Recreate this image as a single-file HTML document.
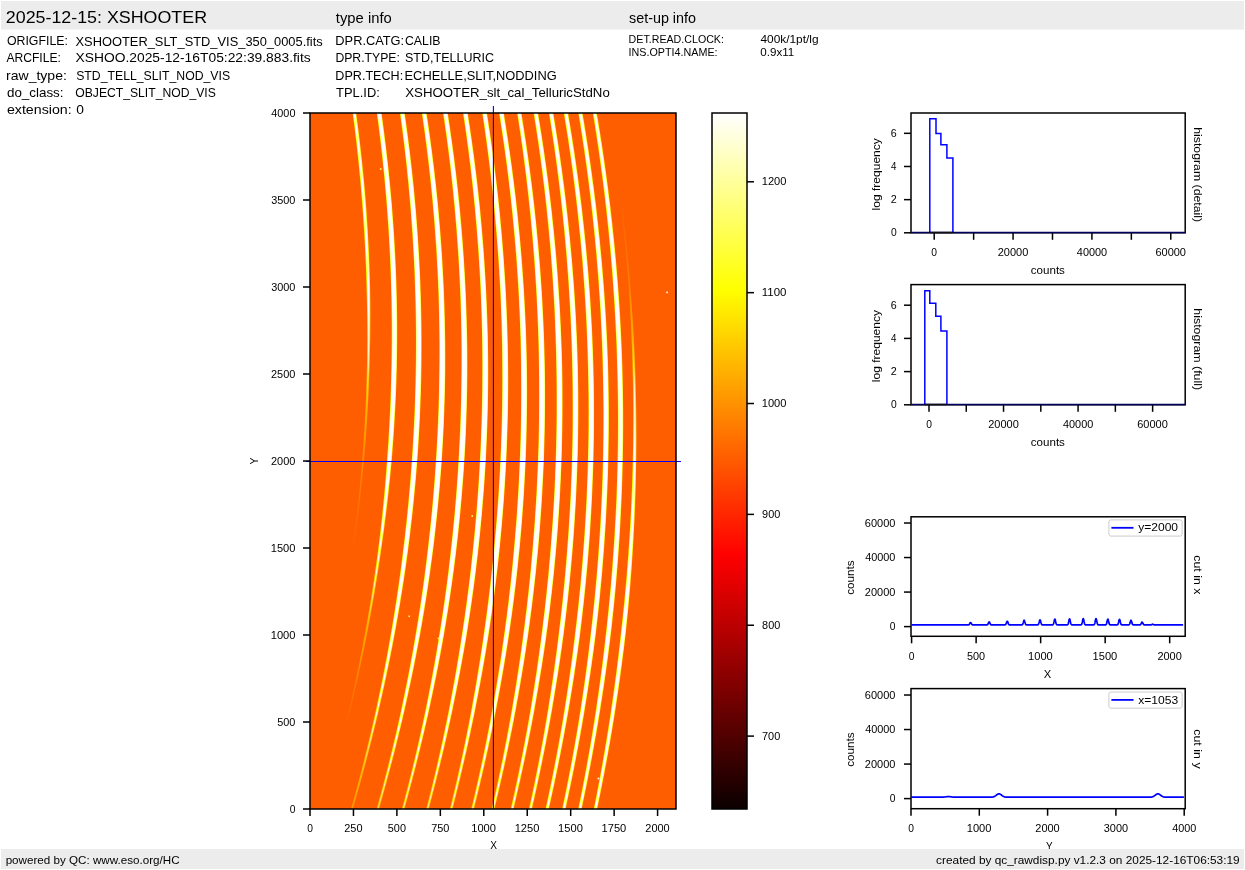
<!DOCTYPE html><html><head><meta charset="utf-8"><style>html,body{margin:0;padding:0;background:#fff;width:1245px;height:870px;overflow:hidden;position:relative}</style></head><body><svg width="1245" height="870" viewBox="0 0 1245 870" style="position:absolute;left:0;top:0;will-change:transform" font-family='"Liberation Sans", sans-serif'>
<defs>
<linearGradient id="hot" x1="0" y1="1" x2="0" y2="0">
<stop offset="0" stop-color="rgb(11,0,0)"/>
<stop offset="0.365" stop-color="rgb(255,0,0)"/>
<stop offset="0.746" stop-color="rgb(255,255,0)"/>
<stop offset="1" stop-color="rgb(255,255,255)"/>
</linearGradient>
</defs>
<rect x="0" y="0" width="1245" height="870" fill="#fff"/>
<rect x="1" y="1" width="1243" height="28.6" fill="#ececec"/>
<rect x="1" y="849" width="1243" height="19.8" fill="#ececec"/>
<text x="5.80" y="22.70" font-size="17.30" textLength="201.22" lengthAdjust="spacingAndGlyphs" fill="#000">2025-12-15: XSHOOTER</text>
<text x="335.88" y="22.80" font-size="13.80" textLength="55.84" lengthAdjust="spacingAndGlyphs" fill="#000">type info</text>
<text x="629.00" y="22.80" font-size="13.80" textLength="67.00" lengthAdjust="spacingAndGlyphs" fill="#000">set-up info</text>
<text x="6.92" y="45.20" font-size="12.80" textLength="61.01" lengthAdjust="spacingAndGlyphs" fill="#000">ORIGFILE:</text>
<text x="75.51" y="45.70" font-size="12.80" textLength="247.15" lengthAdjust="spacingAndGlyphs" fill="#000">XSHOOTER_SLT_STD_VIS_350_0005.fits</text>
<text x="6.38" y="61.90" font-size="12.80" textLength="54.53" lengthAdjust="spacingAndGlyphs" fill="#000">ARCFILE:</text>
<text x="75.49" y="61.80" font-size="12.80" textLength="235.21" lengthAdjust="spacingAndGlyphs" fill="#000">XSHOO.2025-12-16T05:22:39.883.fits</text>
<text x="6.07" y="80.10" font-size="12.80" textLength="60.81" lengthAdjust="spacingAndGlyphs" fill="#000">raw_type:</text>
<text x="76.14" y="80.30" font-size="12.80" textLength="154.02" lengthAdjust="spacingAndGlyphs" fill="#000">STD_TELL_SLIT_NOD_VIS</text>
<text x="6.94" y="97.20" font-size="12.80" textLength="56.59" lengthAdjust="spacingAndGlyphs" fill="#000">do_class:</text>
<text x="75.22" y="96.70" font-size="12.80" textLength="140.63" lengthAdjust="spacingAndGlyphs" fill="#000">OBJECT_SLIT_NOD_VIS</text>
<text x="6.90" y="113.50" font-size="12.80" textLength="64.80" lengthAdjust="spacingAndGlyphs" fill="#000">extension:</text>
<text x="76.16" y="113.50" font-size="12.80" textLength="7.68" lengthAdjust="spacingAndGlyphs" fill="#000">0</text>
<text x="335.36" y="44.80" font-size="12.80" textLength="68.79" lengthAdjust="spacingAndGlyphs" fill="#000">DPR.CATG:</text>
<text x="404.97" y="44.80" font-size="12.80" textLength="35.57" lengthAdjust="spacingAndGlyphs" fill="#000">CALIB</text>
<text x="335.40" y="61.90" font-size="12.80" textLength="64.52" lengthAdjust="spacingAndGlyphs" fill="#000">DPR.TYPE:</text>
<text x="405.03" y="61.90" font-size="12.80" textLength="88.94" lengthAdjust="spacingAndGlyphs" fill="#000">STD,TELLURIC</text>
<text x="335.37" y="79.90" font-size="12.80" textLength="67.78" lengthAdjust="spacingAndGlyphs" fill="#000">DPR.TECH:</text>
<text x="404.56" y="79.90" font-size="12.80" textLength="152.20" lengthAdjust="spacingAndGlyphs" fill="#000">ECHELLE,SLIT,NODDING</text>
<text x="336.11" y="96.80" font-size="12.80" textLength="43.67" lengthAdjust="spacingAndGlyphs" fill="#000">TPL.ID:</text>
<text x="405.30" y="96.80" font-size="12.80" textLength="204.45" lengthAdjust="spacingAndGlyphs" fill="#000">XSHOOTER_slt_cal_TelluricStdNo</text>
<text x="628.64" y="42.90" font-size="10.40" textLength="95.32" lengthAdjust="spacingAndGlyphs" fill="#000">DET.READ.CLOCK:</text>
<text x="760.43" y="42.90" font-size="10.40" textLength="58.14" lengthAdjust="spacingAndGlyphs" fill="#000">400k/1pt/lg</text>
<text x="628.51" y="55.70" font-size="10.40" textLength="89.08" lengthAdjust="spacingAndGlyphs" fill="#000">INS.OPTI4.NAME:</text>
<text x="760.26" y="55.70" font-size="10.40" textLength="34.00" lengthAdjust="spacingAndGlyphs" fill="#000">0.9x11</text>
<text x="5.65" y="864.00" font-size="10.40" textLength="173.89" lengthAdjust="spacingAndGlyphs" fill="#000">powered by QC: www.eso.org/HC</text>
<text x="936.10" y="864.30" font-size="10.40" textLength="303.56" lengthAdjust="spacingAndGlyphs" fill="#000">created by qc_rawdisp.py v1.2.3 on 2025-12-16T06:53:19</text>
<rect x="310.0" y="113.0" width="366.0" height="696.0" fill="rgb(255,94,0)"/>
<clipPath id="imgclip"><rect x="310.0" y="113.0" width="366.0" height="696.0"/></clipPath>
<g clip-path="url(#imgclip)">
<linearGradient id="ag0" gradientUnits="userSpaceOnUse" x1="0" y1="113" x2="0" y2="809"><stop offset="0.000" stop-color="rgb(255, 255, 0)"/><stop offset="0.125" stop-color="rgb(255, 255, 0)"/><stop offset="0.250" stop-color="rgb(255, 255, 0)"/><stop offset="0.375" stop-color="rgb(255, 200, 0)"/><stop offset="0.500" stop-color="rgb(255, 137, 0)"/><stop offset="0.625" stop-color="rgb(255, 94, 0)"/><stop offset="0.750" stop-color="rgb(255, 94, 0)"/><stop offset="0.875" stop-color="rgb(255, 94, 0)"/><stop offset="1.000" stop-color="rgb(255, 94, 0)"/></linearGradient>
<path d="M351.97,108.0 L352.65,113.0 L353.31,118.0 L353.96,123.0 L354.59,128.0 L355.20,133.0 L355.80,138.0 L356.38,143.0 L356.95,148.1 L357.50,153.1 L358.03,158.1 L358.55,163.1 L359.05,168.1 L359.54,173.1 L360.01,178.1 L360.46,183.1 L360.90,188.1 L361.32,193.1 L361.73,198.1 L362.13,203.1 L362.52,208.1 L362.89,213.1 L363.25,218.2 L363.59,223.2 L363.92,228.2 L364.23,233.2 L364.52,238.2 L364.80,243.2 L365.06,248.2 L365.31,253.2 L365.54,258.2 L365.75,263.2 L365.95,268.2 L366.13,273.2 L366.30,278.2 L366.45,283.2 L366.59,288.3 L366.73,293.3 L366.85,298.3 L366.96,303.3 L367.05,308.3 L367.13,313.3 L367.19,318.3 L367.23,323.3 L367.26,328.3 L367.27,333.3 L367.27,338.3 L367.25,343.3 L367.21,348.3 L367.16,353.3 L367.09,358.4 L367.01,363.4 L366.91,368.4 L366.80,373.4 L366.66,378.4 L366.51,383.4 L366.35,388.4 L366.17,393.4 L365.97,398.4 L365.76,403.4 L365.53,408.4 L365.28,413.4 L365.02,418.4 L364.74,423.4 L364.45,428.5 L364.14,433.5 L363.82,438.5 L363.48,443.5 L363.12,448.5 L362.75,453.5 L362.36,458.5 L361.95,463.5 L361.53,468.5 L361.08,473.5 L360.62,478.5 L360.15,483.5 L359.65,488.5 L359.15,493.5 L358.62,498.6 L358.08,503.6 L357.53,508.6 L356.96,513.6 L356.37,518.6 L355.77,523.6 L355.15,528.6 L354.51,533.6 L353.86,538.6 L353.20,543.6 L352.51,548.6 L351.80,553.6 L351.07,558.6 L350.32,563.6 L349.56,568.7 L348.78,573.7 L347.98,578.7 L347.17,583.7 L346.35,588.7 L345.51,593.7 L344.65,598.7 L343.77,603.7 L342.88,608.7 L341.98,613.7 L341.06,618.7 L340.12,623.7 L339.16,628.7 L338.20,633.7 L337.21,638.8 L336.21,643.8 L335.19,648.8 L334.16,653.8 L333.11,658.8 L332.05,663.8 L330.96,668.8 L329.87,673.8 L328.76,678.8 L327.63,683.8 L326.48,688.8 L325.32,693.8 L324.15,698.8 L322.96,703.8 L321.75,708.9 L320.52,713.9 L319.28,718.9 L318.03,723.9 L316.76,728.9 L315.47,733.9 L314.17,738.9 L312.85,743.9 L311.51,748.9 L310.16,753.9 L308.79,758.9 L307.41,763.9 L306.01,768.9 L304.60,773.9 L303.17,779.0 L301.72,784.0 L300.26,789.0 L298.78,794.0 L297.29,799.0 L295.78,804.0 L294.25,809.0 L292.71,814.0 L293.81,814.0 L295.35,809.0 L296.88,804.0 L298.39,799.0 L299.88,794.0 L301.36,789.0 L302.82,784.0 L304.27,779.0 L305.70,773.9 L307.11,768.9 L308.51,763.9 L309.89,758.9 L311.26,753.9 L312.61,748.9 L313.95,743.9 L315.27,738.9 L316.57,733.9 L317.86,728.9 L319.13,723.9 L320.38,718.9 L321.62,713.9 L322.85,708.9 L324.06,703.8 L325.25,698.8 L326.42,693.8 L327.58,688.8 L328.73,683.8 L329.86,678.8 L330.97,673.8 L332.06,668.8 L333.15,663.8 L334.21,658.8 L335.26,653.8 L336.29,648.8 L337.31,643.8 L338.31,638.8 L339.30,633.7 L340.26,628.7 L341.22,623.7 L342.16,618.7 L343.08,613.7 L343.98,608.7 L344.87,603.7 L345.75,598.7 L346.61,593.7 L347.45,588.7 L348.27,583.7 L349.08,578.7 L349.88,573.7 L350.66,568.7 L351.42,563.6 L352.17,558.6 L352.90,553.6 L353.61,548.6 L354.33,543.6 L355.03,538.6 L355.71,533.6 L356.38,528.6 L357.03,523.6 L357.67,518.6 L358.29,513.6 L358.89,508.6 L359.48,503.6 L360.05,498.6 L360.61,493.5 L361.15,488.5 L361.67,483.5 L362.18,478.5 L362.67,473.5 L363.15,468.5 L363.61,463.5 L364.06,458.5 L364.50,453.5 L364.92,448.5 L365.33,443.5 L365.72,438.5 L366.09,433.5 L366.45,428.5 L366.79,423.4 L367.12,418.4 L367.43,413.4 L367.72,408.4 L368.00,403.4 L368.27,398.4 L368.51,393.4 L368.74,388.4 L368.96,383.4 L369.16,378.4 L369.34,373.4 L369.51,368.4 L369.67,363.4 L369.81,358.4 L369.93,353.3 L370.03,348.3 L370.13,343.3 L370.20,338.3 L370.26,333.3 L370.30,328.3 L370.33,323.3 L370.34,318.3 L370.34,313.3 L370.31,308.3 L370.28,303.3 L370.23,298.3 L370.16,293.3 L370.07,288.3 L369.96,283.2 L369.82,278.2 L369.67,273.2 L369.50,268.2 L369.32,263.2 L369.12,258.2 L368.90,253.2 L368.67,248.2 L368.42,243.2 L368.16,238.2 L367.88,233.2 L367.58,228.2 L367.27,223.2 L366.94,218.2 L366.60,213.1 L366.24,208.1 L365.86,203.1 L365.47,198.1 L365.05,193.1 L364.61,188.1 L364.16,183.1 L363.69,178.1 L363.20,173.1 L362.70,168.1 L362.19,163.1 L361.66,158.1 L361.11,153.1 L360.54,148.1 L359.96,143.0 L359.37,138.0 L358.76,133.0 L358.13,128.0 L357.49,123.0 L356.83,118.0 L356.15,113.0 L355.47,108.0Z" fill="url(#ag0)"/>
<path d="M352.87,108.0 L353.55,113.0 L354.21,118.0 L354.85,123.0 L355.48,128.0 L356.09,133.0 L356.69,138.0 L357.27,143.0 L357.83,148.1 L358.38,153.1 L358.91,158.1 L359.43,163.1 L359.93,168.1 L360.41,173.1 L360.88,178.1 L361.33,183.1 L361.77,188.1 L362.19,193.1 L362.59,198.1 L362.99,203.1 L363.38,208.1 L363.76,213.1 L364.12,218.2 L364.46,223.2 L364.79,228.2 L365.10,233.2 L365.40,238.2 L365.68,243.2 L365.94,248.2 L366.19,253.2 L366.42,258.2 L366.64,263.2 L366.84,268.2 L367.02,273.2 L367.19,278.2 L367.35,283.2 L367.49,288.3 L367.64,293.3 L367.77,298.3 L367.89,303.3 L367.99,308.3 L368.07,313.3 L368.14,318.3 L368.20,323.3 L368.23,328.3 L368.26,333.3 L368.26,338.3 L368.25,343.3 L368.22,348.3 L368.18,353.3 L368.12,358.4 L368.05,363.4 L367.96,368.4 L367.85,373.4 L367.73,378.4 L367.59,383.4 L367.43,388.4 L367.26,393.4 L367.07,398.4 L366.86,403.4 L366.63,408.4 L366.36,413.4 L366.07,418.4 L365.77,423.4 L365.45,428.5 L365.12,433.5 L364.77,438.5 L364.40,443.5 L364.02,448.5 L363.63,453.5 L363.21,458.5 L362.78,463.5 L362.34,468.5 L361.88,473.5 L361.40,478.5 L360.91,483.5 L360.40,488.5 L359.88,493.5 L359.34,498.6 L358.78,503.6 L358.21,508.6 L357.62,513.6 L357.02,518.6 L356.40,523.6 L355.76,528.6 L355.11,533.6 L354.44,538.6 L353.76,543.6 L353.06,548.6 L352.35,553.6 L351.62,558.6 L350.87,563.6 L350.11,568.7 L349.33,573.7 L348.53,578.7 L347.72,583.7 L346.90,588.7 L346.06,593.7 L345.20,598.7 L344.32,603.7 L343.43,608.7 L342.53,613.7 L341.61,618.7 L340.67,623.7 L339.71,628.7 L338.75,633.7 L337.76,638.8 L336.76,643.8 L335.74,648.8 L334.71,653.8 L333.66,658.8 L332.60,663.8 L331.51,668.8 L330.42,673.8 L329.31,678.8 L328.18,683.8 L327.03,688.8 L325.87,693.8 L324.70,698.8 L323.51,703.8 L322.30,708.9 L321.07,713.9 L319.83,718.9 L318.58,723.9 L317.31,728.9 L316.02,733.9 L314.72,738.9 L313.40,743.9 L312.06,748.9 L310.71,753.9 L309.34,758.9 L307.96,763.9 L306.56,768.9 L305.15,773.9 L303.72,779.0 L302.27,784.0 L300.81,789.0 L299.33,794.0 L297.84,799.0 L296.33,804.0 L294.80,809.0 L293.26,814.0 L293.26,814.0 L294.80,809.0 L296.33,804.0 L297.84,799.0 L299.33,794.0 L300.81,789.0 L302.27,784.0 L303.72,779.0 L305.15,773.9 L306.56,768.9 L307.96,763.9 L309.34,758.9 L310.71,753.9 L312.06,748.9 L313.40,743.9 L314.72,738.9 L316.02,733.9 L317.31,728.9 L318.58,723.9 L319.83,718.9 L321.07,713.9 L322.30,708.9 L323.51,703.8 L324.70,698.8 L325.87,693.8 L327.03,688.8 L328.18,683.8 L329.31,678.8 L330.42,673.8 L331.51,668.8 L332.60,663.8 L333.66,658.8 L334.71,653.8 L335.74,648.8 L336.76,643.8 L337.76,638.8 L338.75,633.7 L339.71,628.7 L340.67,623.7 L341.61,618.7 L342.53,613.7 L343.43,608.7 L344.32,603.7 L345.20,598.7 L346.06,593.7 L346.90,588.7 L347.72,583.7 L348.53,578.7 L349.33,573.7 L350.11,568.7 L350.87,563.6 L351.62,558.6 L352.35,553.6 L353.06,548.6 L353.76,543.6 L354.44,538.6 L355.11,533.6 L355.76,528.6 L356.40,523.6 L357.02,518.6 L357.62,513.6 L358.21,508.6 L358.78,503.6 L359.34,498.6 L359.88,493.5 L360.40,488.5 L360.91,483.5 L361.40,478.5 L361.88,473.5 L362.34,468.5 L362.78,463.5 L363.21,458.5 L363.63,453.5 L364.02,448.5 L364.40,443.5 L364.77,438.5 L365.12,433.5 L365.45,428.5 L365.77,423.4 L366.07,418.4 L366.36,413.4 L366.63,408.4 L366.89,403.4 L367.17,398.4 L367.42,393.4 L367.66,388.4 L367.88,383.4 L368.09,378.4 L368.28,373.4 L368.46,368.4 L368.63,363.4 L368.77,358.4 L368.91,353.3 L369.02,348.3 L369.12,343.3 L369.21,338.3 L369.27,333.3 L369.33,328.3 L369.36,323.3 L369.38,318.3 L369.39,313.3 L369.38,308.3 L369.35,303.3 L369.31,298.3 L369.25,293.3 L369.17,288.3 L369.06,283.2 L368.93,278.2 L368.78,273.2 L368.61,268.2 L368.43,263.2 L368.23,258.2 L368.01,253.2 L367.79,248.2 L367.54,243.2 L367.28,238.2 L367.00,233.2 L366.71,228.2 L366.40,223.2 L366.07,218.2 L365.73,213.1 L365.37,208.1 L365.00,203.1 L364.61,198.1 L364.18,193.1 L363.74,188.1 L363.29,183.1 L362.82,178.1 L362.33,173.1 L361.83,168.1 L361.31,163.1 L360.78,158.1 L360.23,153.1 L359.66,148.1 L359.08,143.0 L358.48,138.0 L357.87,133.0 L357.24,128.0 L356.59,123.0 L355.93,118.0 L355.25,113.0 L354.57,108.0Z" fill="#fff"/>
<linearGradient id="ag1" gradientUnits="userSpaceOnUse" x1="0" y1="113" x2="0" y2="809"><stop offset="0.000" stop-color="rgb(255, 255, 0)"/><stop offset="0.125" stop-color="rgb(255, 255, 0)"/><stop offset="0.250" stop-color="rgb(255, 255, 0)"/><stop offset="0.375" stop-color="rgb(255, 255, 0)"/><stop offset="0.500" stop-color="rgb(255, 255, 0)"/><stop offset="0.625" stop-color="rgb(255, 243, 0)"/><stop offset="0.750" stop-color="rgb(255, 165, 0)"/><stop offset="0.875" stop-color="rgb(255, 94, 0)"/><stop offset="1.000" stop-color="rgb(255, 94, 0)"/></linearGradient>
<path d="M376.12,108.0 L376.82,113.0 L377.49,118.0 L378.15,123.0 L378.79,128.0 L379.42,133.0 L380.03,138.0 L380.63,143.0 L381.21,148.1 L381.77,153.1 L382.32,158.1 L382.85,163.1 L383.36,168.1 L383.86,173.1 L384.35,178.1 L384.81,183.1 L385.27,188.1 L385.70,193.1 L386.12,198.1 L386.53,203.1 L386.93,208.1 L387.31,213.1 L387.67,218.2 L388.02,223.2 L388.36,228.2 L388.67,233.2 L388.97,238.2 L389.26,243.2 L389.53,248.2 L389.78,253.2 L390.02,258.2 L390.24,263.2 L390.45,268.2 L390.64,273.2 L390.81,278.2 L390.97,283.2 L391.12,288.3 L391.25,293.3 L391.37,298.3 L391.47,303.3 L391.56,308.3 L391.63,313.3 L391.68,318.3 L391.72,323.3 L391.75,328.3 L391.75,333.3 L391.74,338.3 L391.72,343.3 L391.68,348.3 L391.62,353.3 L391.55,358.4 L391.47,363.4 L391.36,368.4 L391.24,373.4 L391.13,378.4 L391.00,383.4 L390.85,388.4 L390.69,393.4 L390.51,398.4 L390.32,403.4 L390.11,408.4 L389.88,413.4 L389.64,418.4 L389.39,423.4 L389.12,428.5 L388.83,433.5 L388.52,438.5 L388.20,443.5 L387.87,448.5 L387.52,453.5 L387.15,458.5 L386.78,463.5 L386.40,468.5 L386.02,473.5 L385.61,478.5 L385.19,483.5 L384.75,488.5 L384.30,493.5 L383.83,498.6 L383.34,503.6 L382.84,508.6 L382.33,513.6 L381.80,518.6 L381.25,523.6 L380.68,528.6 L380.10,533.6 L379.51,538.6 L378.90,543.6 L378.27,548.6 L377.61,553.6 L376.94,558.6 L376.25,563.6 L375.54,568.7 L374.82,573.7 L374.08,578.7 L373.33,583.7 L372.56,588.7 L371.78,593.7 L370.98,598.7 L370.16,603.7 L369.33,608.7 L368.48,613.7 L367.62,618.7 L366.74,623.7 L365.84,628.7 L364.93,633.7 L364.00,638.8 L363.06,643.8 L362.10,648.8 L361.12,653.8 L360.13,658.8 L359.12,663.8 L358.09,668.8 L357.05,673.8 L356.00,678.8 L354.92,683.8 L353.84,688.8 L352.73,693.8 L351.61,698.8 L350.48,703.8 L349.33,708.9 L348.16,713.9 L346.98,718.9 L345.77,723.9 L344.53,728.9 L343.27,733.9 L341.99,738.9 L340.70,743.9 L339.40,748.9 L338.08,753.9 L336.74,758.9 L335.39,763.9 L334.02,768.9 L332.64,773.9 L331.24,779.0 L329.82,784.0 L328.39,789.0 L326.94,794.0 L325.48,799.0 L324.00,804.0 L322.50,809.0 L320.99,814.0 L322.09,814.0 L323.60,809.0 L325.10,804.0 L326.58,799.0 L328.04,794.0 L329.49,789.0 L330.92,784.0 L332.34,779.0 L333.74,773.9 L335.12,768.9 L336.49,763.9 L337.84,758.9 L339.18,753.9 L340.50,748.9 L341.80,743.9 L343.09,738.9 L344.37,733.9 L345.63,728.9 L346.87,723.9 L348.11,718.9 L349.35,713.9 L350.57,708.9 L351.78,703.8 L352.97,698.8 L354.14,693.8 L355.30,688.8 L356.44,683.8 L357.57,678.8 L358.68,673.8 L359.78,668.8 L360.86,663.8 L361.92,658.8 L362.97,653.8 L364.00,648.8 L365.02,643.8 L366.02,638.8 L367.01,633.7 L367.98,628.7 L368.93,623.7 L369.87,618.7 L370.80,613.7 L371.71,608.7 L372.60,603.7 L373.48,598.7 L374.34,593.7 L375.18,588.7 L376.01,583.7 L376.83,578.7 L377.62,573.7 L378.41,568.7 L379.17,563.6 L379.92,558.6 L380.66,553.6 L381.38,548.6 L382.09,543.6 L382.80,538.6 L383.48,533.6 L384.15,528.6 L384.81,523.6 L385.45,518.6 L386.07,513.6 L386.68,508.6 L387.27,503.6 L387.85,498.6 L388.41,493.5 L388.95,488.5 L389.48,483.5 L389.99,478.5 L390.49,473.5 L390.97,468.5 L391.43,463.5 L391.87,458.5 L392.28,453.5 L392.67,448.5 L393.05,443.5 L393.41,438.5 L393.76,433.5 L394.08,428.5 L394.40,423.4 L394.70,418.4 L394.98,413.4 L395.24,408.4 L395.50,403.4 L395.73,398.4 L395.95,393.4 L396.15,388.4 L396.34,383.4 L396.51,378.4 L396.66,373.4 L396.78,368.4 L396.89,363.4 L396.97,358.4 L397.04,353.3 L397.10,348.3 L397.14,343.3 L397.16,338.3 L397.17,333.3 L397.17,328.3 L397.14,323.3 L397.10,318.3 L397.05,313.3 L396.98,308.3 L396.89,303.3 L396.79,298.3 L396.67,293.3 L396.54,288.3 L396.38,283.2 L396.21,278.2 L396.02,273.2 L395.82,268.2 L395.60,263.2 L395.36,258.2 L395.11,253.2 L394.84,248.2 L394.56,243.2 L394.26,238.2 L393.94,233.2 L393.61,228.2 L393.27,223.2 L392.90,218.2 L392.53,213.1 L392.13,208.1 L391.72,203.1 L391.29,198.1 L390.85,193.1 L390.38,188.1 L389.90,183.1 L389.41,178.1 L388.89,173.1 L388.37,168.1 L387.82,163.1 L387.26,158.1 L386.69,153.1 L386.10,148.1 L385.49,143.0 L384.87,138.0 L384.23,133.0 L383.58,128.0 L382.91,123.0 L382.22,118.0 L381.52,113.0 L380.82,108.0Z" fill="url(#ag1)"/>
<path d="M376.82,108.0 L377.52,113.0 L378.19,118.0 L378.84,123.0 L379.48,128.0 L380.10,133.0 L380.71,138.0 L381.30,143.0 L381.87,148.1 L382.43,153.1 L382.97,158.1 L383.50,163.1 L384.01,168.1 L384.51,173.1 L384.99,178.1 L385.45,183.1 L385.90,188.1 L386.33,193.1 L386.75,198.1 L387.15,203.1 L387.55,208.1 L387.92,213.1 L388.29,218.2 L388.63,223.2 L388.96,228.2 L389.28,233.2 L389.58,238.2 L389.86,243.2 L390.13,248.2 L390.38,253.2 L390.61,258.2 L390.83,263.2 L391.04,268.2 L391.22,273.2 L391.40,278.2 L391.55,283.2 L391.70,288.3 L391.83,293.3 L391.95,298.3 L392.05,303.3 L392.14,308.3 L392.21,313.3 L392.26,318.3 L392.30,323.3 L392.33,328.3 L392.33,333.3 L392.32,338.3 L392.30,343.3 L392.26,348.3 L392.20,353.3 L392.13,358.4 L392.05,363.4 L391.94,368.4 L391.82,373.4 L391.71,378.4 L391.59,383.4 L391.45,388.4 L391.30,393.4 L391.13,398.4 L390.94,403.4 L390.74,408.4 L390.52,413.4 L390.29,418.4 L390.04,423.4 L389.77,428.5 L389.49,433.5 L389.19,438.5 L388.88,443.5 L388.55,448.5 L388.21,453.5 L387.85,458.5 L387.49,463.5 L387.13,468.5 L386.75,473.5 L386.36,478.5 L385.96,483.5 L385.53,488.5 L385.10,493.5 L384.64,498.6 L384.17,503.6 L383.69,508.6 L383.19,513.6 L382.67,518.6 L382.14,523.6 L381.59,528.6 L381.02,533.6 L380.44,538.6 L379.85,543.6 L379.23,548.6 L378.59,553.6 L377.92,558.6 L377.24,563.6 L376.55,568.7 L375.84,573.7 L375.11,578.7 L374.37,583.7 L373.61,588.7 L372.83,593.7 L372.04,598.7 L371.24,603.7 L370.42,608.7 L369.58,613.7 L368.72,618.7 L367.84,623.7 L366.91,628.7 L365.97,633.7 L365.01,638.8 L364.04,643.8 L363.05,648.8 L362.04,653.8 L361.02,658.8 L359.99,663.8 L358.94,668.8 L357.87,673.8 L356.78,678.8 L355.68,683.8 L354.57,688.8 L353.44,693.8 L352.29,698.8 L351.13,703.8 L349.95,708.9 L348.75,713.9 L347.54,718.9 L346.32,723.9 L345.08,728.9 L343.82,733.9 L342.54,738.9 L341.25,743.9 L339.95,748.9 L338.63,753.9 L337.29,758.9 L335.94,763.9 L334.57,768.9 L333.19,773.9 L331.79,779.0 L330.37,784.0 L328.94,789.0 L327.49,794.0 L326.03,799.0 L324.55,804.0 L323.05,809.0 L321.54,814.0 L321.54,814.0 L323.05,809.0 L324.55,804.0 L326.03,799.0 L327.49,794.0 L328.94,789.0 L330.37,784.0 L331.79,779.0 L333.19,773.9 L334.57,768.9 L335.94,763.9 L337.29,758.9 L338.63,753.9 L339.95,748.9 L341.25,743.9 L342.54,738.9 L343.82,733.9 L345.08,728.9 L346.32,723.9 L347.54,718.9 L348.75,713.9 L349.95,708.9 L351.13,703.8 L352.29,698.8 L353.44,693.8 L354.57,688.8 L355.68,683.8 L356.78,678.8 L357.87,673.8 L358.94,668.8 L359.99,663.8 L361.02,658.8 L362.04,653.8 L363.05,648.8 L364.04,643.8 L365.01,638.8 L365.97,633.7 L366.91,628.7 L367.84,623.7 L368.77,618.7 L369.70,613.7 L370.62,608.7 L371.52,603.7 L372.41,598.7 L373.28,593.7 L374.14,588.7 L374.98,583.7 L375.80,578.7 L376.61,573.7 L377.40,568.7 L378.18,563.6 L378.94,558.6 L379.68,553.6 L380.41,548.6 L381.14,543.6 L381.86,538.6 L382.56,533.6 L383.25,528.6 L383.92,523.6 L384.57,518.6 L385.21,513.6 L385.83,508.6 L386.44,503.6 L387.03,498.6 L387.61,493.5 L388.17,488.5 L388.71,483.5 L389.24,478.5 L389.75,473.5 L390.25,468.5 L390.73,463.5 L391.17,458.5 L391.59,453.5 L391.99,448.5 L392.37,443.5 L392.74,438.5 L393.09,433.5 L393.43,428.5 L393.75,423.4 L394.06,418.4 L394.34,413.4 L394.62,408.4 L394.87,403.4 L395.12,398.4 L395.34,393.4 L395.55,388.4 L395.75,383.4 L395.92,378.4 L396.08,373.4 L396.20,368.4 L396.31,363.4 L396.39,358.4 L396.46,353.3 L396.52,348.3 L396.56,343.3 L396.58,338.3 L396.59,333.3 L396.59,328.3 L396.56,323.3 L396.52,318.3 L396.47,313.3 L396.40,308.3 L396.31,303.3 L396.21,298.3 L396.09,293.3 L395.96,288.3 L395.80,283.2 L395.62,278.2 L395.43,273.2 L395.23,268.2 L395.00,263.2 L394.77,258.2 L394.51,253.2 L394.24,248.2 L393.96,243.2 L393.66,238.2 L393.34,233.2 L393.01,228.2 L392.66,223.2 L392.29,218.2 L391.91,213.1 L391.52,208.1 L391.10,203.1 L390.67,198.1 L390.22,193.1 L389.75,188.1 L389.27,183.1 L388.77,178.1 L388.25,173.1 L387.72,168.1 L387.17,163.1 L386.61,158.1 L386.03,153.1 L385.43,148.1 L384.82,143.0 L384.19,138.0 L383.55,133.0 L382.89,128.0 L382.22,123.0 L381.53,118.0 L380.82,113.0 L380.12,108.0Z" fill="#fff"/>
<linearGradient id="ag2" gradientUnits="userSpaceOnUse" x1="0" y1="113" x2="0" y2="809"><stop offset="0.000" stop-color="rgb(255, 255, 0)"/><stop offset="0.125" stop-color="rgb(255, 255, 0)"/><stop offset="0.250" stop-color="rgb(255, 255, 0)"/><stop offset="0.375" stop-color="rgb(255, 255, 0)"/><stop offset="0.500" stop-color="rgb(255, 255, 0)"/><stop offset="0.625" stop-color="rgb(255, 255, 0)"/><stop offset="0.750" stop-color="rgb(255, 255, 0)"/><stop offset="0.875" stop-color="rgb(255, 218, 0)"/><stop offset="1.000" stop-color="rgb(255, 147, 0)"/></linearGradient>
<path d="M399.23,108.0 L399.95,113.0 L400.64,118.0 L401.32,123.0 L401.98,128.0 L402.63,133.0 L403.26,138.0 L403.87,143.0 L404.47,148.1 L405.06,153.1 L405.62,158.1 L406.18,163.1 L406.72,168.1 L407.24,173.1 L407.74,178.1 L408.23,183.1 L408.71,188.1 L409.17,193.1 L409.62,198.1 L410.05,203.1 L410.46,208.1 L410.87,213.1 L411.25,218.2 L411.63,223.2 L411.98,228.2 L412.32,233.2 L412.65,238.2 L412.96,243.2 L413.25,248.2 L413.53,253.2 L413.79,258.2 L414.04,263.2 L414.27,268.2 L414.49,273.2 L414.69,278.2 L414.87,283.2 L415.04,288.3 L415.20,293.3 L415.35,298.3 L415.48,303.3 L415.59,308.3 L415.69,313.3 L415.77,318.3 L415.84,323.3 L415.89,328.3 L415.93,333.3 L415.95,338.3 L415.95,343.3 L415.94,348.3 L415.92,353.3 L415.88,358.4 L415.82,363.4 L415.75,368.4 L415.66,373.4 L415.56,378.4 L415.45,383.4 L415.33,388.4 L415.19,393.4 L415.03,398.4 L414.86,403.4 L414.67,408.4 L414.47,413.4 L414.25,418.4 L414.01,423.4 L413.76,428.5 L413.50,433.5 L413.22,438.5 L412.92,443.5 L412.61,448.5 L412.28,453.5 L411.94,458.5 L411.59,463.5 L411.23,468.5 L410.85,473.5 L410.46,478.5 L410.05,483.5 L409.63,488.5 L409.19,493.5 L408.73,498.6 L408.26,503.6 L407.78,508.6 L407.28,513.6 L406.76,518.6 L406.23,523.6 L405.68,528.6 L405.12,533.6 L404.54,538.6 L403.95,543.6 L403.34,548.6 L402.73,553.6 L402.11,558.6 L401.46,563.6 L400.81,568.7 L400.13,573.7 L399.45,578.7 L398.74,583.7 L398.02,588.7 L397.29,593.7 L396.54,598.7 L395.77,603.7 L394.99,608.7 L394.20,613.7 L393.38,618.7 L392.56,623.7 L391.71,628.7 L390.86,633.7 L389.98,638.8 L389.09,643.8 L388.19,648.8 L387.27,653.8 L386.34,658.8 L385.39,663.8 L384.42,668.8 L383.44,673.8 L382.45,678.8 L381.43,683.8 L380.41,688.8 L379.36,693.8 L378.30,698.8 L377.23,703.8 L376.14,708.9 L375.04,713.9 L373.92,718.9 L372.78,723.9 L371.62,728.9 L370.45,733.9 L369.27,738.9 L368.07,743.9 L366.85,748.9 L365.61,753.9 L364.37,758.9 L363.10,763.9 L361.82,768.9 L360.53,773.9 L359.22,779.0 L357.89,784.0 L356.55,789.0 L355.19,794.0 L353.82,799.0 L352.44,804.0 L351.03,809.0 L349.59,814.0 L351.41,814.0 L352.85,809.0 L354.31,804.0 L355.75,799.0 L357.18,794.0 L358.59,789.0 L359.99,784.0 L361.37,779.0 L362.74,773.9 L364.09,768.9 L365.42,763.9 L366.74,758.9 L368.04,753.9 L369.33,748.9 L370.60,743.9 L371.86,738.9 L373.10,733.9 L374.33,728.9 L375.54,723.9 L376.74,718.9 L377.92,713.9 L379.09,708.9 L380.24,703.8 L381.38,698.8 L382.50,693.8 L383.61,688.8 L384.70,683.8 L385.77,678.8 L386.83,673.8 L387.88,668.8 L388.91,663.8 L389.92,658.8 L390.92,653.8 L391.90,648.8 L392.87,643.8 L393.82,638.8 L394.75,633.7 L395.67,628.7 L396.58,623.7 L397.47,618.7 L398.34,613.7 L399.20,608.7 L400.04,603.7 L400.86,598.7 L401.67,593.7 L402.47,588.7 L403.25,583.7 L404.01,578.7 L404.76,573.7 L405.50,568.7 L406.21,563.6 L406.92,558.6 L407.60,553.6 L408.27,548.6 L408.92,543.6 L409.55,538.6 L410.16,533.6 L410.75,528.6 L411.33,523.6 L411.90,518.6 L412.45,513.6 L412.98,508.6 L413.50,503.6 L414.00,498.6 L414.49,493.5 L414.96,488.5 L415.42,483.5 L415.86,478.5 L416.28,473.5 L416.69,468.5 L417.09,463.5 L417.46,458.5 L417.81,453.5 L418.15,448.5 L418.47,443.5 L418.77,438.5 L419.06,433.5 L419.33,428.5 L419.59,423.4 L419.83,418.4 L420.06,413.4 L420.27,408.4 L420.47,403.4 L420.65,398.4 L420.81,393.4 L420.96,388.4 L421.10,383.4 L421.22,378.4 L421.32,373.4 L421.40,368.4 L421.46,363.4 L421.51,358.4 L421.54,353.3 L421.56,348.3 L421.56,343.3 L421.55,338.3 L421.52,333.3 L421.48,328.3 L421.42,323.3 L421.34,318.3 L421.25,313.3 L421.14,308.3 L421.02,303.3 L420.88,298.3 L420.73,293.3 L420.56,288.3 L420.37,283.2 L420.17,278.2 L419.95,273.2 L419.71,268.2 L419.46,263.2 L419.20,258.2 L418.91,253.2 L418.62,248.2 L418.30,243.2 L417.97,238.2 L417.63,233.2 L417.27,228.2 L416.89,223.2 L416.50,218.2 L416.10,213.1 L415.68,208.1 L415.24,203.1 L414.78,198.1 L414.31,193.1 L413.82,188.1 L413.32,183.1 L412.80,178.1 L412.27,173.1 L411.72,168.1 L411.15,163.1 L410.57,158.1 L409.98,153.1 L409.37,148.1 L408.74,143.0 L408.10,138.0 L407.44,133.0 L406.76,128.0 L406.08,123.0 L405.37,118.0 L404.65,113.0 L403.93,108.0Z" fill="url(#ag2)"/>
<path d="M399.93,108.0 L400.65,113.0 L401.34,118.0 L402.01,123.0 L402.67,128.0 L403.31,133.0 L403.93,138.0 L404.55,143.0 L405.14,148.1 L405.72,153.1 L406.28,158.1 L406.83,163.1 L407.36,168.1 L407.88,173.1 L408.38,178.1 L408.87,183.1 L409.34,188.1 L409.80,193.1 L410.24,198.1 L410.66,203.1 L411.08,208.1 L411.48,213.1 L411.86,218.2 L412.23,223.2 L412.58,228.2 L412.92,233.2 L413.24,238.2 L413.55,243.2 L413.84,248.2 L414.11,253.2 L414.37,258.2 L414.62,263.2 L414.85,268.2 L415.06,273.2 L415.26,278.2 L415.44,283.2 L415.61,288.3 L415.77,293.3 L415.91,298.3 L416.04,303.3 L416.15,308.3 L416.25,313.3 L416.33,318.3 L416.39,323.3 L416.44,328.3 L416.48,333.3 L416.50,338.3 L416.50,343.3 L416.49,348.3 L416.46,353.3 L416.42,358.4 L416.36,363.4 L416.29,368.4 L416.20,373.4 L416.10,378.4 L416.00,383.4 L415.87,388.4 L415.73,393.4 L415.58,398.4 L415.40,403.4 L415.22,408.4 L415.02,413.4 L414.80,418.4 L414.57,423.4 L414.32,428.5 L414.05,433.5 L413.77,438.5 L413.48,443.5 L413.17,448.5 L412.84,453.5 L412.50,458.5 L412.15,463.5 L411.80,468.5 L411.43,473.5 L411.04,478.5 L410.64,483.5 L410.22,488.5 L409.79,493.5 L409.34,498.6 L408.87,503.6 L408.40,508.6 L407.90,513.6 L407.39,518.6 L406.86,523.6 L406.32,528.6 L405.77,533.6 L405.19,538.6 L404.60,543.6 L404.00,548.6 L403.40,553.6 L402.79,558.6 L402.16,563.6 L401.51,568.7 L400.85,573.7 L400.17,578.7 L399.47,583.7 L398.77,588.7 L398.04,593.7 L397.30,598.7 L396.55,603.7 L395.78,608.7 L394.99,613.7 L394.19,618.7 L393.37,623.7 L392.54,628.7 L391.69,633.7 L390.83,638.8 L389.95,643.8 L389.06,648.8 L388.15,653.8 L387.22,658.8 L386.28,663.8 L385.33,668.8 L384.36,673.8 L383.37,678.8 L382.37,683.8 L381.36,688.8 L380.32,693.8 L379.28,698.8 L378.21,703.8 L377.13,708.9 L376.04,713.9 L374.93,718.9 L373.80,723.9 L372.66,728.9 L371.50,733.9 L370.32,738.9 L369.13,743.9 L367.92,748.9 L366.69,753.9 L365.45,758.9 L364.20,763.9 L362.93,768.9 L361.63,773.9 L360.29,779.0 L358.94,784.0 L357.57,789.0 L356.19,794.0 L354.79,799.0 L353.37,804.0 L351.94,809.0 L350.50,814.0 L350.50,814.0 L351.94,809.0 L353.37,804.0 L354.79,799.0 L356.19,794.0 L357.57,789.0 L358.94,784.0 L360.29,779.0 L361.63,773.9 L362.98,768.9 L364.32,763.9 L365.65,758.9 L366.96,753.9 L368.26,748.9 L369.54,743.9 L370.81,738.9 L372.06,733.9 L373.30,728.9 L374.52,723.9 L375.72,718.9 L376.92,713.9 L378.10,708.9 L379.26,703.8 L380.41,698.8 L381.54,693.8 L382.66,688.8 L383.76,683.8 L384.84,678.8 L385.92,673.8 L386.97,668.8 L388.01,663.8 L389.03,658.8 L390.04,653.8 L391.04,648.8 L392.01,643.8 L392.98,638.8 L393.92,633.7 L394.85,628.7 L395.76,623.7 L396.66,618.7 L397.55,613.7 L398.41,608.7 L399.26,603.7 L400.10,598.7 L400.92,593.7 L401.73,588.7 L402.52,583.7 L403.29,578.7 L404.05,573.7 L404.79,568.7 L405.52,563.6 L406.24,558.6 L406.93,553.6 L407.61,548.6 L408.26,543.6 L408.90,538.6 L409.51,533.6 L410.11,528.6 L410.70,523.6 L411.27,518.6 L411.82,513.6 L412.36,508.6 L412.89,503.6 L413.40,498.6 L413.89,493.5 L414.37,488.5 L414.83,483.5 L415.27,478.5 L415.70,473.5 L416.12,468.5 L416.52,463.5 L416.90,458.5 L417.25,453.5 L417.59,448.5 L417.91,443.5 L418.21,438.5 L418.50,433.5 L418.78,428.5 L419.04,423.4 L419.28,418.4 L419.51,413.4 L419.72,408.4 L419.92,403.4 L420.10,398.4 L420.27,393.4 L420.42,388.4 L420.56,383.4 L420.68,378.4 L420.78,373.4 L420.86,368.4 L420.92,363.4 L420.97,358.4 L421.00,353.3 L421.01,348.3 L421.01,343.3 L421.00,338.3 L420.97,333.3 L420.92,328.3 L420.86,323.3 L420.79,318.3 L420.69,313.3 L420.58,308.3 L420.46,303.3 L420.32,298.3 L420.17,293.3 L420.00,288.3 L419.81,283.2 L419.60,278.2 L419.38,273.2 L419.14,268.2 L418.88,263.2 L418.61,258.2 L418.33,253.2 L418.03,248.2 L417.71,243.2 L417.38,238.2 L417.03,233.2 L416.67,228.2 L416.29,223.2 L415.90,218.2 L415.49,213.1 L415.06,208.1 L414.62,203.1 L414.16,198.1 L413.69,193.1 L413.19,188.1 L412.69,183.1 L412.16,178.1 L411.62,173.1 L411.07,168.1 L410.50,163.1 L409.91,158.1 L409.31,153.1 L408.70,148.1 L408.07,143.0 L407.42,138.0 L406.76,133.0 L406.08,128.0 L405.38,123.0 L404.68,118.0 L403.95,113.0 L403.23,108.0Z" fill="#fff"/>
<linearGradient id="ag3" gradientUnits="userSpaceOnUse" x1="0" y1="113" x2="0" y2="809"><stop offset="0.000" stop-color="rgb(255, 255, 0)"/><stop offset="0.125" stop-color="rgb(255, 255, 0)"/><stop offset="0.250" stop-color="rgb(255, 255, 0)"/><stop offset="0.375" stop-color="rgb(255, 255, 0)"/><stop offset="0.500" stop-color="rgb(255, 255, 0)"/><stop offset="0.625" stop-color="rgb(255, 255, 0)"/><stop offset="0.750" stop-color="rgb(255, 255, 0)"/><stop offset="0.875" stop-color="rgb(255, 253, 0)"/><stop offset="1.000" stop-color="rgb(255, 190, 0)"/></linearGradient>
<path d="M421.07,108.0 L421.83,113.0 L422.56,118.0 L423.28,123.0 L423.98,128.0 L424.67,133.0 L425.34,138.0 L425.99,143.0 L426.63,148.1 L427.25,153.1 L427.86,158.1 L428.45,163.1 L429.03,168.1 L429.59,173.1 L430.13,178.1 L430.66,183.1 L431.18,188.1 L431.67,193.1 L432.16,198.1 L432.63,203.1 L433.08,208.1 L433.52,213.1 L433.94,218.2 L434.35,223.2 L434.74,228.2 L435.12,233.2 L435.48,238.2 L435.83,243.2 L436.16,248.2 L436.47,253.2 L436.77,258.2 L437.05,263.2 L437.32,268.2 L437.57,273.2 L437.81,278.2 L438.03,283.2 L438.23,288.3 L438.42,293.3 L438.59,298.3 L438.75,303.3 L438.89,308.3 L439.01,313.3 L439.12,318.3 L439.22,323.3 L439.29,328.3 L439.36,333.3 L439.40,338.3 L439.43,343.3 L439.45,348.3 L439.45,353.3 L439.43,358.4 L439.40,363.4 L439.35,368.4 L439.29,373.4 L439.22,378.4 L439.14,383.4 L439.04,388.4 L438.93,393.4 L438.80,398.4 L438.65,403.4 L438.49,408.4 L438.31,413.4 L438.12,418.4 L437.91,423.4 L437.69,428.5 L437.45,433.5 L437.19,438.5 L436.92,443.5 L436.63,448.5 L436.33,453.5 L436.01,458.5 L435.69,463.5 L435.35,468.5 L435.00,473.5 L434.64,478.5 L434.25,483.5 L433.85,488.5 L433.44,493.5 L433.01,498.6 L432.57,503.6 L432.11,508.6 L431.63,513.6 L431.14,518.6 L430.63,523.6 L430.11,528.6 L429.57,533.6 L429.01,538.6 L428.44,543.6 L427.86,548.6 L427.27,553.6 L426.67,558.6 L426.05,563.6 L425.42,568.7 L424.77,573.7 L424.10,578.7 L423.42,583.7 L422.72,588.7 L422.01,593.7 L421.28,598.7 L420.54,603.7 L419.78,608.7 L419.00,613.7 L418.21,618.7 L417.40,623.7 L416.58,628.7 L415.74,633.7 L414.89,638.8 L414.03,643.8 L413.15,648.8 L412.26,653.8 L411.35,658.8 L410.43,663.8 L409.48,668.8 L408.53,673.8 L407.56,678.8 L406.57,683.8 L405.57,688.8 L404.55,693.8 L403.51,698.8 L402.46,703.8 L401.40,708.9 L400.31,713.9 L399.22,718.9 L398.10,723.9 L396.96,728.9 L395.81,733.9 L394.64,738.9 L393.45,743.9 L392.25,748.9 L391.04,753.9 L389.81,758.9 L388.56,763.9 L387.29,768.9 L386.02,773.9 L384.72,779.0 L383.41,784.0 L382.08,789.0 L380.74,794.0 L379.39,799.0 L378.01,804.0 L376.62,809.0 L375.19,814.0 L377.59,814.0 L379.02,809.0 L380.46,804.0 L381.88,799.0 L383.29,794.0 L384.68,789.0 L386.05,784.0 L387.41,779.0 L388.76,773.9 L390.09,768.9 L391.40,763.9 L392.70,758.9 L393.98,753.9 L395.25,748.9 L396.50,743.9 L397.73,738.9 L398.95,733.9 L400.15,728.9 L401.34,723.9 L402.52,718.9 L403.69,713.9 L404.84,708.9 L405.97,703.8 L407.09,698.8 L408.20,693.8 L409.28,688.8 L410.36,683.8 L411.41,678.8 L412.45,673.8 L413.48,668.8 L414.49,663.8 L415.48,658.8 L416.46,653.8 L417.42,648.8 L418.37,643.8 L419.30,638.8 L420.22,633.7 L421.11,628.7 L421.99,623.7 L422.85,618.7 L423.70,613.7 L424.53,608.7 L425.34,603.7 L426.14,598.7 L426.92,593.7 L427.69,588.7 L428.44,583.7 L429.18,578.7 L429.90,573.7 L430.61,568.7 L431.30,563.6 L431.97,558.6 L432.63,553.6 L433.27,548.6 L433.89,543.6 L434.49,538.6 L435.07,533.6 L435.63,528.6 L436.19,523.6 L436.72,518.6 L437.24,513.6 L437.74,508.6 L438.23,503.6 L438.70,498.6 L439.16,493.5 L439.60,488.5 L440.03,483.5 L440.44,478.5 L440.83,473.5 L441.21,468.5 L441.57,463.5 L441.91,458.5 L442.23,453.5 L442.53,448.5 L442.82,443.5 L443.09,438.5 L443.35,433.5 L443.59,428.5 L443.81,423.4 L444.02,418.4 L444.21,413.4 L444.39,408.4 L444.55,403.4 L444.70,398.4 L444.83,393.4 L444.94,388.4 L445.04,383.4 L445.12,378.4 L445.19,373.4 L445.23,368.4 L445.25,363.4 L445.26,358.4 L445.26,353.3 L445.24,348.3 L445.20,343.3 L445.15,338.3 L445.08,333.3 L444.99,328.3 L444.89,323.3 L444.78,318.3 L444.64,313.3 L444.50,308.3 L444.34,303.3 L444.16,298.3 L443.96,293.3 L443.75,288.3 L443.53,283.2 L443.29,278.2 L443.03,273.2 L442.76,268.2 L442.48,263.2 L442.17,258.2 L441.86,253.2 L441.52,248.2 L441.17,243.2 L440.81,238.2 L440.43,233.2 L440.03,228.2 L439.62,223.2 L439.19,218.2 L438.75,213.1 L438.29,208.1 L437.82,203.1 L437.33,198.1 L436.82,193.1 L436.29,188.1 L435.75,183.1 L435.19,178.1 L434.62,173.1 L434.03,168.1 L433.43,163.1 L432.81,158.1 L432.17,153.1 L431.52,148.1 L430.86,143.0 L430.18,138.0 L429.48,133.0 L428.76,128.0 L428.04,123.0 L427.29,118.0 L426.53,113.0 L425.77,108.0Z" fill="url(#ag3)"/>
<path d="M421.77,108.0 L422.53,113.0 L423.26,118.0 L423.97,123.0 L424.67,128.0 L425.35,133.0 L426.01,138.0 L426.66,143.0 L427.30,148.1 L427.92,153.1 L428.52,158.1 L429.11,163.1 L429.68,168.1 L430.23,173.1 L430.77,178.1 L431.30,183.1 L431.81,188.1 L432.30,193.1 L432.78,198.1 L433.24,203.1 L433.70,208.1 L434.13,213.1 L434.55,218.2 L434.96,223.2 L435.35,228.2 L435.72,233.2 L436.08,238.2 L436.42,243.2 L436.75,248.2 L437.06,253.2 L437.35,258.2 L437.63,263.2 L437.90,268.2 L438.14,273.2 L438.38,278.2 L438.59,283.2 L438.79,288.3 L438.98,293.3 L439.15,298.3 L439.30,303.3 L439.44,308.3 L439.56,313.3 L439.66,318.3 L439.75,323.3 L439.83,328.3 L439.89,333.3 L439.93,338.3 L439.96,343.3 L439.97,348.3 L439.96,353.3 L439.94,358.4 L439.91,363.4 L439.86,368.4 L439.79,373.4 L439.72,378.4 L439.64,383.4 L439.54,388.4 L439.43,393.4 L439.30,398.4 L439.15,403.4 L438.99,408.4 L438.81,413.4 L438.62,418.4 L438.41,423.4 L438.19,428.5 L437.95,433.5 L437.69,438.5 L437.42,443.5 L437.13,448.5 L436.83,453.5 L436.51,458.5 L436.19,463.5 L435.86,468.5 L435.51,473.5 L435.15,478.5 L434.77,483.5 L434.38,488.5 L433.97,493.5 L433.55,498.6 L433.11,503.6 L432.65,508.6 L432.18,513.6 L431.69,518.6 L431.19,523.6 L430.67,528.6 L430.14,533.6 L429.59,538.6 L429.02,543.6 L428.44,548.6 L427.86,553.6 L427.27,558.6 L426.66,563.6 L426.03,568.7 L425.39,573.7 L424.74,578.7 L424.06,583.7 L423.38,588.7 L422.67,593.7 L421.95,598.7 L421.22,603.7 L420.47,608.7 L419.70,613.7 L418.92,618.7 L418.12,623.7 L417.31,628.7 L416.48,633.7 L415.64,638.8 L414.79,643.8 L413.93,648.8 L413.04,653.8 L412.15,658.8 L411.23,663.8 L410.30,668.8 L409.36,673.8 L408.40,678.8 L407.42,683.8 L406.43,688.8 L405.42,693.8 L404.40,698.8 L403.36,703.8 L402.31,708.9 L401.24,713.9 L400.15,718.9 L399.04,723.9 L397.91,728.9 L396.77,733.9 L395.61,738.9 L394.43,743.9 L393.24,748.9 L392.03,753.9 L390.81,758.9 L389.57,763.9 L388.31,768.9 L387.04,773.9 L385.75,779.0 L384.45,784.0 L383.14,789.0 L381.80,794.0 L380.45,799.0 L379.09,804.0 L377.71,809.0 L376.28,814.0 L376.51,814.0 L377.94,809.0 L379.38,804.0 L380.81,799.0 L382.23,794.0 L383.63,789.0 L385.01,784.0 L386.38,779.0 L387.73,773.9 L389.07,768.9 L390.39,763.9 L391.70,758.9 L392.99,753.9 L394.26,748.9 L395.52,743.9 L396.76,738.9 L397.99,733.9 L399.20,728.9 L400.40,723.9 L401.59,718.9 L402.77,713.9 L403.93,708.9 L405.07,703.8 L406.20,698.8 L407.32,693.8 L408.42,688.8 L409.50,683.8 L410.57,678.8 L411.62,673.8 L412.66,668.8 L413.68,663.8 L414.69,658.8 L415.68,653.8 L416.65,648.8 L417.61,643.8 L418.55,638.8 L419.48,633.7 L420.38,628.7 L421.27,623.7 L422.14,618.7 L422.99,613.7 L423.83,608.7 L424.66,603.7 L425.47,598.7 L426.26,593.7 L427.04,588.7 L427.80,583.7 L428.55,578.7 L429.28,573.7 L429.99,568.7 L430.69,563.6 L431.37,558.6 L432.04,553.6 L432.69,548.6 L433.31,543.6 L433.91,538.6 L434.50,533.6 L435.07,528.6 L435.63,523.6 L436.17,518.6 L436.69,513.6 L437.20,508.6 L437.69,503.6 L438.17,498.6 L438.63,493.5 L439.08,488.5 L439.51,483.5 L439.92,478.5 L440.32,473.5 L440.70,468.5 L441.07,463.5 L441.41,458.5 L441.73,453.5 L442.03,448.5 L442.32,443.5 L442.59,438.5 L442.85,433.5 L443.09,428.5 L443.31,423.4 L443.52,418.4 L443.71,413.4 L443.89,408.4 L444.05,403.4 L444.20,398.4 L444.33,393.4 L444.44,388.4 L444.54,383.4 L444.62,378.4 L444.69,373.4 L444.73,368.4 L444.75,363.4 L444.75,358.4 L444.74,353.3 L444.72,348.3 L444.68,343.3 L444.62,338.3 L444.55,333.3 L444.46,328.3 L444.35,323.3 L444.24,318.3 L444.10,313.3 L443.95,308.3 L443.78,303.3 L443.60,298.3 L443.40,293.3 L443.19,288.3 L442.96,283.2 L442.72,278.2 L442.46,273.2 L442.19,268.2 L441.90,263.2 L441.59,258.2 L441.27,253.2 L440.93,248.2 L440.58,243.2 L440.21,238.2 L439.83,233.2 L439.43,228.2 L439.02,223.2 L438.59,218.2 L438.14,213.1 L437.68,208.1 L437.20,203.1 L436.70,198.1 L436.19,193.1 L435.66,188.1 L435.11,183.1 L434.55,178.1 L433.98,173.1 L433.38,168.1 L432.77,163.1 L432.15,158.1 L431.51,153.1 L430.86,148.1 L430.19,143.0 L429.50,138.0 L428.80,133.0 L428.08,128.0 L427.35,123.0 L426.60,118.0 L425.83,113.0 L425.07,108.0Z" fill="#fff"/>
<linearGradient id="ag4" gradientUnits="userSpaceOnUse" x1="0" y1="113" x2="0" y2="809"><stop offset="0.000" stop-color="rgb(255, 255, 0)"/><stop offset="0.125" stop-color="rgb(255, 255, 0)"/><stop offset="0.250" stop-color="rgb(255, 255, 0)"/><stop offset="0.375" stop-color="rgb(255, 255, 0)"/><stop offset="0.500" stop-color="rgb(255, 255, 0)"/><stop offset="0.625" stop-color="rgb(255, 255, 0)"/><stop offset="0.750" stop-color="rgb(255, 255, 0)"/><stop offset="0.875" stop-color="rgb(255, 255, 0)"/><stop offset="1.000" stop-color="rgb(255, 200, 0)"/></linearGradient>
<path d="M442.29,108.0 L443.06,113.0 L443.80,118.0 L444.53,123.0 L445.24,128.0 L445.94,133.0 L446.62,138.0 L447.29,143.0 L447.94,148.1 L448.58,153.1 L449.20,158.1 L449.80,163.1 L450.39,168.1 L450.97,173.1 L451.52,178.1 L452.07,183.1 L452.60,188.1 L453.11,193.1 L453.61,198.1 L454.09,203.1 L454.56,208.1 L455.02,213.1 L455.46,218.2 L455.88,223.2 L456.29,228.2 L456.69,233.2 L457.06,238.2 L457.43,243.2 L457.77,248.2 L458.11,253.2 L458.42,258.2 L458.73,263.2 L459.01,268.2 L459.28,273.2 L459.54,278.2 L459.78,283.2 L460.00,288.3 L460.21,293.3 L460.40,298.3 L460.58,303.3 L460.74,308.3 L460.89,313.3 L461.02,318.3 L461.13,323.3 L461.24,328.3 L461.32,333.3 L461.39,338.3 L461.44,343.3 L461.48,348.3 L461.51,353.3 L461.51,358.4 L461.51,363.4 L461.48,368.4 L461.45,373.4 L461.40,378.4 L461.34,383.4 L461.27,388.4 L461.18,393.4 L461.08,398.4 L460.96,403.4 L460.82,408.4 L460.67,413.4 L460.51,418.4 L460.33,423.4 L460.13,428.5 L459.92,433.5 L459.69,438.5 L459.45,443.5 L459.19,448.5 L458.92,453.5 L458.63,458.5 L458.33,463.5 L458.02,468.5 L457.70,473.5 L457.36,478.5 L457.01,483.5 L456.64,488.5 L456.25,493.5 L455.85,498.6 L455.44,503.6 L455.01,508.6 L454.56,513.6 L454.10,518.6 L453.62,523.6 L453.13,528.6 L452.62,533.6 L452.10,538.6 L451.56,543.6 L451.00,548.6 L450.45,553.6 L449.87,558.6 L449.29,563.6 L448.68,568.7 L448.06,573.7 L447.43,578.7 L446.78,583.7 L446.12,588.7 L445.44,593.7 L444.74,598.7 L444.03,603.7 L443.30,608.7 L442.56,613.7 L441.80,618.7 L441.03,623.7 L440.24,628.7 L439.44,633.7 L438.63,638.8 L437.81,643.8 L436.98,648.8 L436.12,653.8 L435.26,658.8 L434.38,663.8 L433.48,668.8 L432.57,673.8 L431.64,678.8 L430.70,683.8 L429.74,688.8 L428.76,693.8 L427.77,698.8 L426.77,703.8 L425.75,708.9 L424.71,713.9 L423.66,718.9 L422.59,723.9 L421.50,728.9 L420.39,733.9 L419.26,738.9 L418.12,743.9 L416.97,748.9 L415.80,753.9 L414.61,758.9 L413.41,763.9 L412.19,768.9 L410.96,773.9 L409.71,779.0 L408.45,784.0 L407.17,789.0 L405.87,794.0 L404.57,799.0 L403.24,804.0 L401.90,809.0 L400.52,814.0 L403.06,814.0 L404.44,809.0 L405.83,804.0 L407.20,799.0 L408.56,794.0 L409.91,789.0 L411.24,784.0 L412.55,779.0 L413.85,773.9 L415.13,768.9 L416.40,763.9 L417.65,758.9 L418.88,753.9 L420.10,748.9 L421.31,743.9 L422.50,738.9 L423.67,733.9 L424.83,728.9 L425.98,723.9 L427.11,718.9 L428.24,713.9 L429.35,708.9 L430.44,703.8 L431.52,698.8 L432.59,693.8 L433.64,688.8 L434.67,683.8 L435.69,678.8 L436.69,673.8 L437.68,668.8 L438.65,663.8 L439.60,658.8 L440.54,653.8 L441.47,648.8 L442.38,643.8 L443.28,638.8 L444.15,633.7 L445.00,628.7 L445.84,623.7 L446.66,618.7 L447.46,613.7 L448.25,608.7 L449.02,603.7 L449.78,598.7 L450.52,593.7 L451.25,588.7 L451.96,583.7 L452.66,578.7 L453.34,573.7 L454.00,568.7 L454.66,563.6 L455.29,558.6 L455.91,553.6 L456.51,548.6 L457.09,543.6 L457.65,538.6 L458.20,533.6 L458.73,528.6 L459.24,523.6 L459.74,518.6 L460.23,513.6 L460.70,508.6 L461.15,503.6 L461.59,498.6 L462.01,493.5 L462.42,488.5 L462.81,483.5 L463.18,478.5 L463.55,473.5 L463.89,468.5 L464.22,463.5 L464.53,458.5 L464.82,453.5 L465.09,448.5 L465.35,443.5 L465.59,438.5 L465.82,433.5 L466.03,428.5 L466.23,423.4 L466.41,418.4 L466.57,413.4 L466.72,408.4 L466.86,403.4 L466.98,398.4 L467.08,393.4 L467.17,388.4 L467.24,383.4 L467.30,378.4 L467.34,373.4 L467.36,368.4 L467.36,363.4 L467.34,358.4 L467.31,353.3 L467.27,348.3 L467.21,343.3 L467.13,338.3 L467.04,333.3 L466.93,328.3 L466.81,323.3 L466.67,318.3 L466.52,313.3 L466.35,308.3 L466.17,303.3 L465.97,298.3 L465.75,293.3 L465.52,288.3 L465.28,283.2 L465.02,278.2 L464.75,273.2 L464.46,268.2 L464.15,263.2 L463.83,258.2 L463.49,253.2 L463.14,248.2 L462.77,243.2 L462.39,238.2 L461.99,233.2 L461.58,228.2 L461.15,223.2 L460.71,218.2 L460.25,213.1 L459.77,208.1 L459.28,203.1 L458.78,198.1 L458.25,193.1 L457.71,188.1 L457.16,183.1 L456.58,178.1 L456.00,173.1 L455.40,168.1 L454.78,163.1 L454.15,158.1 L453.50,153.1 L452.83,148.1 L452.16,143.0 L451.46,138.0 L450.75,133.0 L450.03,128.0 L449.29,123.0 L448.53,118.0 L447.76,113.0 L446.99,108.0Z" fill="url(#ag4)"/>
<path d="M442.99,108.0 L443.76,113.0 L444.50,118.0 L445.22,123.0 L445.93,128.0 L446.62,133.0 L447.30,138.0 L447.96,143.0 L448.61,148.1 L449.24,153.1 L449.86,158.1 L450.46,163.1 L451.04,168.1 L451.61,173.1 L452.16,178.1 L452.70,183.1 L453.23,188.1 L453.74,193.1 L454.23,198.1 L454.71,203.1 L455.18,208.1 L455.63,213.1 L456.07,218.2 L456.49,223.2 L456.89,228.2 L457.28,233.2 L457.66,238.2 L458.02,243.2 L458.36,248.2 L458.69,253.2 L459.01,258.2 L459.30,263.2 L459.59,268.2 L459.86,273.2 L460.11,278.2 L460.34,283.2 L460.57,288.3 L460.77,293.3 L460.96,298.3 L461.13,303.3 L461.29,308.3 L461.43,313.3 L461.56,318.3 L461.67,323.3 L461.77,328.3 L461.85,333.3 L461.92,338.3 L461.97,343.3 L462.00,348.3 L462.02,353.3 L462.03,358.4 L462.01,363.4 L461.99,368.4 L461.95,373.4 L461.90,378.4 L461.84,383.4 L461.77,388.4 L461.68,393.4 L461.58,398.4 L461.46,403.4 L461.32,408.4 L461.17,413.4 L461.01,418.4 L460.83,423.4 L460.63,428.5 L460.42,433.5 L460.19,438.5 L459.95,443.5 L459.69,448.5 L459.42,453.5 L459.13,458.5 L458.83,463.5 L458.53,468.5 L458.21,473.5 L457.88,478.5 L457.52,483.5 L457.16,488.5 L456.78,493.5 L456.38,498.6 L455.97,503.6 L455.54,508.6 L455.10,513.6 L454.64,518.6 L454.17,523.6 L453.68,528.6 L453.17,533.6 L452.65,538.6 L452.12,543.6 L451.57,548.6 L451.02,553.6 L450.45,558.6 L449.87,563.6 L449.28,568.7 L448.67,573.7 L448.04,578.7 L447.40,583.7 L446.74,588.7 L446.07,593.7 L445.38,598.7 L444.68,603.7 L443.96,608.7 L443.23,613.7 L442.48,618.7 L441.71,623.7 L440.93,628.7 L440.14,633.7 L439.34,638.8 L438.53,643.8 L437.71,648.8 L436.87,653.8 L436.02,658.8 L435.15,663.8 L434.26,668.8 L433.36,673.8 L432.45,678.8 L431.52,683.8 L430.57,688.8 L429.61,693.8 L428.63,698.8 L427.64,703.8 L426.63,708.9 L425.61,713.9 L424.57,718.9 L423.51,723.9 L422.42,728.9 L421.32,733.9 L420.21,738.9 L419.08,743.9 L417.93,748.9 L416.77,753.9 L415.59,758.9 L414.39,763.9 L413.18,768.9 L411.96,773.9 L410.72,779.0 L409.47,784.0 L408.20,789.0 L406.91,794.0 L405.61,799.0 L404.29,804.0 L402.96,809.0 L401.58,814.0 L402.00,814.0 L403.38,809.0 L404.78,804.0 L406.16,799.0 L407.53,794.0 L408.88,789.0 L410.22,784.0 L411.54,779.0 L412.84,773.9 L414.14,768.9 L415.41,763.9 L416.67,758.9 L417.91,753.9 L419.14,748.9 L420.36,743.9 L421.56,738.9 L422.74,733.9 L423.91,728.9 L425.06,723.9 L426.20,718.9 L427.34,713.9 L428.47,708.9 L429.57,703.8 L430.66,698.8 L431.74,693.8 L432.80,688.8 L433.85,683.8 L434.88,678.8 L435.89,673.8 L436.89,668.8 L437.88,663.8 L438.84,658.8 L439.80,653.8 L440.74,648.8 L441.66,643.8 L442.57,638.8 L443.45,633.7 L444.31,628.7 L445.15,623.7 L445.98,618.7 L446.79,613.7 L447.59,608.7 L448.37,603.7 L449.14,598.7 L449.89,593.7 L450.62,588.7 L451.34,583.7 L452.05,578.7 L452.73,573.7 L453.41,568.7 L454.07,563.6 L454.71,558.6 L455.34,553.6 L455.95,548.6 L456.53,543.6 L457.10,538.6 L457.64,533.6 L458.18,528.6 L458.70,523.6 L459.20,518.6 L459.69,513.6 L460.16,508.6 L460.62,503.6 L461.06,498.6 L461.49,493.5 L461.90,488.5 L462.29,483.5 L462.67,478.5 L463.04,473.5 L463.39,468.5 L463.72,463.5 L464.03,458.5 L464.32,453.5 L464.59,448.5 L464.85,443.5 L465.09,438.5 L465.32,433.5 L465.53,428.5 L465.73,423.4 L465.91,418.4 L466.07,413.4 L466.22,408.4 L466.36,403.4 L466.48,398.4 L466.58,393.4 L466.67,388.4 L466.74,383.4 L466.80,378.4 L466.84,373.4 L466.85,368.4 L466.85,363.4 L466.83,358.4 L466.80,353.3 L466.75,348.3 L466.69,343.3 L466.61,338.3 L466.51,333.3 L466.40,328.3 L466.27,323.3 L466.13,318.3 L465.98,313.3 L465.80,308.3 L465.62,303.3 L465.41,298.3 L465.19,293.3 L464.96,288.3 L464.71,283.2 L464.45,278.2 L464.17,273.2 L463.88,268.2 L463.57,263.2 L463.25,258.2 L462.91,253.2 L462.55,248.2 L462.18,243.2 L461.80,238.2 L461.39,233.2 L460.98,228.2 L460.55,223.2 L460.10,218.2 L459.64,213.1 L459.16,208.1 L458.67,203.1 L458.15,198.1 L457.62,193.1 L457.08,188.1 L456.52,183.1 L455.94,178.1 L455.35,173.1 L454.75,168.1 L454.12,163.1 L453.49,158.1 L452.83,153.1 L452.17,148.1 L451.48,143.0 L450.78,138.0 L450.07,133.0 L449.34,128.0 L448.60,123.0 L447.84,118.0 L447.06,113.0 L446.29,108.0Z" fill="#fff"/>
<linearGradient id="ag5" gradientUnits="userSpaceOnUse" x1="0" y1="113" x2="0" y2="809"><stop offset="0.000" stop-color="rgb(255, 255, 0)"/><stop offset="0.125" stop-color="rgb(255, 255, 0)"/><stop offset="0.250" stop-color="rgb(255, 255, 0)"/><stop offset="0.375" stop-color="rgb(255, 255, 0)"/><stop offset="0.500" stop-color="rgb(255, 255, 0)"/><stop offset="0.625" stop-color="rgb(255, 255, 0)"/><stop offset="0.750" stop-color="rgb(255, 255, 0)"/><stop offset="0.875" stop-color="rgb(255, 255, 0)"/><stop offset="1.000" stop-color="rgb(255, 200, 0)"/></linearGradient>
<path d="M462.24,108.0 L463.03,113.0 L463.78,118.0 L464.52,123.0 L465.24,128.0 L465.95,133.0 L466.64,138.0 L467.32,143.0 L467.98,148.1 L468.63,153.1 L469.26,158.1 L469.88,163.1 L470.48,168.1 L471.06,173.1 L471.64,178.1 L472.19,183.1 L472.74,188.1 L473.26,193.1 L473.77,198.1 L474.27,203.1 L474.76,208.1 L475.23,213.1 L475.69,218.2 L476.13,223.2 L476.55,228.2 L476.96,233.2 L477.36,238.2 L477.74,243.2 L478.10,248.2 L478.45,253.2 L478.79,258.2 L479.11,263.2 L479.41,268.2 L479.70,273.2 L479.98,278.2 L480.24,283.2 L480.48,288.3 L480.71,293.3 L480.93,298.3 L481.12,303.3 L481.31,308.3 L481.48,313.3 L481.63,318.3 L481.77,323.3 L481.89,328.3 L482.00,333.3 L482.09,338.3 L482.17,343.3 L482.23,348.3 L482.28,353.3 L482.31,358.4 L482.33,363.4 L482.33,368.4 L482.32,373.4 L482.30,378.4 L482.27,383.4 L482.22,388.4 L482.16,393.4 L482.09,398.4 L481.99,403.4 L481.89,408.4 L481.77,413.4 L481.63,418.4 L481.48,423.4 L481.31,428.5 L481.13,433.5 L480.93,438.5 L480.72,443.5 L480.49,448.5 L480.25,453.5 L479.99,458.5 L479.72,463.5 L479.45,468.5 L479.15,473.5 L478.85,478.5 L478.53,483.5 L478.19,488.5 L477.84,493.5 L477.47,498.6 L477.09,503.6 L476.69,508.6 L476.28,513.6 L475.85,518.6 L475.41,523.6 L474.95,528.6 L474.48,533.6 L473.99,538.6 L473.49,543.6 L472.98,548.6 L472.45,553.6 L471.91,558.6 L471.36,563.6 L470.79,568.7 L470.20,573.7 L469.60,578.7 L468.99,583.7 L468.36,588.7 L467.71,593.7 L467.06,598.7 L466.38,603.7 L465.69,608.7 L464.99,613.7 L464.27,618.7 L463.53,623.7 L462.78,628.7 L462.02,633.7 L461.25,638.8 L460.47,643.8 L459.68,648.8 L458.88,653.8 L458.06,658.8 L457.22,663.8 L456.37,668.8 L455.50,673.8 L454.62,678.8 L453.72,683.8 L452.81,688.8 L451.89,693.8 L450.94,698.8 L449.99,703.8 L449.02,708.9 L448.03,713.9 L447.03,718.9 L446.01,723.9 L444.96,728.9 L443.90,733.9 L442.83,738.9 L441.74,743.9 L440.64,748.9 L439.52,753.9 L438.39,758.9 L437.24,763.9 L436.08,768.9 L434.90,773.9 L433.70,779.0 L432.50,784.0 L431.27,789.0 L430.03,794.0 L428.78,799.0 L427.51,804.0 L426.23,809.0 L424.90,814.0 L427.44,814.0 L428.77,809.0 L430.11,804.0 L431.43,799.0 L432.74,794.0 L434.03,789.0 L435.31,784.0 L436.58,779.0 L437.82,773.9 L439.06,768.9 L440.28,763.9 L441.48,758.9 L442.67,753.9 L443.84,748.9 L445.00,743.9 L446.14,738.9 L447.27,733.9 L448.39,728.9 L449.48,723.9 L450.58,718.9 L451.65,713.9 L452.72,708.9 L453.77,703.8 L454.80,698.8 L455.82,693.8 L456.82,688.8 L457.81,683.8 L458.79,678.8 L459.75,673.8 L460.69,668.8 L461.62,663.8 L462.53,658.8 L463.43,653.8 L464.31,648.8 L465.18,643.8 L466.04,638.8 L466.87,633.7 L467.67,628.7 L468.46,623.7 L469.24,618.7 L469.99,613.7 L470.74,608.7 L471.47,603.7 L472.18,598.7 L472.88,593.7 L473.56,588.7 L474.23,583.7 L474.88,578.7 L475.52,573.7 L476.14,568.7 L476.75,563.6 L477.35,558.6 L477.92,553.6 L478.49,548.6 L479.03,543.6 L479.55,538.6 L480.06,533.6 L480.56,528.6 L481.03,523.6 L481.50,518.6 L481.95,513.6 L482.38,508.6 L482.80,503.6 L483.21,498.6 L483.59,493.5 L483.97,488.5 L484.33,483.5 L484.67,478.5 L485.00,473.5 L485.31,468.5 L485.61,463.5 L485.89,458.5 L486.15,453.5 L486.39,448.5 L486.62,443.5 L486.83,438.5 L487.03,433.5 L487.21,428.5 L487.38,423.4 L487.53,418.4 L487.67,413.4 L487.79,408.4 L487.89,403.4 L487.99,398.4 L488.06,393.4 L488.12,388.4 L488.17,383.4 L488.20,378.4 L488.22,373.4 L488.21,368.4 L488.18,363.4 L488.14,358.4 L488.09,353.3 L488.02,348.3 L487.93,343.3 L487.83,338.3 L487.72,333.3 L487.59,328.3 L487.44,323.3 L487.28,318.3 L487.11,313.3 L486.92,308.3 L486.71,303.3 L486.49,298.3 L486.26,293.3 L486.01,288.3 L485.74,283.2 L485.46,278.2 L485.17,273.2 L484.86,268.2 L484.53,263.2 L484.19,258.2 L483.84,253.2 L483.47,248.2 L483.09,243.2 L482.69,238.2 L482.27,233.2 L481.84,228.2 L481.40,223.2 L480.94,218.2 L480.46,213.1 L479.97,208.1 L479.47,203.1 L478.94,198.1 L478.40,193.1 L477.85,188.1 L477.28,183.1 L476.70,178.1 L476.10,173.1 L475.48,168.1 L474.85,163.1 L474.21,158.1 L473.55,153.1 L472.87,148.1 L472.18,143.0 L471.48,138.0 L470.76,133.0 L470.02,128.0 L469.27,123.0 L468.51,118.0 L467.73,113.0 L466.94,108.0Z" fill="url(#ag5)"/>
<path d="M462.94,108.0 L463.73,113.0 L464.47,118.0 L465.21,123.0 L465.92,128.0 L466.63,133.0 L467.32,138.0 L467.99,143.0 L468.65,148.1 L469.29,153.1 L469.92,158.1 L470.53,163.1 L471.13,168.1 L471.71,173.1 L472.28,178.1 L472.83,183.1 L473.37,188.1 L473.89,193.1 L474.40,198.1 L474.89,203.1 L475.37,208.1 L475.84,213.1 L476.29,218.2 L476.73,223.2 L477.15,228.2 L477.56,233.2 L477.95,238.2 L478.33,243.2 L478.69,248.2 L479.04,253.2 L479.37,258.2 L479.69,263.2 L479.99,268.2 L480.28,273.2 L480.55,278.2 L480.81,283.2 L481.05,288.3 L481.27,293.3 L481.48,298.3 L481.68,303.3 L481.86,308.3 L482.02,313.3 L482.17,318.3 L482.30,323.3 L482.42,328.3 L482.53,333.3 L482.62,338.3 L482.69,343.3 L482.75,348.3 L482.79,353.3 L482.82,358.4 L482.84,363.4 L482.84,368.4 L482.82,373.4 L482.80,378.4 L482.77,383.4 L482.72,388.4 L482.66,393.4 L482.59,398.4 L482.49,403.4 L482.39,408.4 L482.27,413.4 L482.13,418.4 L481.98,423.4 L481.81,428.5 L481.63,433.5 L481.43,438.5 L481.22,443.5 L480.99,448.5 L480.75,453.5 L480.49,458.5 L480.22,463.5 L479.95,468.5 L479.66,473.5 L479.36,478.5 L479.04,483.5 L478.71,488.5 L478.36,493.5 L478.00,498.6 L477.62,503.6 L477.23,508.6 L476.82,513.6 L476.40,518.6 L475.96,523.6 L475.50,528.6 L475.03,533.6 L474.55,538.6 L474.05,543.6 L473.54,548.6 L473.02,553.6 L472.49,558.6 L471.94,563.6 L471.38,568.7 L470.80,573.7 L470.21,578.7 L469.60,583.7 L468.98,588.7 L468.34,593.7 L467.68,598.7 L467.02,603.7 L466.33,608.7 L465.63,613.7 L464.92,618.7 L464.19,623.7 L463.45,628.7 L462.69,633.7 L461.93,638.8 L461.17,643.8 L460.39,648.8 L459.60,653.8 L458.79,658.8 L457.97,663.8 L457.13,668.8 L456.28,673.8 L455.41,678.8 L454.53,683.8 L453.63,688.8 L452.71,693.8 L451.78,698.8 L450.84,703.8 L449.88,708.9 L448.91,713.9 L447.92,718.9 L446.91,723.9 L445.88,728.9 L444.83,733.9 L443.76,738.9 L442.68,743.9 L441.59,748.9 L440.48,753.9 L439.36,758.9 L438.22,763.9 L437.06,768.9 L435.89,773.9 L434.71,779.0 L433.51,784.0 L432.29,789.0 L431.07,794.0 L429.82,799.0 L428.56,804.0 L427.29,809.0 L425.96,814.0 L426.38,814.0 L427.71,809.0 L429.05,804.0 L430.39,799.0 L431.71,794.0 L433.01,789.0 L434.30,784.0 L435.57,779.0 L436.83,773.9 L438.07,768.9 L439.30,763.9 L440.51,758.9 L441.71,753.9 L442.89,748.9 L444.06,743.9 L445.21,738.9 L446.35,733.9 L447.47,728.9 L448.58,723.9 L449.68,718.9 L450.78,713.9 L451.85,708.9 L452.91,703.8 L453.96,698.8 L454.99,693.8 L456.01,688.8 L457.01,683.8 L458.00,678.8 L458.97,673.8 L459.93,668.8 L460.87,663.8 L461.79,658.8 L462.71,653.8 L463.60,648.8 L464.48,643.8 L465.35,638.8 L466.19,633.7 L467.00,628.7 L467.80,623.7 L468.58,618.7 L469.35,613.7 L470.10,608.7 L470.83,603.7 L471.55,598.7 L472.26,593.7 L472.95,588.7 L473.62,583.7 L474.28,578.7 L474.92,573.7 L475.55,568.7 L476.17,563.6 L476.77,558.6 L477.35,553.6 L477.92,548.6 L478.47,543.6 L478.99,538.6 L479.51,533.6 L480.01,528.6 L480.49,523.6 L480.96,518.6 L481.41,513.6 L481.85,508.6 L482.27,503.6 L482.68,498.6 L483.07,493.5 L483.45,488.5 L483.81,483.5 L484.16,478.5 L484.49,473.5 L484.81,468.5 L485.11,463.5 L485.39,458.5 L485.65,453.5 L485.89,448.5 L486.12,443.5 L486.33,438.5 L486.53,433.5 L486.71,428.5 L486.88,423.4 L487.03,418.4 L487.17,413.4 L487.29,408.4 L487.39,403.4 L487.49,398.4 L487.56,393.4 L487.62,388.4 L487.67,383.4 L487.70,378.4 L487.72,373.4 L487.70,368.4 L487.68,363.4 L487.63,358.4 L487.57,353.3 L487.50,348.3 L487.41,343.3 L487.31,338.3 L487.19,333.3 L487.06,328.3 L486.91,323.3 L486.74,318.3 L486.56,313.3 L486.37,308.3 L486.16,303.3 L485.94,298.3 L485.70,293.3 L485.44,288.3 L485.18,283.2 L484.89,278.2 L484.59,273.2 L484.28,268.2 L483.95,263.2 L483.61,258.2 L483.25,253.2 L482.88,248.2 L482.49,243.2 L482.09,238.2 L481.67,233.2 L481.24,228.2 L480.79,223.2 L480.33,218.2 L479.85,213.1 L479.36,208.1 L478.85,203.1 L478.32,198.1 L477.78,193.1 L477.22,188.1 L476.64,183.1 L476.06,178.1 L475.45,173.1 L474.83,168.1 L474.20,163.1 L473.55,158.1 L472.88,153.1 L472.20,148.1 L471.51,143.0 L470.80,138.0 L470.08,133.0 L469.34,128.0 L468.58,123.0 L467.81,118.0 L467.03,113.0 L466.24,108.0Z" fill="#fff"/>
<linearGradient id="ag6" gradientUnits="userSpaceOnUse" x1="0" y1="113" x2="0" y2="809"><stop offset="0.000" stop-color="rgb(255, 255, 0)"/><stop offset="0.125" stop-color="rgb(255, 255, 0)"/><stop offset="0.250" stop-color="rgb(255, 255, 0)"/><stop offset="0.375" stop-color="rgb(255, 255, 0)"/><stop offset="0.500" stop-color="rgb(255, 255, 0)"/><stop offset="0.625" stop-color="rgb(255, 255, 0)"/><stop offset="0.750" stop-color="rgb(255, 255, 0)"/><stop offset="0.875" stop-color="rgb(255, 255, 0)"/><stop offset="1.000" stop-color="rgb(255, 207, 0)"/></linearGradient>
<path d="M481.46,108.0 L482.25,113.0 L483.00,118.0 L483.74,123.0 L484.47,128.0 L485.18,133.0 L485.88,138.0 L486.57,143.0 L487.23,148.1 L487.89,153.1 L488.53,158.1 L489.15,163.1 L489.76,168.1 L490.36,173.1 L490.94,178.1 L491.51,183.1 L492.06,188.1 L492.60,193.1 L493.12,198.1 L493.63,203.1 L494.13,208.1 L494.61,213.1 L495.08,218.2 L495.53,223.2 L495.97,228.2 L496.39,233.2 L496.80,238.2 L497.20,243.2 L497.58,248.2 L497.94,253.2 L498.29,258.2 L498.63,263.2 L498.95,268.2 L499.26,273.2 L499.55,278.2 L499.83,283.2 L500.09,288.3 L500.34,293.3 L500.57,298.3 L500.79,303.3 L500.99,308.3 L501.18,313.3 L501.35,318.3 L501.51,323.3 L501.65,328.3 L501.78,333.3 L501.90,338.3 L502.00,343.3 L502.09,348.3 L502.16,353.3 L502.21,358.4 L502.25,363.4 L502.28,368.4 L502.29,373.4 L502.30,378.4 L502.30,383.4 L502.28,388.4 L502.24,393.4 L502.19,398.4 L502.13,403.4 L502.05,408.4 L501.95,413.4 L501.85,418.4 L501.72,423.4 L501.59,428.5 L501.43,433.5 L501.27,438.5 L501.09,443.5 L500.89,448.5 L500.68,453.5 L500.45,458.5 L500.22,463.5 L499.97,468.5 L499.71,473.5 L499.43,478.5 L499.14,483.5 L498.83,488.5 L498.51,493.5 L498.18,498.6 L497.83,503.6 L497.46,508.6 L497.08,513.6 L496.69,518.6 L496.28,523.6 L495.85,528.6 L495.42,533.6 L494.96,538.6 L494.50,543.6 L494.02,548.6 L493.53,553.6 L493.04,558.6 L492.52,563.6 L492.00,568.7 L491.45,573.7 L490.90,578.7 L490.33,583.7 L489.74,588.7 L489.14,593.7 L488.53,598.7 L487.90,603.7 L487.25,608.7 L486.60,613.7 L485.92,618.7 L485.23,623.7 L484.53,628.7 L483.81,633.7 L483.10,638.8 L482.37,643.8 L481.62,648.8 L480.87,653.8 L480.09,658.8 L479.31,663.8 L478.51,668.8 L477.69,673.8 L476.86,678.8 L476.01,683.8 L475.15,688.8 L474.28,693.8 L473.39,698.8 L472.48,703.8 L471.56,708.9 L470.63,713.9 L469.68,718.9 L468.72,723.9 L467.73,728.9 L466.72,733.9 L465.71,738.9 L464.67,743.9 L463.63,748.9 L462.56,753.9 L461.49,758.9 L460.40,763.9 L459.29,768.9 L458.17,773.9 L457.04,779.0 L455.89,784.0 L454.72,789.0 L453.54,794.0 L452.35,799.0 L451.14,804.0 L449.92,809.0 L448.65,814.0 L451.29,814.0 L452.55,809.0 L453.83,804.0 L455.10,799.0 L456.34,794.0 L457.58,789.0 L458.80,784.0 L460.00,779.0 L461.19,773.9 L462.37,768.9 L463.53,763.9 L464.68,758.9 L465.81,753.9 L466.93,748.9 L468.03,743.9 L469.12,738.9 L470.19,733.9 L471.25,728.9 L472.29,723.9 L473.33,718.9 L474.35,713.9 L475.36,708.9 L476.36,703.8 L477.34,698.8 L478.31,693.8 L479.26,688.8 L480.20,683.8 L481.12,678.8 L482.03,673.8 L482.92,668.8 L483.80,663.8 L484.67,658.8 L485.52,653.8 L486.35,648.8 L487.17,643.8 L487.98,638.8 L488.77,633.7 L489.52,628.7 L490.27,623.7 L491.00,618.7 L491.71,613.7 L492.41,608.7 L493.10,603.7 L493.77,598.7 L494.42,593.7 L495.07,588.7 L495.69,583.7 L496.31,578.7 L496.90,573.7 L497.49,568.7 L498.05,563.6 L498.61,558.6 L499.15,553.6 L499.67,548.6 L500.17,543.6 L500.65,538.6 L501.12,533.6 L501.57,528.6 L502.01,523.6 L502.43,518.6 L502.84,513.6 L503.23,508.6 L503.61,503.6 L503.97,498.6 L504.32,493.5 L504.66,488.5 L504.98,483.5 L505.28,478.5 L505.57,473.5 L505.85,468.5 L506.11,463.5 L506.35,458.5 L506.58,453.5 L506.79,448.5 L506.99,443.5 L507.17,438.5 L507.33,433.5 L507.49,428.5 L507.62,423.4 L507.75,418.4 L507.85,413.4 L507.95,408.4 L508.03,403.4 L508.09,398.4 L508.14,393.4 L508.18,388.4 L508.20,383.4 L508.20,378.4 L508.19,373.4 L508.16,368.4 L508.11,363.4 L508.04,358.4 L507.97,353.3 L507.87,348.3 L507.76,343.3 L507.64,338.3 L507.50,333.3 L507.35,328.3 L507.19,323.3 L507.00,318.3 L506.81,313.3 L506.60,308.3 L506.37,303.3 L506.13,298.3 L505.88,293.3 L505.61,288.3 L505.33,283.2 L505.03,278.2 L504.72,273.2 L504.39,268.2 L504.05,263.2 L503.70,258.2 L503.33,253.2 L502.94,248.2 L502.54,243.2 L502.13,238.2 L501.70,233.2 L501.26,228.2 L500.80,223.2 L500.33,218.2 L499.84,213.1 L499.34,208.1 L498.82,203.1 L498.29,198.1 L497.74,193.1 L497.17,188.1 L496.59,183.1 L496.00,178.1 L495.39,173.1 L494.77,168.1 L494.13,163.1 L493.48,158.1 L492.81,153.1 L492.13,148.1 L491.43,143.0 L490.72,138.0 L489.99,133.0 L489.25,128.0 L488.50,123.0 L487.73,118.0 L486.95,113.0 L486.16,108.0Z" fill="url(#ag6)"/>
<path d="M482.16,108.0 L482.95,113.0 L483.70,118.0 L484.43,123.0 L485.16,128.0 L485.87,133.0 L486.56,138.0 L487.24,143.0 L487.90,148.1 L488.55,153.1 L489.19,158.1 L489.81,163.1 L490.41,168.1 L491.00,173.1 L491.58,178.1 L492.14,183.1 L492.69,188.1 L493.22,193.1 L493.74,198.1 L494.25,203.1 L494.74,208.1 L495.22,213.1 L495.68,218.2 L496.13,223.2 L496.57,228.2 L496.99,233.2 L497.40,238.2 L497.79,243.2 L498.16,248.2 L498.53,253.2 L498.87,258.2 L499.21,263.2 L499.53,268.2 L499.83,273.2 L500.12,278.2 L500.39,283.2 L500.65,288.3 L500.90,293.3 L501.12,298.3 L501.34,303.3 L501.54,308.3 L501.72,313.3 L501.89,318.3 L502.05,323.3 L502.19,328.3 L502.31,333.3 L502.43,338.3 L502.52,343.3 L502.60,348.3 L502.67,353.3 L502.72,358.4 L502.76,363.4 L502.79,368.4 L502.79,373.4 L502.80,378.4 L502.80,383.4 L502.78,388.4 L502.74,393.4 L502.69,398.4 L502.63,403.4 L502.55,408.4 L502.45,413.4 L502.35,418.4 L502.22,423.4 L502.09,428.5 L501.93,433.5 L501.77,438.5 L501.59,443.5 L501.39,448.5 L501.18,453.5 L500.95,458.5 L500.72,463.5 L500.47,468.5 L500.21,473.5 L499.94,478.5 L499.65,483.5 L499.34,488.5 L499.03,493.5 L498.69,498.6 L498.34,503.6 L497.98,508.6 L497.61,513.6 L497.21,518.6 L496.81,523.6 L496.39,528.6 L495.95,533.6 L495.50,538.6 L495.03,543.6 L494.56,548.6 L494.08,553.6 L493.59,558.6 L493.08,563.6 L492.56,568.7 L492.03,573.7 L491.48,578.7 L490.92,583.7 L490.34,588.7 L489.75,593.7 L489.14,598.7 L488.52,603.7 L487.88,608.7 L487.23,613.7 L486.56,618.7 L485.88,623.7 L485.18,628.7 L484.47,633.7 L483.77,638.8 L483.05,643.8 L482.32,648.8 L481.58,653.8 L480.82,658.8 L480.04,663.8 L479.25,668.8 L478.45,673.8 L477.63,678.8 L476.80,683.8 L475.95,688.8 L475.09,693.8 L474.21,698.8 L473.32,703.8 L472.41,708.9 L471.49,713.9 L470.56,718.9 L469.60,723.9 L468.62,728.9 L467.63,733.9 L466.62,738.9 L465.60,743.9 L464.56,748.9 L463.51,753.9 L462.44,758.9 L461.36,763.9 L460.26,768.9 L459.15,773.9 L458.02,779.0 L456.88,784.0 L455.73,789.0 L454.56,794.0 L453.37,799.0 L452.18,804.0 L450.96,809.0 L449.70,814.0 L450.24,814.0 L451.51,809.0 L452.80,804.0 L454.07,799.0 L455.33,794.0 L456.57,789.0 L457.80,784.0 L459.01,779.0 L460.21,773.9 L461.40,768.9 L462.57,763.9 L463.72,758.9 L464.87,753.9 L465.99,748.9 L467.10,743.9 L468.20,738.9 L469.28,733.9 L470.35,728.9 L471.40,723.9 L472.45,718.9 L473.49,713.9 L474.51,708.9 L475.52,703.8 L476.52,698.8 L477.50,693.8 L478.46,688.8 L479.41,683.8 L480.35,678.8 L481.27,673.8 L482.18,668.8 L483.07,663.8 L483.95,658.8 L484.81,653.8 L485.66,648.8 L486.49,643.8 L487.31,638.8 L488.11,633.7 L488.87,628.7 L489.62,623.7 L490.36,618.7 L491.08,613.7 L491.79,608.7 L492.48,603.7 L493.16,598.7 L493.82,593.7 L494.47,588.7 L495.10,583.7 L495.72,578.7 L496.33,573.7 L496.92,568.7 L497.49,563.6 L498.05,558.6 L498.60,553.6 L499.13,548.6 L499.63,543.6 L500.11,538.6 L500.58,533.6 L501.04,528.6 L501.48,523.6 L501.90,518.6 L502.31,513.6 L502.71,508.6 L503.09,503.6 L503.45,498.6 L503.81,493.5 L504.14,488.5 L504.47,483.5 L504.77,478.5 L505.07,473.5 L505.35,468.5 L505.61,463.5 L505.85,458.5 L506.08,453.5 L506.29,448.5 L506.49,443.5 L506.67,438.5 L506.83,433.5 L506.99,428.5 L507.12,423.4 L507.25,418.4 L507.35,413.4 L507.45,408.4 L507.53,403.4 L507.59,398.4 L507.64,393.4 L507.68,388.4 L507.70,383.4 L507.70,378.4 L507.69,373.4 L507.65,368.4 L507.60,363.4 L507.53,358.4 L507.45,353.3 L507.35,348.3 L507.24,343.3 L507.12,338.3 L506.97,333.3 L506.82,328.3 L506.65,323.3 L506.46,318.3 L506.26,313.3 L506.05,308.3 L505.82,303.3 L505.58,298.3 L505.32,293.3 L505.05,288.3 L504.76,283.2 L504.46,278.2 L504.15,273.2 L503.82,268.2 L503.47,263.2 L503.11,258.2 L502.74,253.2 L502.35,248.2 L501.95,243.2 L501.53,238.2 L501.10,233.2 L500.65,228.2 L500.19,223.2 L499.72,218.2 L499.23,213.1 L498.72,208.1 L498.20,203.1 L497.67,198.1 L497.11,193.1 L496.54,188.1 L495.96,183.1 L495.36,178.1 L494.75,173.1 L494.12,168.1 L493.48,163.1 L492.82,158.1 L492.15,153.1 L491.46,148.1 L490.76,143.0 L490.04,138.0 L489.31,133.0 L488.57,128.0 L487.81,123.0 L487.03,118.0 L486.25,113.0 L485.46,108.0Z" fill="#fff"/>
<linearGradient id="ag7" gradientUnits="userSpaceOnUse" x1="0" y1="113" x2="0" y2="809"><stop offset="0.000" stop-color="rgb(255, 255, 0)"/><stop offset="0.125" stop-color="rgb(255, 255, 0)"/><stop offset="0.250" stop-color="rgb(255, 255, 0)"/><stop offset="0.375" stop-color="rgb(255, 255, 0)"/><stop offset="0.500" stop-color="rgb(255, 255, 0)"/><stop offset="0.625" stop-color="rgb(255, 255, 0)"/><stop offset="0.750" stop-color="rgb(255, 255, 0)"/><stop offset="0.875" stop-color="rgb(255, 255, 0)"/><stop offset="1.000" stop-color="rgb(255, 214, 0)"/></linearGradient>
<path d="M498.24,108.0 L499.07,113.0 L499.87,118.0 L500.65,123.0 L501.42,128.0 L502.17,133.0 L502.91,138.0 L503.64,143.0 L504.35,148.1 L505.04,153.1 L505.72,158.1 L506.39,163.1 L507.04,168.1 L507.67,173.1 L508.29,178.1 L508.90,183.1 L509.49,188.1 L510.07,193.1 L510.63,198.1 L511.18,203.1 L511.71,208.1 L512.24,213.1 L512.74,218.2 L513.23,223.2 L513.71,228.2 L514.17,233.2 L514.62,238.2 L515.06,243.2 L515.47,248.2 L515.88,253.2 L516.27,258.2 L516.64,263.2 L517.00,268.2 L517.34,273.2 L517.67,278.2 L517.99,283.2 L518.29,288.3 L518.57,293.3 L518.84,298.3 L519.09,303.3 L519.33,308.3 L519.56,313.3 L519.77,318.3 L519.96,323.3 L520.14,328.3 L520.31,333.3 L520.46,338.3 L520.60,343.3 L520.72,348.3 L520.82,353.3 L520.92,358.4 L520.99,363.4 L521.06,368.4 L521.10,373.4 L521.14,378.4 L521.17,383.4 L521.19,388.4 L521.19,393.4 L521.17,398.4 L521.14,403.4 L521.10,408.4 L521.04,413.4 L520.96,418.4 L520.87,423.4 L520.77,428.5 L520.65,433.5 L520.52,438.5 L520.37,443.5 L520.21,448.5 L520.03,453.5 L519.83,458.5 L519.63,463.5 L519.42,468.5 L519.19,473.5 L518.94,478.5 L518.68,483.5 L518.41,488.5 L518.12,493.5 L517.81,498.6 L517.49,503.6 L517.16,508.6 L516.81,513.6 L516.45,518.6 L516.07,523.6 L515.68,528.6 L515.27,533.6 L514.85,538.6 L514.41,543.6 L513.96,548.6 L513.51,553.6 L513.04,558.6 L512.56,563.6 L512.06,568.7 L511.55,573.7 L511.02,578.7 L510.48,583.7 L509.93,588.7 L509.36,593.7 L508.77,598.7 L508.17,603.7 L507.55,608.7 L506.92,613.7 L506.28,618.7 L505.62,623.7 L504.95,628.7 L504.26,633.7 L503.56,638.8 L502.86,643.8 L502.14,648.8 L501.41,653.8 L500.66,658.8 L499.90,663.8 L499.12,668.8 L498.33,673.8 L497.52,678.8 L496.70,683.8 L495.86,688.8 L495.01,693.8 L494.15,698.8 L493.27,703.8 L492.37,708.9 L491.46,713.9 L490.54,718.9 L489.59,723.9 L488.63,728.9 L487.65,733.9 L486.66,738.9 L485.65,743.9 L484.63,748.9 L483.59,753.9 L482.54,758.9 L481.48,763.9 L480.39,768.9 L479.30,773.9 L478.19,779.0 L477.06,784.0 L475.92,789.0 L474.77,794.0 L473.60,799.0 L472.41,804.0 L471.21,809.0 L469.97,814.0 L472.70,814.0 L473.94,809.0 L475.20,804.0 L476.44,799.0 L477.66,794.0 L478.87,789.0 L480.07,784.0 L481.25,779.0 L482.42,773.9 L483.57,768.9 L484.70,763.9 L485.83,758.9 L486.93,753.9 L488.02,748.9 L489.10,743.9 L490.16,738.9 L491.21,733.9 L492.25,728.9 L493.26,723.9 L494.27,718.9 L495.27,713.9 L496.25,708.9 L497.22,703.8 L498.17,698.8 L499.11,693.8 L500.03,688.8 L500.94,683.8 L501.83,678.8 L502.71,673.8 L503.58,668.8 L504.43,663.8 L505.26,658.8 L506.08,653.8 L506.88,648.8 L507.67,643.8 L508.45,638.8 L509.21,633.7 L509.94,628.7 L510.65,623.7 L511.35,618.7 L512.04,613.7 L512.71,608.7 L513.37,603.7 L514.01,598.7 L514.64,593.7 L515.25,588.7 L515.85,583.7 L516.43,578.7 L517.00,573.7 L517.55,568.7 L518.09,563.6 L518.61,558.6 L519.12,553.6 L519.62,548.6 L520.08,543.6 L520.54,538.6 L520.97,533.6 L521.39,528.6 L521.80,523.6 L522.19,518.6 L522.57,513.6 L522.93,508.6 L523.28,503.6 L523.61,498.6 L523.93,493.5 L524.23,488.5 L524.52,483.5 L524.79,478.5 L525.05,473.5 L525.29,468.5 L525.52,463.5 L525.73,458.5 L525.93,453.5 L526.11,448.5 L526.27,443.5 L526.42,438.5 L526.55,433.5 L526.67,428.5 L526.77,423.4 L526.86,418.4 L526.94,413.4 L527.00,408.4 L527.04,403.4 L527.07,398.4 L527.09,393.4 L527.09,388.4 L527.07,383.4 L527.04,378.4 L527.00,373.4 L526.93,368.4 L526.85,363.4 L526.75,358.4 L526.63,353.3 L526.50,348.3 L526.36,343.3 L526.20,338.3 L526.03,333.3 L525.84,328.3 L525.64,323.3 L525.42,318.3 L525.19,313.3 L524.94,308.3 L524.68,303.3 L524.41,298.3 L524.11,293.3 L523.81,288.3 L523.49,283.2 L523.15,278.2 L522.81,273.2 L522.44,268.2 L522.06,263.2 L521.67,258.2 L521.26,253.2 L520.84,248.2 L520.40,243.2 L519.95,238.2 L519.48,233.2 L519.00,228.2 L518.50,223.2 L517.99,218.2 L517.47,213.1 L516.93,208.1 L516.37,203.1 L515.80,198.1 L515.21,193.1 L514.60,188.1 L513.99,183.1 L513.35,178.1 L512.70,173.1 L512.04,168.1 L511.36,163.1 L510.67,158.1 L509.96,153.1 L509.24,148.1 L508.50,143.0 L507.75,138.0 L506.98,133.0 L506.20,128.0 L505.41,123.0 L504.59,118.0 L503.77,113.0 L502.94,108.0Z" fill="url(#ag7)"/>
<path d="M498.94,108.0 L499.77,113.0 L500.56,118.0 L501.34,123.0 L502.10,128.0 L502.85,133.0 L503.59,138.0 L504.31,143.0 L505.01,148.1 L505.70,153.1 L506.38,158.1 L507.04,163.1 L507.69,168.1 L508.32,173.1 L508.93,178.1 L509.53,183.1 L510.12,188.1 L510.69,193.1 L511.25,198.1 L511.80,203.1 L512.33,208.1 L512.85,213.1 L513.35,218.2 L513.84,223.2 L514.31,228.2 L514.77,233.2 L515.22,238.2 L515.65,243.2 L516.06,248.2 L516.46,253.2 L516.85,258.2 L517.22,263.2 L517.57,268.2 L517.92,273.2 L518.24,278.2 L518.55,283.2 L518.85,288.3 L519.13,293.3 L519.40,298.3 L519.65,303.3 L519.88,308.3 L520.10,313.3 L520.31,318.3 L520.50,323.3 L520.68,328.3 L520.84,333.3 L520.99,338.3 L521.12,343.3 L521.24,348.3 L521.34,353.3 L521.43,358.4 L521.50,363.4 L521.56,368.4 L521.60,373.4 L521.64,378.4 L521.67,383.4 L521.69,388.4 L521.69,393.4 L521.67,398.4 L521.64,403.4 L521.60,408.4 L521.54,413.4 L521.46,418.4 L521.37,423.4 L521.27,428.5 L521.15,433.5 L521.02,438.5 L520.87,443.5 L520.71,448.5 L520.53,453.5 L520.33,458.5 L520.13,463.5 L519.92,468.5 L519.69,473.5 L519.45,478.5 L519.19,483.5 L518.92,488.5 L518.63,493.5 L518.33,498.6 L518.01,503.6 L517.68,508.6 L517.34,513.6 L516.98,518.6 L516.60,523.6 L516.21,528.6 L515.80,533.6 L515.38,538.6 L514.95,543.6 L514.50,548.6 L514.06,553.6 L513.60,558.6 L513.12,563.6 L512.63,568.7 L512.13,573.7 L511.61,578.7 L511.07,583.7 L510.52,588.7 L509.96,593.7 L509.38,598.7 L508.79,603.7 L508.18,608.7 L507.55,613.7 L506.92,618.7 L506.26,623.7 L505.60,628.7 L504.91,633.7 L504.23,638.8 L503.54,643.8 L502.84,648.8 L502.11,653.8 L501.38,658.8 L500.63,663.8 L499.86,668.8 L499.08,673.8 L498.29,678.8 L497.48,683.8 L496.65,688.8 L495.81,693.8 L494.96,698.8 L494.09,703.8 L493.21,708.9 L492.31,713.9 L491.40,718.9 L490.46,723.9 L489.51,728.9 L488.54,733.9 L487.56,738.9 L486.56,743.9 L485.55,748.9 L484.52,753.9 L483.48,758.9 L482.42,763.9 L481.35,768.9 L480.26,773.9 L479.16,779.0 L478.04,784.0 L476.91,789.0 L475.77,794.0 L474.61,799.0 L473.43,804.0 L472.24,809.0 L471.00,814.0 L471.68,814.0 L472.92,809.0 L474.18,804.0 L475.43,799.0 L476.66,794.0 L477.88,789.0 L479.09,784.0 L480.28,779.0 L481.45,773.9 L482.61,768.9 L483.76,763.9 L484.89,758.9 L486.01,753.9 L487.11,748.9 L488.19,743.9 L489.27,738.9 L490.32,733.9 L491.36,728.9 L492.39,723.9 L493.41,718.9 L494.42,713.9 L495.41,708.9 L496.39,703.8 L497.36,698.8 L498.31,693.8 L499.24,688.8 L500.16,683.8 L501.07,678.8 L501.96,673.8 L502.84,668.8 L503.70,663.8 L504.54,658.8 L505.38,653.8 L506.19,648.8 L506.99,643.8 L507.78,638.8 L508.55,633.7 L509.29,628.7 L510.01,623.7 L510.72,618.7 L511.41,613.7 L512.09,608.7 L512.75,603.7 L513.40,598.7 L514.03,593.7 L514.65,588.7 L515.26,583.7 L515.85,578.7 L516.42,573.7 L516.98,568.7 L517.53,563.6 L518.06,558.6 L518.58,553.6 L519.08,548.6 L519.55,543.6 L520.00,538.6 L520.44,533.6 L520.86,528.6 L521.27,523.6 L521.66,518.6 L522.04,513.6 L522.41,508.6 L522.76,503.6 L523.09,498.6 L523.41,493.5 L523.72,488.5 L524.01,483.5 L524.28,478.5 L524.54,473.5 L524.79,468.5 L525.02,463.5 L525.23,458.5 L525.43,453.5 L525.61,448.5 L525.77,443.5 L525.92,438.5 L526.05,433.5 L526.17,428.5 L526.27,423.4 L526.36,418.4 L526.44,413.4 L526.50,408.4 L526.54,403.4 L526.57,398.4 L526.59,393.4 L526.59,388.4 L526.57,383.4 L526.54,378.4 L526.50,373.4 L526.43,368.4 L526.34,363.4 L526.24,358.4 L526.12,353.3 L525.99,348.3 L525.84,343.3 L525.68,338.3 L525.50,333.3 L525.31,328.3 L525.10,323.3 L524.88,318.3 L524.65,313.3 L524.40,308.3 L524.13,303.3 L523.85,298.3 L523.55,293.3 L523.25,288.3 L522.92,283.2 L522.59,278.2 L522.23,273.2 L521.87,268.2 L521.48,263.2 L521.09,258.2 L520.68,253.2 L520.25,248.2 L519.81,243.2 L519.35,238.2 L518.88,233.2 L518.40,228.2 L517.90,223.2 L517.38,218.2 L516.86,213.1 L516.31,208.1 L515.75,203.1 L515.18,198.1 L514.58,193.1 L513.97,188.1 L513.35,183.1 L512.71,178.1 L512.06,173.1 L511.39,168.1 L510.71,163.1 L510.01,158.1 L509.30,153.1 L508.57,148.1 L507.83,143.0 L507.07,138.0 L506.30,133.0 L505.52,128.0 L504.71,123.0 L503.90,118.0 L503.07,113.0 L502.24,108.0Z" fill="#fff"/>
<linearGradient id="ag8" gradientUnits="userSpaceOnUse" x1="0" y1="113" x2="0" y2="809"><stop offset="0.000" stop-color="rgb(255, 255, 0)"/><stop offset="0.125" stop-color="rgb(255, 255, 0)"/><stop offset="0.250" stop-color="rgb(255, 255, 0)"/><stop offset="0.375" stop-color="rgb(255, 255, 0)"/><stop offset="0.500" stop-color="rgb(255, 255, 0)"/><stop offset="0.625" stop-color="rgb(255, 255, 0)"/><stop offset="0.750" stop-color="rgb(255, 255, 0)"/><stop offset="0.875" stop-color="rgb(255, 255, 0)"/><stop offset="1.000" stop-color="rgb(255, 222, 0)"/></linearGradient>
<path d="M516.34,108.0 L517.15,113.0 L517.94,118.0 L518.70,123.0 L519.46,128.0 L520.20,133.0 L520.92,138.0 L521.63,143.0 L522.33,148.1 L523.01,153.1 L523.68,158.1 L524.33,163.1 L524.97,168.1 L525.60,173.1 L526.21,178.1 L526.80,183.1 L527.38,188.1 L527.95,193.1 L528.50,198.1 L529.04,203.1 L529.57,208.1 L530.08,213.1 L530.58,218.2 L531.07,223.2 L531.54,228.2 L532.00,233.2 L532.44,238.2 L532.86,243.2 L533.28,248.2 L533.68,253.2 L534.06,258.2 L534.43,263.2 L534.79,268.2 L535.13,273.2 L535.45,278.2 L535.77,283.2 L536.07,288.3 L536.35,293.3 L536.63,298.3 L536.89,303.3 L537.14,308.3 L537.37,313.3 L537.58,318.3 L537.79,323.3 L537.98,328.3 L538.15,333.3 L538.31,338.3 L538.46,343.3 L538.59,348.3 L538.70,353.3 L538.81,358.4 L538.89,363.4 L538.97,368.4 L539.03,373.4 L539.08,378.4 L539.12,383.4 L539.15,388.4 L539.16,393.4 L539.16,398.4 L539.14,403.4 L539.11,408.4 L539.07,413.4 L539.01,418.4 L538.94,423.4 L538.85,428.5 L538.75,433.5 L538.63,438.5 L538.50,443.5 L538.35,448.5 L538.19,453.5 L538.02,458.5 L537.83,463.5 L537.64,468.5 L537.43,473.5 L537.20,478.5 L536.96,483.5 L536.71,488.5 L536.44,493.5 L536.16,498.6 L535.86,503.6 L535.55,508.6 L535.23,513.6 L534.89,518.6 L534.53,523.6 L534.17,528.6 L533.78,533.6 L533.39,538.6 L532.97,543.6 L532.55,548.6 L532.12,553.6 L531.68,558.6 L531.23,563.6 L530.76,568.7 L530.27,573.7 L529.78,578.7 L529.26,583.7 L528.74,588.7 L528.19,593.7 L527.64,598.7 L527.07,603.7 L526.48,608.7 L525.88,613.7 L525.27,618.7 L524.64,623.7 L524.00,628.7 L523.35,633.7 L522.68,638.8 L522.01,643.8 L521.32,648.8 L520.62,653.8 L519.91,658.8 L519.18,663.8 L518.43,668.8 L517.67,673.8 L516.90,678.8 L516.11,683.8 L515.31,688.8 L514.49,693.8 L513.66,698.8 L512.82,703.8 L511.96,708.9 L511.08,713.9 L510.19,718.9 L509.29,723.9 L508.37,728.9 L507.43,733.9 L506.48,738.9 L505.51,743.9 L504.53,748.9 L503.54,753.9 L502.53,758.9 L501.51,763.9 L500.47,768.9 L499.42,773.9 L498.35,779.0 L497.27,784.0 L496.17,789.0 L495.07,794.0 L493.94,799.0 L492.80,804.0 L491.65,809.0 L490.46,814.0 L493.28,814.0 L494.48,809.0 L495.69,804.0 L496.88,799.0 L498.06,794.0 L499.22,789.0 L500.37,784.0 L501.51,779.0 L502.63,773.9 L503.74,768.9 L504.83,763.9 L505.91,758.9 L506.97,753.9 L508.02,748.9 L509.06,743.9 L510.08,738.9 L511.09,733.9 L512.08,728.9 L513.06,723.9 L514.02,718.9 L514.98,713.9 L515.92,708.9 L516.85,703.8 L517.76,698.8 L518.65,693.8 L519.54,688.8 L520.41,683.8 L521.26,678.8 L522.10,673.8 L522.92,668.8 L523.74,663.8 L524.53,658.8 L525.31,653.8 L526.08,648.8 L526.84,643.8 L527.57,638.8 L528.30,633.7 L528.99,628.7 L529.68,623.7 L530.35,618.7 L531.00,613.7 L531.64,608.7 L532.27,603.7 L532.88,598.7 L533.48,593.7 L534.06,588.7 L534.63,583.7 L535.18,578.7 L535.72,573.7 L536.25,568.7 L536.76,563.6 L537.25,558.6 L537.74,553.6 L538.21,548.6 L538.65,543.6 L539.07,538.6 L539.48,533.6 L539.88,528.6 L540.26,523.6 L540.63,518.6 L540.98,513.6 L541.32,508.6 L541.65,503.6 L541.96,498.6 L542.25,493.5 L542.54,488.5 L542.80,483.5 L543.06,478.5 L543.29,473.5 L543.52,468.5 L543.73,463.5 L543.92,458.5 L544.09,453.5 L544.25,448.5 L544.40,443.5 L544.53,438.5 L544.65,433.5 L544.75,428.5 L544.84,423.4 L544.91,418.4 L544.97,413.4 L545.01,408.4 L545.04,403.4 L545.06,398.4 L545.06,393.4 L545.05,388.4 L545.02,383.4 L544.98,378.4 L544.92,373.4 L544.84,368.4 L544.75,363.4 L544.64,358.4 L544.51,353.3 L544.37,348.3 L544.22,343.3 L544.05,338.3 L543.87,333.3 L543.67,328.3 L543.46,323.3 L543.24,318.3 L543.00,313.3 L542.75,308.3 L542.48,303.3 L542.19,298.3 L541.90,293.3 L541.59,288.3 L541.26,283.2 L540.91,278.2 L540.55,273.2 L540.18,268.2 L539.79,263.2 L539.39,258.2 L538.97,253.2 L538.54,248.2 L538.09,243.2 L537.63,238.2 L537.16,233.2 L536.67,228.2 L536.16,223.2 L535.64,218.2 L535.11,213.1 L534.57,208.1 L534.00,203.1 L533.43,198.1 L532.83,193.1 L532.22,188.1 L531.60,183.1 L530.96,178.1 L530.31,173.1 L529.65,168.1 L528.97,163.1 L528.27,158.1 L527.56,153.1 L526.84,148.1 L526.10,143.0 L525.35,138.0 L524.58,133.0 L523.80,128.0 L523.01,123.0 L522.20,118.0 L521.37,113.0 L520.56,108.0Z" fill="url(#ag8)"/>
<path d="M517.12,108.0 L517.93,113.0 L518.71,118.0 L519.47,123.0 L520.22,128.0 L520.95,133.0 L521.67,138.0 L522.37,143.0 L523.06,148.1 L523.74,153.1 L524.40,158.1 L525.04,163.1 L525.68,168.1 L526.29,173.1 L526.90,178.1 L527.48,183.1 L528.06,188.1 L528.62,193.1 L529.17,198.1 L529.70,203.1 L530.22,208.1 L530.73,213.1 L531.22,218.2 L531.70,223.2 L532.17,228.2 L532.62,233.2 L533.06,238.2 L533.48,243.2 L533.88,248.2 L534.28,253.2 L534.66,258.2 L535.02,263.2 L535.37,268.2 L535.71,273.2 L536.03,278.2 L536.33,283.2 L536.63,288.3 L536.91,293.3 L537.18,298.3 L537.44,303.3 L537.68,308.3 L537.91,313.3 L538.13,318.3 L538.32,323.3 L538.51,328.3 L538.68,333.3 L538.84,338.3 L538.98,343.3 L539.11,348.3 L539.22,353.3 L539.32,358.4 L539.40,363.4 L539.47,368.4 L539.53,373.4 L539.58,378.4 L539.62,383.4 L539.65,388.4 L539.66,393.4 L539.66,398.4 L539.64,403.4 L539.61,408.4 L539.57,413.4 L539.51,418.4 L539.44,423.4 L539.35,428.5 L539.25,433.5 L539.13,438.5 L539.00,443.5 L538.85,448.5 L538.69,453.5 L538.52,458.5 L538.34,463.5 L538.14,468.5 L537.93,473.5 L537.71,478.5 L537.47,483.5 L537.22,488.5 L536.96,493.5 L536.68,498.6 L536.38,503.6 L536.08,508.6 L535.75,513.6 L535.42,518.6 L535.06,523.6 L534.70,528.6 L534.32,533.6 L533.92,538.6 L533.51,543.6 L533.09,548.6 L532.67,553.6 L532.24,558.6 L531.79,563.6 L531.33,568.7 L530.85,573.7 L530.36,578.7 L529.85,583.7 L529.33,588.7 L528.80,593.7 L528.25,598.7 L527.69,603.7 L527.11,608.7 L526.52,613.7 L525.91,618.7 L525.29,623.7 L524.65,628.7 L524.00,633.7 L523.35,638.8 L522.69,643.8 L522.01,648.8 L521.32,653.8 L520.62,658.8 L519.90,663.8 L519.17,668.8 L518.42,673.8 L517.66,678.8 L516.88,683.8 L516.09,688.8 L515.28,693.8 L514.46,698.8 L513.63,703.8 L512.78,708.9 L511.92,713.9 L511.04,718.9 L510.15,723.9 L509.23,728.9 L508.30,733.9 L507.36,738.9 L506.41,743.9 L505.43,748.9 L504.45,753.9 L503.45,758.9 L502.44,763.9 L501.41,768.9 L500.36,773.9 L499.31,779.0 L498.24,784.0 L497.15,789.0 L496.05,794.0 L494.93,799.0 L493.81,804.0 L492.66,809.0 L491.47,814.0 L492.27,814.0 L493.47,809.0 L494.68,804.0 L495.89,799.0 L497.07,794.0 L498.25,789.0 L499.41,784.0 L500.55,779.0 L501.68,773.9 L502.80,768.9 L503.90,763.9 L504.99,758.9 L506.06,753.9 L507.12,748.9 L508.17,743.9 L509.20,738.9 L510.21,733.9 L511.21,728.9 L512.20,723.9 L513.18,718.9 L514.14,713.9 L515.10,708.9 L516.03,703.8 L516.96,698.8 L517.86,693.8 L518.76,688.8 L519.64,683.8 L520.50,678.8 L521.35,673.8 L522.19,668.8 L523.01,663.8 L523.82,658.8 L524.61,653.8 L525.39,648.8 L526.16,643.8 L526.91,638.8 L527.64,633.7 L528.34,628.7 L529.03,623.7 L529.71,618.7 L530.37,613.7 L531.02,608.7 L531.65,603.7 L532.27,598.7 L532.87,593.7 L533.46,588.7 L534.04,583.7 L534.60,578.7 L535.15,573.7 L535.68,568.7 L536.20,563.6 L536.70,558.6 L537.19,553.6 L537.66,548.6 L538.11,543.6 L538.54,538.6 L538.95,533.6 L539.35,528.6 L539.73,523.6 L540.10,518.6 L540.46,513.6 L540.80,508.6 L541.13,503.6 L541.44,498.6 L541.74,493.5 L542.02,488.5 L542.29,483.5 L542.55,478.5 L542.79,473.5 L543.01,468.5 L543.23,463.5 L543.42,458.5 L543.59,453.5 L543.75,448.5 L543.90,443.5 L544.03,438.5 L544.15,433.5 L544.25,428.5 L544.34,423.4 L544.41,418.4 L544.47,413.4 L544.51,408.4 L544.54,403.4 L544.56,398.4 L544.56,393.4 L544.55,388.4 L544.52,383.4 L544.48,378.4 L544.42,373.4 L544.34,368.4 L544.24,363.4 L544.12,358.4 L544.00,353.3 L543.85,348.3 L543.70,343.3 L543.53,338.3 L543.34,333.3 L543.14,328.3 L542.93,323.3 L542.70,318.3 L542.45,313.3 L542.20,308.3 L541.93,303.3 L541.64,298.3 L541.34,293.3 L541.02,288.3 L540.69,283.2 L540.34,278.2 L539.97,273.2 L539.59,268.2 L539.20,263.2 L538.79,258.2 L538.37,253.2 L537.93,248.2 L537.48,243.2 L537.01,238.2 L536.53,233.2 L536.04,228.2 L535.53,223.2 L535.00,218.2 L534.47,213.1 L533.91,208.1 L533.35,203.1 L532.76,198.1 L532.16,193.1 L531.55,188.1 L530.92,183.1 L530.27,178.1 L529.62,173.1 L528.94,168.1 L528.26,163.1 L527.55,158.1 L526.84,153.1 L526.11,148.1 L525.36,143.0 L524.60,138.0 L523.83,133.0 L523.04,128.0 L522.24,123.0 L521.42,118.0 L520.59,113.0 L519.78,108.0Z" fill="#fff"/>
<linearGradient id="ag9" gradientUnits="userSpaceOnUse" x1="0" y1="113" x2="0" y2="809"><stop offset="0.000" stop-color="rgb(255, 255, 0)"/><stop offset="0.125" stop-color="rgb(255, 255, 0)"/><stop offset="0.250" stop-color="rgb(255, 255, 0)"/><stop offset="0.375" stop-color="rgb(255, 255, 0)"/><stop offset="0.500" stop-color="rgb(255, 255, 0)"/><stop offset="0.625" stop-color="rgb(255, 255, 0)"/><stop offset="0.750" stop-color="rgb(255, 255, 0)"/><stop offset="0.875" stop-color="rgb(255, 255, 0)"/><stop offset="1.000" stop-color="rgb(255, 229, 0)"/></linearGradient>
<path d="M532.77,108.0 L533.61,113.0 L534.41,118.0 L535.20,123.0 L535.97,128.0 L536.73,133.0 L537.48,138.0 L538.21,143.0 L538.93,148.1 L539.63,153.1 L540.32,158.1 L541.00,163.1 L541.66,168.1 L542.30,173.1 L542.93,178.1 L543.55,183.1 L544.15,188.1 L544.74,193.1 L545.32,198.1 L545.88,203.1 L546.42,208.1 L546.96,213.1 L547.47,218.2 L547.98,223.2 L548.46,228.2 L548.94,233.2 L549.40,238.2 L549.84,243.2 L550.28,248.2 L550.69,253.2 L551.10,258.2 L551.48,263.2 L551.86,268.2 L552.22,273.2 L552.56,278.2 L552.89,283.2 L553.21,288.3 L553.51,293.3 L553.80,298.3 L554.08,303.3 L554.34,308.3 L554.58,313.3 L554.81,318.3 L555.03,323.3 L555.23,328.3 L555.42,333.3 L555.59,338.3 L555.75,343.3 L555.90,348.3 L556.03,353.3 L556.14,358.4 L556.25,363.4 L556.33,368.4 L556.41,373.4 L556.48,378.4 L556.54,383.4 L556.58,388.4 L556.61,393.4 L556.63,398.4 L556.63,403.4 L556.62,408.4 L556.59,413.4 L556.55,418.4 L556.49,423.4 L556.42,428.5 L556.34,433.5 L556.24,438.5 L556.12,443.5 L556.00,448.5 L555.86,453.5 L555.70,458.5 L555.53,463.5 L555.35,468.5 L555.16,473.5 L554.96,478.5 L554.74,483.5 L554.50,488.5 L554.25,493.5 L553.99,498.6 L553.71,503.6 L553.42,508.6 L553.11,513.6 L552.79,518.6 L552.45,523.6 L552.10,528.6 L551.74,533.6 L551.36,538.6 L550.97,543.6 L550.56,548.6 L550.15,553.6 L549.73,558.6 L549.29,563.6 L548.84,568.7 L548.37,573.7 L547.89,578.7 L547.39,583.7 L546.88,588.7 L546.36,593.7 L545.82,598.7 L545.27,603.7 L544.70,608.7 L544.12,613.7 L543.52,618.7 L542.91,623.7 L542.29,628.7 L541.65,633.7 L541.01,638.8 L540.35,643.8 L539.69,648.8 L539.00,653.8 L538.31,658.8 L537.60,663.8 L536.88,668.8 L536.14,673.8 L535.38,678.8 L534.62,683.8 L533.84,688.8 L533.04,693.8 L532.23,698.8 L531.41,703.8 L530.57,708.9 L529.71,713.9 L528.85,718.9 L527.96,723.9 L527.06,728.9 L526.15,733.9 L525.22,738.9 L524.27,743.9 L523.31,748.9 L522.34,753.9 L521.35,758.9 L520.35,763.9 L519.34,768.9 L518.31,773.9 L517.26,779.0 L516.20,784.0 L515.13,789.0 L514.04,794.0 L512.94,799.0 L511.82,804.0 L510.69,809.0 L509.52,814.0 L512.45,814.0 L513.62,809.0 L514.80,804.0 L515.97,799.0 L517.13,794.0 L518.27,789.0 L519.40,784.0 L520.52,779.0 L521.62,773.9 L522.70,768.9 L523.77,763.9 L524.83,758.9 L525.87,753.9 L526.90,748.9 L527.91,743.9 L528.91,738.9 L529.90,733.9 L530.87,728.9 L531.83,723.9 L532.77,718.9 L533.71,713.9 L534.63,708.9 L535.53,703.8 L536.42,698.8 L537.30,693.8 L538.16,688.8 L539.01,683.8 L539.84,678.8 L540.66,673.8 L541.46,668.8 L542.25,663.8 L543.03,658.8 L543.79,653.8 L544.54,648.8 L545.27,643.8 L545.99,638.8 L546.69,633.7 L547.37,628.7 L548.03,623.7 L548.67,618.7 L549.31,613.7 L549.92,608.7 L550.53,603.7 L551.12,598.7 L551.69,593.7 L552.25,588.7 L552.80,583.7 L553.33,578.7 L553.85,573.7 L554.35,568.7 L554.84,563.6 L555.31,558.6 L555.77,553.6 L556.22,548.6 L556.64,543.6 L557.05,538.6 L557.44,533.6 L557.82,528.6 L558.18,523.6 L558.53,518.6 L558.87,513.6 L559.19,508.6 L559.49,503.6 L559.78,498.6 L560.06,493.5 L560.32,488.5 L560.57,483.5 L560.81,478.5 L561.03,473.5 L561.23,468.5 L561.43,463.5 L561.60,458.5 L561.76,453.5 L561.90,448.5 L562.02,443.5 L562.14,438.5 L562.24,433.5 L562.32,428.5 L562.39,423.4 L562.45,418.4 L562.49,413.4 L562.52,408.4 L562.53,403.4 L562.53,398.4 L562.51,393.4 L562.48,388.4 L562.44,383.4 L562.38,378.4 L562.30,373.4 L562.20,368.4 L562.09,363.4 L561.96,358.4 L561.81,353.3 L561.65,348.3 L561.48,343.3 L561.30,338.3 L561.09,333.3 L560.88,328.3 L560.65,323.3 L560.40,318.3 L560.15,313.3 L559.87,308.3 L559.59,303.3 L559.28,298.3 L558.97,293.3 L558.64,288.3 L558.29,283.2 L557.93,278.2 L557.56,273.2 L557.17,268.2 L556.77,263.2 L556.36,258.2 L555.93,253.2 L555.48,248.2 L555.02,243.2 L554.55,238.2 L554.06,233.2 L553.56,228.2 L553.04,223.2 L552.51,218.2 L551.97,213.1 L551.41,208.1 L550.84,203.1 L550.25,198.1 L549.65,193.1 L549.03,188.1 L548.40,183.1 L547.75,178.1 L547.09,173.1 L546.42,168.1 L545.73,163.1 L545.03,158.1 L544.31,153.1 L543.58,148.1 L542.84,143.0 L542.08,138.0 L541.30,133.0 L540.52,128.0 L539.71,123.0 L538.90,118.0 L538.07,113.0 L537.23,108.0Z" fill="url(#ag9)"/>
<path d="M533.51,108.0 L534.35,113.0 L535.14,118.0 L535.93,123.0 L536.70,128.0 L537.46,133.0 L538.20,138.0 L538.92,143.0 L539.64,148.1 L540.34,153.1 L541.02,158.1 L541.69,163.1 L542.35,168.1 L542.99,173.1 L543.61,178.1 L544.23,183.1 L544.83,188.1 L545.41,193.1 L545.98,198.1 L546.54,203.1 L547.08,208.1 L547.60,213.1 L548.12,218.2 L548.61,223.2 L549.10,228.2 L549.57,233.2 L550.02,238.2 L550.46,243.2 L550.89,248.2 L551.30,253.2 L551.70,258.2 L552.09,263.2 L552.46,268.2 L552.81,273.2 L553.15,278.2 L553.48,283.2 L553.79,288.3 L554.09,293.3 L554.37,298.3 L554.64,303.3 L554.90,308.3 L555.14,313.3 L555.36,318.3 L555.57,323.3 L555.77,328.3 L555.96,333.3 L556.12,338.3 L556.28,343.3 L556.42,348.3 L556.55,353.3 L556.66,358.4 L556.76,363.4 L556.84,368.4 L556.91,373.4 L556.98,378.4 L557.04,383.4 L557.08,388.4 L557.11,393.4 L557.13,398.4 L557.13,403.4 L557.12,408.4 L557.09,413.4 L557.05,418.4 L556.99,423.4 L556.92,428.5 L556.84,433.5 L556.74,438.5 L556.62,443.5 L556.50,448.5 L556.36,453.5 L556.20,458.5 L556.03,463.5 L555.86,468.5 L555.67,473.5 L555.46,478.5 L555.25,483.5 L555.01,488.5 L554.77,493.5 L554.50,498.6 L554.23,503.6 L553.94,508.6 L553.63,513.6 L553.32,518.6 L552.98,523.6 L552.64,528.6 L552.27,533.6 L551.90,538.6 L551.51,543.6 L551.11,548.6 L550.70,553.6 L550.28,558.6 L549.85,563.6 L549.40,568.7 L548.94,573.7 L548.47,578.7 L547.98,583.7 L547.47,588.7 L546.95,593.7 L546.42,598.7 L545.87,603.7 L545.31,608.7 L544.74,613.7 L544.15,618.7 L543.54,623.7 L542.92,628.7 L542.29,633.7 L541.66,638.8 L541.02,643.8 L540.36,648.8 L539.69,653.8 L539.01,658.8 L538.31,663.8 L537.59,668.8 L536.87,673.8 L536.13,678.8 L535.37,683.8 L534.60,688.8 L533.81,693.8 L533.02,698.8 L532.20,703.8 L531.37,708.9 L530.53,713.9 L529.68,718.9 L528.80,723.9 L527.91,728.9 L527.00,733.9 L526.08,738.9 L525.15,743.9 L524.20,748.9 L523.24,753.9 L522.26,758.9 L521.27,763.9 L520.26,768.9 L519.24,773.9 L518.20,779.0 L517.15,784.0 L516.09,789.0 L515.01,794.0 L513.92,799.0 L512.81,804.0 L511.69,809.0 L510.52,814.0 L511.45,814.0 L512.62,809.0 L513.82,804.0 L515.00,799.0 L516.16,794.0 L517.32,789.0 L518.45,784.0 L519.58,779.0 L520.69,773.9 L521.78,768.9 L522.86,763.9 L523.93,758.9 L524.98,753.9 L526.02,748.9 L527.04,743.9 L528.05,738.9 L529.04,733.9 L530.02,728.9 L530.99,723.9 L531.94,718.9 L532.89,713.9 L533.82,708.9 L534.73,703.8 L535.64,698.8 L536.52,693.8 L537.40,688.8 L538.26,683.8 L539.10,678.8 L539.93,673.8 L540.75,668.8 L541.55,663.8 L542.33,658.8 L543.11,653.8 L543.87,648.8 L544.61,643.8 L545.34,638.8 L546.05,633.7 L546.73,628.7 L547.40,623.7 L548.05,618.7 L548.69,613.7 L549.31,608.7 L549.92,603.7 L550.52,598.7 L551.10,593.7 L551.66,588.7 L552.22,583.7 L552.75,578.7 L553.28,573.7 L553.79,568.7 L554.28,563.6 L554.76,558.6 L555.23,553.6 L555.68,548.6 L556.10,543.6 L556.51,538.6 L556.91,533.6 L557.29,528.6 L557.65,523.6 L558.00,518.6 L558.34,513.6 L558.66,508.6 L558.97,503.6 L559.27,498.6 L559.55,493.5 L559.81,488.5 L560.06,483.5 L560.30,478.5 L560.52,473.5 L560.73,468.5 L560.92,463.5 L561.10,458.5 L561.26,453.5 L561.40,448.5 L561.52,443.5 L561.64,438.5 L561.74,433.5 L561.82,428.5 L561.89,423.4 L561.95,418.4 L561.99,413.4 L562.02,408.4 L562.03,403.4 L562.03,398.4 L562.01,393.4 L561.98,388.4 L561.94,383.4 L561.88,378.4 L561.80,373.4 L561.70,368.4 L561.58,363.4 L561.44,358.4 L561.29,353.3 L561.13,348.3 L560.95,343.3 L560.76,338.3 L560.56,333.3 L560.34,328.3 L560.10,323.3 L559.85,318.3 L559.59,313.3 L559.31,308.3 L559.02,303.3 L558.71,298.3 L558.39,293.3 L558.06,288.3 L557.71,283.2 L557.35,278.2 L556.97,273.2 L556.58,268.2 L556.17,263.2 L555.75,258.2 L555.32,253.2 L554.87,248.2 L554.40,243.2 L553.92,238.2 L553.43,233.2 L552.93,228.2 L552.40,223.2 L551.87,218.2 L551.32,213.1 L550.76,208.1 L550.18,203.1 L549.59,198.1 L548.98,193.1 L548.36,188.1 L547.72,183.1 L547.07,178.1 L546.41,173.1 L545.73,168.1 L545.04,163.1 L544.33,158.1 L543.61,153.1 L542.87,148.1 L542.13,143.0 L541.36,138.0 L540.58,133.0 L539.79,128.0 L538.98,123.0 L538.16,118.0 L537.33,113.0 L536.49,108.0Z" fill="#fff"/>
<linearGradient id="ag10" gradientUnits="userSpaceOnUse" x1="0" y1="113" x2="0" y2="809"><stop offset="0.000" stop-color="rgb(255, 255, 0)"/><stop offset="0.125" stop-color="rgb(255, 255, 0)"/><stop offset="0.250" stop-color="rgb(255, 255, 0)"/><stop offset="0.375" stop-color="rgb(255, 255, 0)"/><stop offset="0.500" stop-color="rgb(255, 255, 0)"/><stop offset="0.625" stop-color="rgb(255, 255, 0)"/><stop offset="0.750" stop-color="rgb(255, 255, 0)"/><stop offset="0.875" stop-color="rgb(255, 255, 0)"/><stop offset="1.000" stop-color="rgb(255, 236, 0)"/></linearGradient>
<path d="M548.07,108.0 L548.91,113.0 L549.72,118.0 L550.51,123.0 L551.29,128.0 L552.05,133.0 L552.80,138.0 L553.54,143.0 L554.26,148.1 L554.97,153.1 L555.67,158.1 L556.35,163.1 L557.02,168.1 L557.67,173.1 L558.31,178.1 L558.93,183.1 L559.54,188.1 L560.14,193.1 L560.72,198.1 L561.29,203.1 L561.85,208.1 L562.39,213.1 L562.91,218.2 L563.42,223.2 L563.92,228.2 L564.41,233.2 L564.88,238.2 L565.33,243.2 L565.77,248.2 L566.20,253.2 L566.62,258.2 L567.02,263.2 L567.40,268.2 L567.77,273.2 L568.13,278.2 L568.48,283.2 L568.81,288.3 L569.13,293.3 L569.43,298.3 L569.72,303.3 L570.00,308.3 L570.26,313.3 L570.51,318.3 L570.75,323.3 L570.97,328.3 L571.18,333.3 L571.37,338.3 L571.55,343.3 L571.71,348.3 L571.87,353.3 L572.00,358.4 L572.13,363.4 L572.23,368.4 L572.33,373.4 L572.42,378.4 L572.49,383.4 L572.56,388.4 L572.61,393.4 L572.64,398.4 L572.66,403.4 L572.67,408.4 L572.66,413.4 L572.64,418.4 L572.60,423.4 L572.55,428.5 L572.49,433.5 L572.41,438.5 L572.32,443.5 L572.21,448.5 L572.09,453.5 L571.95,458.5 L571.81,463.5 L571.65,468.5 L571.48,473.5 L571.29,478.5 L571.09,483.5 L570.87,488.5 L570.65,493.5 L570.40,498.6 L570.15,503.6 L569.88,508.6 L569.59,513.6 L569.29,518.6 L568.98,523.6 L568.65,528.6 L568.31,533.6 L567.96,538.6 L567.59,543.6 L567.20,548.6 L566.82,553.6 L566.42,558.6 L566.00,563.6 L565.57,568.7 L565.13,573.7 L564.67,578.7 L564.20,583.7 L563.71,588.7 L563.21,593.7 L562.70,598.7 L562.17,603.7 L561.63,608.7 L561.07,613.7 L560.50,618.7 L559.91,623.7 L559.32,628.7 L558.70,633.7 L558.09,638.8 L557.47,643.8 L556.83,648.8 L556.18,653.8 L555.51,658.8 L554.83,663.8 L554.13,668.8 L553.43,673.8 L552.70,678.8 L551.97,683.8 L551.22,688.8 L550.45,693.8 L549.67,698.8 L548.88,703.8 L548.07,708.9 L547.25,713.9 L546.42,718.9 L545.57,723.9 L544.70,728.9 L543.82,733.9 L542.93,738.9 L542.02,743.9 L541.10,748.9 L540.16,753.9 L539.21,758.9 L538.25,763.9 L537.27,768.9 L536.28,773.9 L535.27,779.0 L534.25,784.0 L533.22,789.0 L532.17,794.0 L531.11,799.0 L530.03,804.0 L528.94,809.0 L527.81,814.0 L530.83,814.0 L531.96,809.0 L533.11,804.0 L534.24,799.0 L535.36,794.0 L536.46,789.0 L537.55,784.0 L538.62,779.0 L539.69,773.9 L540.73,768.9 L541.77,763.9 L542.79,758.9 L543.79,753.9 L544.78,748.9 L545.76,743.9 L546.72,738.9 L547.67,733.9 L548.61,728.9 L549.53,723.9 L550.44,718.9 L551.33,713.9 L552.21,708.9 L553.08,703.8 L553.93,698.8 L554.77,693.8 L555.60,688.8 L556.41,683.8 L557.21,678.8 L557.99,673.8 L558.76,668.8 L559.52,663.8 L560.26,658.8 L560.98,653.8 L561.70,648.8 L562.39,643.8 L563.08,638.8 L563.75,633.7 L564.39,628.7 L565.01,623.7 L565.62,618.7 L566.22,613.7 L566.81,608.7 L567.38,603.7 L567.93,598.7 L568.47,593.7 L569.00,588.7 L569.52,583.7 L570.01,578.7 L570.50,573.7 L570.97,568.7 L571.43,563.6 L571.87,558.6 L572.30,553.6 L572.72,548.6 L573.11,543.6 L573.49,538.6 L573.85,533.6 L574.20,528.6 L574.54,523.6 L574.86,518.6 L575.16,513.6 L575.46,508.6 L575.74,503.6 L576.00,498.6 L576.25,493.5 L576.49,488.5 L576.71,483.5 L576.92,478.5 L577.12,473.5 L577.30,468.5 L577.46,463.5 L577.61,458.5 L577.75,453.5 L577.87,448.5 L577.98,443.5 L578.07,438.5 L578.15,433.5 L578.21,428.5 L578.26,423.4 L578.30,418.4 L578.32,413.4 L578.33,408.4 L578.32,403.4 L578.30,398.4 L578.27,393.4 L578.22,388.4 L578.15,383.4 L578.08,378.4 L577.99,373.4 L577.87,368.4 L577.74,363.4 L577.60,358.4 L577.45,353.3 L577.28,348.3 L577.09,343.3 L576.89,338.3 L576.68,333.3 L576.45,328.3 L576.21,323.3 L575.96,318.3 L575.69,313.3 L575.41,308.3 L575.11,303.3 L574.80,298.3 L574.47,293.3 L574.13,288.3 L573.78,283.2 L573.41,278.2 L573.02,273.2 L572.62,268.2 L572.21,263.2 L571.78,258.2 L571.34,253.2 L570.88,248.2 L570.42,243.2 L569.93,238.2 L569.43,233.2 L568.92,228.2 L568.40,223.2 L567.86,218.2 L567.30,213.1 L566.73,208.1 L566.15,203.1 L565.56,198.1 L564.95,193.1 L564.32,188.1 L563.68,183.1 L563.03,178.1 L562.36,173.1 L561.68,168.1 L560.99,163.1 L560.28,158.1 L559.56,153.1 L558.82,148.1 L558.07,143.0 L557.31,138.0 L556.53,133.0 L555.73,128.0 L554.93,123.0 L554.11,118.0 L553.27,113.0 L552.44,108.0Z" fill="url(#ag10)"/>
<path d="M548.83,108.0 L549.66,113.0 L550.47,118.0 L551.26,123.0 L552.03,128.0 L552.79,133.0 L553.54,138.0 L554.27,143.0 L554.99,148.1 L555.69,153.1 L556.38,158.1 L557.06,163.1 L557.72,168.1 L558.37,173.1 L559.00,178.1 L559.62,183.1 L560.23,188.1 L560.82,193.1 L561.40,198.1 L561.96,203.1 L562.51,208.1 L563.05,213.1 L563.57,218.2 L564.08,223.2 L564.57,228.2 L565.05,233.2 L565.52,238.2 L565.97,243.2 L566.41,248.2 L566.83,253.2 L567.24,258.2 L567.63,263.2 L568.02,268.2 L568.38,273.2 L568.74,278.2 L569.07,283.2 L569.40,288.3 L569.72,293.3 L570.02,298.3 L570.31,303.3 L570.58,308.3 L570.84,313.3 L571.09,318.3 L571.32,323.3 L571.54,328.3 L571.74,333.3 L571.93,338.3 L572.11,343.3 L572.27,348.3 L572.42,353.3 L572.55,358.4 L572.67,363.4 L572.78,368.4 L572.87,373.4 L572.96,378.4 L573.03,383.4 L573.10,388.4 L573.15,393.4 L573.18,398.4 L573.20,403.4 L573.21,408.4 L573.20,413.4 L573.18,418.4 L573.14,423.4 L573.09,428.5 L573.03,433.5 L572.95,438.5 L572.86,443.5 L572.75,448.5 L572.63,453.5 L572.49,458.5 L572.35,463.5 L572.19,468.5 L572.02,473.5 L571.83,478.5 L571.64,483.5 L571.42,488.5 L571.20,493.5 L570.95,498.6 L570.70,503.6 L570.43,508.6 L570.15,513.6 L569.85,518.6 L569.54,523.6 L569.21,528.6 L568.87,533.6 L568.52,538.6 L568.15,543.6 L567.77,548.6 L567.39,553.6 L566.99,558.6 L566.58,563.6 L566.15,568.7 L565.71,573.7 L565.26,578.7 L564.79,583.7 L564.31,588.7 L563.82,593.7 L563.31,598.7 L562.78,603.7 L562.25,608.7 L561.69,613.7 L561.13,618.7 L560.55,623.7 L559.95,628.7 L559.35,633.7 L558.74,638.8 L558.13,643.8 L557.50,648.8 L556.86,653.8 L556.20,658.8 L555.53,663.8 L554.85,668.8 L554.15,673.8 L553.44,678.8 L552.71,683.8 L551.97,688.8 L551.22,693.8 L550.45,698.8 L549.66,703.8 L548.87,708.9 L548.06,713.9 L547.23,718.9 L546.39,723.9 L545.54,728.9 L544.66,733.9 L543.78,738.9 L542.88,743.9 L541.97,748.9 L541.04,753.9 L540.10,758.9 L539.15,763.9 L538.18,768.9 L537.19,773.9 L536.20,779.0 L535.19,784.0 L534.16,789.0 L533.12,794.0 L532.07,799.0 L531.00,804.0 L529.92,809.0 L528.79,814.0 L529.85,814.0 L530.98,809.0 L532.14,804.0 L533.28,799.0 L534.40,794.0 L535.52,789.0 L536.61,784.0 L537.70,779.0 L538.77,773.9 L539.83,768.9 L540.87,763.9 L541.90,758.9 L542.91,753.9 L543.91,748.9 L544.90,743.9 L545.87,738.9 L546.83,733.9 L547.77,728.9 L548.70,723.9 L549.62,718.9 L550.53,713.9 L551.42,708.9 L552.30,703.8 L553.16,698.8 L554.01,693.8 L554.85,688.8 L555.67,683.8 L556.48,678.8 L557.27,673.8 L558.05,668.8 L558.81,663.8 L559.56,658.8 L560.30,653.8 L561.02,648.8 L561.73,643.8 L562.43,638.8 L563.10,633.7 L563.75,628.7 L564.38,623.7 L565.00,618.7 L565.60,613.7 L566.19,608.7 L566.76,603.7 L567.32,598.7 L567.87,593.7 L568.40,588.7 L568.92,583.7 L569.42,578.7 L569.91,573.7 L570.39,568.7 L570.85,563.6 L571.30,558.6 L571.73,553.6 L572.15,548.6 L572.55,543.6 L572.93,538.6 L573.29,533.6 L573.64,528.6 L573.98,523.6 L574.30,518.6 L574.61,513.6 L574.90,508.6 L575.18,503.6 L575.45,498.6 L575.70,493.5 L575.94,488.5 L576.17,483.5 L576.38,478.5 L576.57,473.5 L576.75,468.5 L576.92,463.5 L577.07,458.5 L577.21,453.5 L577.33,448.5 L577.44,443.5 L577.53,438.5 L577.61,433.5 L577.67,428.5 L577.72,423.4 L577.76,418.4 L577.78,413.4 L577.79,408.4 L577.78,403.4 L577.76,398.4 L577.73,393.4 L577.68,388.4 L577.61,383.4 L577.54,378.4 L577.45,373.4 L577.33,368.4 L577.20,363.4 L577.05,358.4 L576.89,353.3 L576.72,348.3 L576.53,343.3 L576.33,338.3 L576.11,333.3 L575.88,328.3 L575.64,323.3 L575.38,318.3 L575.11,313.3 L574.82,308.3 L574.52,303.3 L574.21,298.3 L573.88,293.3 L573.54,288.3 L573.18,283.2 L572.80,278.2 L572.41,273.2 L572.01,268.2 L571.59,263.2 L571.16,258.2 L570.71,253.2 L570.25,248.2 L569.78,243.2 L569.29,238.2 L568.79,233.2 L568.27,228.2 L567.74,223.2 L567.20,218.2 L566.64,213.1 L566.07,208.1 L565.48,203.1 L564.88,198.1 L564.26,193.1 L563.63,188.1 L562.99,183.1 L562.33,178.1 L561.66,173.1 L560.98,168.1 L560.28,163.1 L559.57,158.1 L558.84,153.1 L558.10,148.1 L557.34,143.0 L556.57,138.0 L555.79,133.0 L554.99,128.0 L554.18,123.0 L553.36,118.0 L552.52,113.0 L551.68,108.0Z" fill="#fff"/>
<linearGradient id="ag11" gradientUnits="userSpaceOnUse" x1="0" y1="113" x2="0" y2="809"><stop offset="0.000" stop-color="rgb(255, 255, 0)"/><stop offset="0.125" stop-color="rgb(255, 255, 0)"/><stop offset="0.250" stop-color="rgb(255, 255, 0)"/><stop offset="0.375" stop-color="rgb(255, 255, 0)"/><stop offset="0.500" stop-color="rgb(255, 255, 0)"/><stop offset="0.625" stop-color="rgb(255, 255, 0)"/><stop offset="0.750" stop-color="rgb(255, 255, 0)"/><stop offset="0.875" stop-color="rgb(255, 255, 0)"/><stop offset="1.000" stop-color="rgb(255, 253, 0)"/></linearGradient>
<path d="M562.95,108.0 L563.80,113.0 L564.63,118.0 L565.44,123.0 L566.24,128.0 L567.02,133.0 L567.79,138.0 L568.54,143.0 L569.28,148.1 L570.01,153.1 L570.72,158.1 L571.42,163.1 L572.10,168.1 L572.77,173.1 L573.43,178.1 L574.07,183.1 L574.70,188.1 L575.31,193.1 L575.91,198.1 L576.50,203.1 L577.07,208.1 L577.63,213.1 L578.17,218.2 L578.70,223.2 L579.22,228.2 L579.72,233.2 L580.21,238.2 L580.68,243.2 L581.14,248.2 L581.58,253.2 L582.02,258.2 L582.43,263.2 L582.84,268.2 L583.22,273.2 L583.60,278.2 L583.96,283.2 L584.31,288.3 L584.64,293.3 L584.96,298.3 L585.27,303.3 L585.56,308.3 L585.84,313.3 L586.11,318.3 L586.36,323.3 L586.59,328.3 L586.82,333.3 L587.02,338.3 L587.22,343.3 L587.40,348.3 L587.56,353.3 L587.72,358.4 L587.85,363.4 L587.98,368.4 L588.09,373.4 L588.19,378.4 L588.28,383.4 L588.36,388.4 L588.42,393.4 L588.47,398.4 L588.50,403.4 L588.52,408.4 L588.53,413.4 L588.52,418.4 L588.50,423.4 L588.46,428.5 L588.41,433.5 L588.35,438.5 L588.27,443.5 L588.18,448.5 L588.07,453.5 L587.95,458.5 L587.82,463.5 L587.67,468.5 L587.51,473.5 L587.34,478.5 L587.15,483.5 L586.94,488.5 L586.73,493.5 L586.50,498.6 L586.25,503.6 L585.99,508.6 L585.72,513.6 L585.43,518.6 L585.13,523.6 L584.81,528.6 L584.48,533.6 L584.14,538.6 L583.78,543.6 L583.41,548.6 L583.03,553.6 L582.64,558.6 L582.23,563.6 L581.80,568.7 L581.37,573.7 L580.92,578.7 L580.45,583.7 L579.97,588.7 L579.48,593.7 L578.97,598.7 L578.45,603.7 L577.91,608.7 L577.36,613.7 L576.80,618.7 L576.22,623.7 L575.63,628.7 L575.02,633.7 L574.42,638.8 L573.80,643.8 L573.18,648.8 L572.54,653.8 L571.88,658.8 L571.21,663.8 L570.53,668.8 L569.83,673.8 L569.12,678.8 L568.39,683.8 L567.65,688.8 L566.90,693.8 L566.13,698.8 L565.35,703.8 L564.55,708.9 L563.74,713.9 L562.92,718.9 L562.08,723.9 L561.22,728.9 L560.35,733.9 L559.46,738.9 L558.56,743.9 L557.64,748.9 L556.71,753.9 L555.77,758.9 L554.81,763.9 L553.84,768.9 L552.85,773.9 L551.85,779.0 L550.83,784.0 L549.81,789.0 L548.76,794.0 L547.71,799.0 L546.63,804.0 L545.55,809.0 L544.43,814.0 L547.69,814.0 L548.81,809.0 L549.94,804.0 L551.06,799.0 L552.16,794.0 L553.25,789.0 L554.33,784.0 L555.39,779.0 L556.44,773.9 L557.47,768.9 L558.49,763.9 L559.50,758.9 L560.49,753.9 L561.46,748.9 L562.43,743.9 L563.38,738.9 L564.31,733.9 L565.23,728.9 L566.14,723.9 L567.03,718.9 L567.92,713.9 L568.79,708.9 L569.65,703.8 L570.49,698.8 L571.32,693.8 L572.13,688.8 L572.93,683.8 L573.72,678.8 L574.49,673.8 L575.25,668.8 L575.99,663.8 L576.72,658.8 L577.44,653.8 L578.14,648.8 L578.83,643.8 L579.50,638.8 L580.16,633.7 L580.78,628.7 L581.39,623.7 L581.98,618.7 L582.56,613.7 L583.13,608.7 L583.68,603.7 L584.22,598.7 L584.75,593.7 L585.26,588.7 L585.75,583.7 L586.23,578.7 L586.70,573.7 L587.16,568.7 L587.59,563.6 L588.02,558.6 L588.43,553.6 L588.83,548.6 L589.21,543.6 L589.57,538.6 L589.92,533.6 L590.26,528.6 L590.58,523.6 L590.88,518.6 L591.18,513.6 L591.46,508.6 L591.72,503.6 L591.97,498.6 L592.21,493.5 L592.43,488.5 L592.64,483.5 L592.83,478.5 L593.01,473.5 L593.18,468.5 L593.33,463.5 L593.47,458.5 L593.59,453.5 L593.69,448.5 L593.79,443.5 L593.87,438.5 L593.93,433.5 L593.98,428.5 L594.02,423.4 L594.04,418.4 L594.05,413.4 L594.04,408.4 L594.02,403.4 L593.99,398.4 L593.94,393.4 L593.87,388.4 L593.80,383.4 L593.71,378.4 L593.60,373.4 L593.47,368.4 L593.33,363.4 L593.17,358.4 L593.00,353.3 L592.82,348.3 L592.62,343.3 L592.40,338.3 L592.18,333.3 L591.93,328.3 L591.68,323.3 L591.41,318.3 L591.12,313.3 L590.83,308.3 L590.51,303.3 L590.19,298.3 L589.85,293.3 L589.49,288.3 L589.12,283.2 L588.74,278.2 L588.34,273.2 L587.92,268.2 L587.49,263.2 L587.05,258.2 L586.60,253.2 L586.13,248.2 L585.64,243.2 L585.14,238.2 L584.63,233.2 L584.10,228.2 L583.56,223.2 L583.01,218.2 L582.44,213.1 L581.86,208.1 L581.26,203.1 L580.65,198.1 L580.02,193.1 L579.38,188.1 L578.73,183.1 L578.06,178.1 L577.37,173.1 L576.68,168.1 L575.96,163.1 L575.24,158.1 L574.50,153.1 L573.74,148.1 L572.98,143.0 L572.19,138.0 L571.40,133.0 L570.59,128.0 L569.76,123.0 L568.92,118.0 L568.07,113.0 L567.22,108.0Z" fill="url(#ag11)"/>
<path d="M563.72,108.0 L564.58,113.0 L565.40,118.0 L566.20,123.0 L567.00,128.0 L567.77,133.0 L568.54,138.0 L569.29,143.0 L570.02,148.1 L570.74,153.1 L571.45,158.1 L572.15,163.1 L572.82,168.1 L573.49,173.1 L574.14,178.1 L574.78,183.1 L575.40,188.1 L576.01,193.1 L576.60,198.1 L577.19,203.1 L577.75,208.1 L578.31,213.1 L578.85,218.2 L579.37,223.2 L579.89,228.2 L580.38,233.2 L580.87,238.2 L581.34,243.2 L581.79,248.2 L582.23,253.2 L582.66,258.2 L583.07,263.2 L583.47,268.2 L583.86,273.2 L584.23,278.2 L584.58,283.2 L584.93,288.3 L585.26,293.3 L585.58,298.3 L585.88,303.3 L586.17,308.3 L586.45,313.3 L586.71,318.3 L586.95,323.3 L587.19,328.3 L587.41,333.3 L587.61,338.3 L587.80,343.3 L587.98,348.3 L588.14,353.3 L588.29,358.4 L588.42,363.4 L588.55,368.4 L588.65,373.4 L588.75,378.4 L588.85,383.4 L588.92,388.4 L588.98,393.4 L589.03,398.4 L589.07,403.4 L589.09,408.4 L589.09,413.4 L589.09,418.4 L589.06,423.4 L589.03,428.5 L588.98,433.5 L588.91,438.5 L588.83,443.5 L588.74,448.5 L588.64,453.5 L588.51,458.5 L588.38,463.5 L588.24,468.5 L588.08,473.5 L587.90,478.5 L587.72,483.5 L587.51,488.5 L587.30,493.5 L587.07,498.6 L586.82,503.6 L586.56,508.6 L586.29,513.6 L586.01,518.6 L585.71,523.6 L585.39,528.6 L585.06,533.6 L584.72,538.6 L584.36,543.6 L583.99,548.6 L583.61,553.6 L583.22,558.6 L582.82,563.6 L582.39,568.7 L581.96,573.7 L581.51,578.7 L581.05,583.7 L580.57,588.7 L580.08,593.7 L579.58,598.7 L579.06,603.7 L578.52,608.7 L577.98,613.7 L577.42,618.7 L576.84,623.7 L576.25,628.7 L575.65,633.7 L575.05,638.8 L574.45,643.8 L573.83,648.8 L573.20,653.8 L572.56,658.8 L571.90,663.8 L571.22,668.8 L570.54,673.8 L569.84,678.8 L569.12,683.8 L568.39,688.8 L567.65,693.8 L566.89,698.8 L566.12,703.8 L565.33,708.9 L564.53,713.9 L563.72,718.9 L562.89,723.9 L562.03,728.9 L561.17,733.9 L560.29,738.9 L559.39,743.9 L558.49,748.9 L557.56,753.9 L556.63,758.9 L555.68,763.9 L554.71,768.9 L553.73,773.9 L552.74,779.0 L551.73,784.0 L550.71,789.0 L549.68,794.0 L548.63,799.0 L547.57,804.0 L546.49,809.0 L545.37,814.0 L546.75,814.0 L547.87,809.0 L549.01,804.0 L550.13,799.0 L551.25,794.0 L552.34,789.0 L553.43,784.0 L554.50,779.0 L555.55,773.9 L556.59,768.9 L557.62,763.9 L558.63,758.9 L559.63,753.9 L560.62,748.9 L561.59,743.9 L562.55,738.9 L563.49,733.9 L564.42,728.9 L565.33,723.9 L566.24,718.9 L567.13,713.9 L568.01,708.9 L568.88,703.8 L569.73,698.8 L570.57,693.8 L571.40,688.8 L572.21,683.8 L573.00,678.8 L573.79,673.8 L574.55,668.8 L575.31,663.8 L576.05,658.8 L576.77,653.8 L577.49,648.8 L578.18,643.8 L578.87,638.8 L579.53,633.7 L580.15,628.7 L580.77,623.7 L581.36,618.7 L581.95,613.7 L582.52,608.7 L583.07,603.7 L583.61,598.7 L584.14,593.7 L584.65,588.7 L585.15,583.7 L585.64,578.7 L586.11,573.7 L586.56,568.7 L587.01,563.6 L587.43,558.6 L587.85,553.6 L588.25,548.6 L588.63,543.6 L588.99,538.6 L589.34,533.6 L589.68,528.6 L590.00,523.6 L590.31,518.6 L590.60,513.6 L590.88,508.6 L591.15,503.6 L591.40,498.6 L591.64,493.5 L591.86,488.5 L592.07,483.5 L592.27,478.5 L592.45,473.5 L592.61,468.5 L592.77,463.5 L592.90,458.5 L593.02,453.5 L593.13,448.5 L593.22,443.5 L593.30,438.5 L593.37,433.5 L593.42,428.5 L593.45,423.4 L593.47,418.4 L593.48,413.4 L593.48,408.4 L593.46,403.4 L593.42,398.4 L593.37,393.4 L593.31,388.4 L593.23,383.4 L593.14,378.4 L593.04,373.4 L592.90,368.4 L592.76,363.4 L592.60,358.4 L592.42,353.3 L592.24,348.3 L592.03,343.3 L591.82,338.3 L591.59,333.3 L591.34,328.3 L591.08,323.3 L590.81,318.3 L590.52,313.3 L590.22,308.3 L589.90,303.3 L589.57,298.3 L589.23,293.3 L588.87,288.3 L588.50,283.2 L588.11,278.2 L587.71,273.2 L587.29,268.2 L586.86,263.2 L586.41,258.2 L585.95,253.2 L585.47,248.2 L584.99,243.2 L584.48,238.2 L583.97,233.2 L583.44,228.2 L582.89,223.2 L582.33,218.2 L581.76,213.1 L581.17,208.1 L580.57,203.1 L579.95,198.1 L579.32,193.1 L578.68,188.1 L578.02,183.1 L577.34,178.1 L576.66,173.1 L575.95,168.1 L575.24,163.1 L574.51,158.1 L573.76,153.1 L573.00,148.1 L572.23,143.0 L571.45,138.0 L570.64,133.0 L569.83,128.0 L569.00,123.0 L568.16,118.0 L567.30,113.0 L566.45,108.0Z" fill="#fff"/>
<linearGradient id="ag12" gradientUnits="userSpaceOnUse" x1="0" y1="113" x2="0" y2="809"><stop offset="0.000" stop-color="rgb(255, 255, 0)"/><stop offset="0.125" stop-color="rgb(255, 255, 0)"/><stop offset="0.250" stop-color="rgb(255, 255, 0)"/><stop offset="0.375" stop-color="rgb(255, 255, 0)"/><stop offset="0.500" stop-color="rgb(255, 255, 0)"/><stop offset="0.625" stop-color="rgb(255, 255, 0)"/><stop offset="0.750" stop-color="rgb(255, 255, 0)"/><stop offset="0.875" stop-color="rgb(255, 255, 0)"/><stop offset="1.000" stop-color="rgb(255, 255, 0)"/></linearGradient>
<path d="M577.46,108.0 L578.31,113.0 L579.14,118.0 L579.95,123.0 L580.74,128.0 L581.52,133.0 L582.29,138.0 L583.05,143.0 L583.79,148.1 L584.51,153.1 L585.23,158.1 L585.93,163.1 L586.61,168.1 L587.28,173.1 L587.94,178.1 L588.58,183.1 L589.21,188.1 L589.83,193.1 L590.43,198.1 L591.02,203.1 L591.60,208.1 L592.16,213.1 L592.71,218.2 L593.24,223.2 L593.77,228.2 L594.27,233.2 L594.77,238.2 L595.25,243.2 L595.71,248.2 L596.16,253.2 L596.60,258.2 L597.03,263.2 L597.44,268.2 L597.83,273.2 L598.22,278.2 L598.59,283.2 L598.94,288.3 L599.28,293.3 L599.61,298.3 L599.92,303.3 L600.22,308.3 L600.51,313.3 L600.78,318.3 L601.04,323.3 L601.28,328.3 L601.51,333.3 L601.73,338.3 L601.93,343.3 L602.12,348.3 L602.30,353.3 L602.46,358.4 L602.60,363.4 L602.74,368.4 L602.86,373.4 L602.97,378.4 L603.07,383.4 L603.16,388.4 L603.24,393.4 L603.30,398.4 L603.35,403.4 L603.38,408.4 L603.40,413.4 L603.40,418.4 L603.40,423.4 L603.37,428.5 L603.34,433.5 L603.29,438.5 L603.22,443.5 L603.15,448.5 L603.06,453.5 L602.95,458.5 L602.83,463.5 L602.70,468.5 L602.56,473.5 L602.40,478.5 L602.23,483.5 L602.04,488.5 L601.84,493.5 L601.63,498.6 L601.40,503.6 L601.16,508.6 L600.91,513.6 L600.64,518.6 L600.36,523.6 L600.06,528.6 L599.75,533.6 L599.42,538.6 L599.09,543.6 L598.73,548.6 L598.37,553.6 L597.99,558.6 L597.60,563.6 L597.20,568.7 L596.78,573.7 L596.35,578.7 L595.90,583.7 L595.44,588.7 L594.97,593.7 L594.48,598.7 L593.98,603.7 L593.46,608.7 L592.93,613.7 L592.39,618.7 L591.83,623.7 L591.26,628.7 L590.67,633.7 L590.09,638.8 L589.50,643.8 L588.90,648.8 L588.28,653.8 L587.65,658.8 L587.00,663.8 L586.34,668.8 L585.67,673.8 L584.98,678.8 L584.28,683.8 L583.56,688.8 L582.83,693.8 L582.09,698.8 L581.33,703.8 L580.56,708.9 L579.78,713.9 L578.98,718.9 L578.16,723.9 L577.33,728.9 L576.49,733.9 L575.63,738.9 L574.76,743.9 L573.87,748.9 L572.97,753.9 L572.06,758.9 L571.13,763.9 L570.19,768.9 L569.24,773.9 L568.27,779.0 L567.28,784.0 L566.29,789.0 L565.28,794.0 L564.25,799.0 L563.21,804.0 L562.16,809.0 L561.07,814.0 L564.43,814.0 L565.52,809.0 L566.62,804.0 L567.70,799.0 L568.77,794.0 L569.83,789.0 L570.87,784.0 L571.90,779.0 L572.92,773.9 L573.92,768.9 L574.91,763.9 L575.89,758.9 L576.85,753.9 L577.79,748.9 L578.73,743.9 L579.64,738.9 L580.55,733.9 L581.44,728.9 L582.32,723.9 L583.18,718.9 L584.04,713.9 L584.88,708.9 L585.70,703.8 L586.52,698.8 L587.32,693.8 L588.10,688.8 L588.87,683.8 L589.63,678.8 L590.37,673.8 L591.10,668.8 L591.81,663.8 L592.52,658.8 L593.20,653.8 L593.88,648.8 L594.54,643.8 L595.18,638.8 L595.81,633.7 L596.41,628.7 L596.99,623.7 L597.56,618.7 L598.11,613.7 L598.65,608.7 L599.18,603.7 L599.69,598.7 L600.19,593.7 L600.67,588.7 L601.15,583.7 L601.60,578.7 L602.05,573.7 L602.48,568.7 L602.89,563.6 L603.29,558.6 L603.68,553.6 L604.06,548.6 L604.41,543.6 L604.76,538.6 L605.09,533.6 L605.40,528.6 L605.71,523.6 L605.99,518.6 L606.27,513.6 L606.53,508.6 L606.78,503.6 L607.01,498.6 L607.23,493.5 L607.43,488.5 L607.62,483.5 L607.80,478.5 L607.96,473.5 L608.11,468.5 L608.25,463.5 L608.37,458.5 L608.48,453.5 L608.57,448.5 L608.64,443.5 L608.71,438.5 L608.76,433.5 L608.79,428.5 L608.82,423.4 L608.82,418.4 L608.82,413.4 L608.80,408.4 L608.77,403.4 L608.72,398.4 L608.66,393.4 L608.58,388.4 L608.49,383.4 L608.39,378.4 L608.27,373.4 L608.13,368.4 L607.98,363.4 L607.81,358.4 L607.62,353.3 L607.43,348.3 L607.22,343.3 L606.99,338.3 L606.75,333.3 L606.50,328.3 L606.23,323.3 L605.95,318.3 L605.66,313.3 L605.35,308.3 L605.03,303.3 L604.70,298.3 L604.35,293.3 L603.98,288.3 L603.61,283.2 L603.21,278.2 L602.81,273.2 L602.39,268.2 L601.96,263.2 L601.51,258.2 L601.05,253.2 L600.58,248.2 L600.09,243.2 L599.59,238.2 L599.07,233.2 L598.54,228.2 L598.00,223.2 L597.44,218.2 L596.87,213.1 L596.28,208.1 L595.69,203.1 L595.07,198.1 L594.44,193.1 L593.80,188.1 L593.14,183.1 L592.47,178.1 L591.79,173.1 L591.09,168.1 L590.37,163.1 L589.65,158.1 L588.91,153.1 L588.15,148.1 L587.38,143.0 L586.60,138.0 L585.81,133.0 L585.00,128.0 L584.17,123.0 L583.34,118.0 L582.48,113.0 L581.63,108.0Z" fill="url(#ag12)"/>
<path d="M578.25,108.0 L579.10,113.0 L579.92,118.0 L580.72,123.0 L581.52,128.0 L582.29,133.0 L583.06,138.0 L583.81,143.0 L584.54,148.1 L585.26,153.1 L585.97,158.1 L586.67,163.1 L587.35,168.1 L588.01,173.1 L588.67,178.1 L589.31,183.1 L589.93,188.1 L590.54,193.1 L591.14,198.1 L591.73,203.1 L592.30,208.1 L592.86,213.1 L593.40,218.2 L593.93,223.2 L594.45,228.2 L594.96,233.2 L595.45,238.2 L595.92,243.2 L596.38,248.2 L596.83,253.2 L597.27,258.2 L597.69,263.2 L598.10,268.2 L598.49,273.2 L598.87,278.2 L599.23,283.2 L599.58,288.3 L599.92,293.3 L600.25,298.3 L600.56,303.3 L600.85,308.3 L601.13,313.3 L601.40,318.3 L601.66,323.3 L601.90,328.3 L602.12,333.3 L602.34,338.3 L602.53,343.3 L602.72,348.3 L602.89,353.3 L603.05,358.4 L603.19,363.4 L603.32,368.4 L603.44,373.4 L603.55,378.4 L603.65,383.4 L603.74,388.4 L603.82,393.4 L603.88,398.4 L603.93,403.4 L603.96,408.4 L603.98,413.4 L603.98,418.4 L603.98,423.4 L603.95,428.5 L603.92,433.5 L603.87,438.5 L603.80,443.5 L603.73,448.5 L603.64,453.5 L603.53,458.5 L603.41,463.5 L603.28,468.5 L603.14,473.5 L602.98,478.5 L602.81,483.5 L602.63,488.5 L602.43,493.5 L602.22,498.6 L601.99,503.6 L601.75,508.6 L601.50,513.6 L601.23,518.6 L600.95,523.6 L600.65,528.6 L600.34,533.6 L600.02,538.6 L599.68,543.6 L599.33,548.6 L598.97,553.6 L598.59,558.6 L598.20,563.6 L597.80,568.7 L597.38,573.7 L596.95,578.7 L596.51,583.7 L596.05,588.7 L595.58,593.7 L595.09,598.7 L594.59,603.7 L594.08,608.7 L593.55,613.7 L593.01,618.7 L592.45,623.7 L591.88,628.7 L591.30,633.7 L590.73,638.8 L590.15,643.8 L589.55,648.8 L588.94,653.8 L588.32,658.8 L587.68,663.8 L587.03,668.8 L586.37,673.8 L585.69,678.8 L584.99,683.8 L584.29,688.8 L583.57,693.8 L582.83,698.8 L582.09,703.8 L581.33,708.9 L580.55,713.9 L579.76,718.9 L578.96,723.9 L578.13,728.9 L577.30,733.9 L576.45,738.9 L575.58,743.9 L574.70,748.9 L573.81,753.9 L572.91,758.9 L571.99,763.9 L571.05,768.9 L570.10,773.9 L569.14,779.0 L568.17,784.0 L567.18,789.0 L566.18,794.0 L565.16,799.0 L564.13,804.0 L563.08,809.0 L562.00,814.0 L563.50,814.0 L564.59,809.0 L565.70,804.0 L566.79,799.0 L567.87,794.0 L568.94,789.0 L569.99,784.0 L571.03,779.0 L572.05,773.9 L573.06,768.9 L574.06,763.9 L575.04,758.9 L576.01,753.9 L576.96,748.9 L577.90,743.9 L578.83,738.9 L579.74,733.9 L580.64,728.9 L581.53,723.9 L582.40,718.9 L583.27,713.9 L584.11,708.9 L584.95,703.8 L585.77,698.8 L586.58,693.8 L587.37,688.8 L588.15,683.8 L588.92,678.8 L589.67,673.8 L590.41,668.8 L591.13,663.8 L591.84,658.8 L592.54,653.8 L593.22,648.8 L593.89,643.8 L594.55,638.8 L595.18,633.7 L595.78,628.7 L596.36,623.7 L596.93,618.7 L597.49,613.7 L598.03,608.7 L598.56,603.7 L599.08,598.7 L599.58,593.7 L600.06,588.7 L600.54,583.7 L601.00,578.7 L601.44,573.7 L601.87,568.7 L602.29,563.6 L602.69,558.6 L603.08,553.6 L603.46,548.6 L603.82,543.6 L604.16,538.6 L604.49,533.6 L604.81,528.6 L605.11,523.6 L605.40,518.6 L605.68,513.6 L605.94,508.6 L606.19,503.6 L606.42,498.6 L606.64,493.5 L606.85,488.5 L607.04,483.5 L607.22,478.5 L607.38,473.5 L607.53,468.5 L607.67,463.5 L607.79,458.5 L607.90,453.5 L607.99,448.5 L608.06,443.5 L608.13,438.5 L608.18,433.5 L608.21,428.5 L608.24,423.4 L608.24,418.4 L608.24,413.4 L608.22,408.4 L608.19,403.4 L608.14,398.4 L608.08,393.4 L608.00,388.4 L607.91,383.4 L607.81,378.4 L607.69,373.4 L607.55,368.4 L607.39,363.4 L607.22,358.4 L607.03,353.3 L606.83,348.3 L606.61,343.3 L606.39,338.3 L606.14,333.3 L605.89,328.3 L605.62,323.3 L605.33,318.3 L605.04,313.3 L604.72,308.3 L604.40,303.3 L604.06,298.3 L603.71,293.3 L603.34,288.3 L602.96,283.2 L602.56,278.2 L602.16,273.2 L601.73,268.2 L601.30,263.2 L600.85,258.2 L600.38,253.2 L599.90,248.2 L599.41,243.2 L598.91,238.2 L598.39,233.2 L597.85,228.2 L597.31,223.2 L596.75,218.2 L596.17,213.1 L595.58,208.1 L594.98,203.1 L594.36,198.1 L593.73,193.1 L593.08,188.1 L592.42,183.1 L591.74,178.1 L591.05,173.1 L590.35,168.1 L589.63,163.1 L588.90,158.1 L588.16,153.1 L587.40,148.1 L586.62,143.0 L585.84,138.0 L585.04,133.0 L584.22,128.0 L583.39,123.0 L582.55,118.0 L581.70,113.0 L580.84,108.0Z" fill="#fff"/>
<linearGradient id="ag13" gradientUnits="userSpaceOnUse" x1="0" y1="113" x2="0" y2="809"><stop offset="0.000" stop-color="rgb(255, 255, 0)"/><stop offset="0.125" stop-color="rgb(255, 255, 0)"/><stop offset="0.250" stop-color="rgb(255, 255, 0)"/><stop offset="0.375" stop-color="rgb(255, 255, 0)"/><stop offset="0.500" stop-color="rgb(255, 255, 0)"/><stop offset="0.625" stop-color="rgb(255, 255, 0)"/><stop offset="0.750" stop-color="rgb(255, 255, 0)"/><stop offset="0.875" stop-color="rgb(255, 255, 0)"/><stop offset="1.000" stop-color="rgb(255, 255, 0)"/></linearGradient>
<path d="M591.97,108.0 L592.81,113.0 L593.63,118.0 L594.43,123.0 L595.22,128.0 L595.99,133.0 L596.76,138.0 L597.50,143.0 L598.24,148.1 L598.96,153.1 L599.67,158.1 L600.36,163.1 L601.04,168.1 L601.71,173.1 L602.36,178.1 L603.00,183.1 L603.63,188.1 L604.24,193.1 L604.84,198.1 L605.42,203.1 L606.00,208.1 L606.55,213.1 L607.10,218.2 L607.63,223.2 L608.15,228.2 L608.65,233.2 L609.14,238.2 L609.62,243.2 L610.08,248.2 L610.53,253.2 L610.97,258.2 L611.39,263.2 L611.80,268.2 L612.19,273.2 L612.58,278.2 L612.94,283.2 L613.30,288.3 L613.65,293.3 L613.98,298.3 L614.30,303.3 L614.60,308.3 L614.90,313.3 L615.17,318.3 L615.44,323.3 L615.69,328.3 L615.93,333.3 L616.15,338.3 L616.36,343.3 L616.56,348.3 L616.74,353.3 L616.91,358.4 L617.07,363.4 L617.21,368.4 L617.34,373.4 L617.46,378.4 L617.57,383.4 L617.67,388.4 L617.75,393.4 L617.82,398.4 L617.88,403.4 L617.92,408.4 L617.95,413.4 L617.97,418.4 L617.97,423.4 L617.95,428.5 L617.93,433.5 L617.89,438.5 L617.84,443.5 L617.77,448.5 L617.69,453.5 L617.60,458.5 L617.49,463.5 L617.37,468.5 L617.24,473.5 L617.09,478.5 L616.93,483.5 L616.75,488.5 L616.56,493.5 L616.36,498.6 L616.15,503.6 L615.92,508.6 L615.67,513.6 L615.42,518.6 L615.15,523.6 L614.86,528.6 L614.57,533.6 L614.26,538.6 L613.93,543.6 L613.59,548.6 L613.25,553.6 L612.89,558.6 L612.52,563.6 L612.13,568.7 L611.73,573.7 L611.31,578.7 L610.89,583.7 L610.45,588.7 L609.99,593.7 L609.52,598.7 L609.04,603.7 L608.55,608.7 L608.04,613.7 L607.51,618.7 L606.98,623.7 L606.43,628.7 L605.87,633.7 L605.30,638.8 L604.73,643.8 L604.15,648.8 L603.55,653.8 L602.94,658.8 L602.31,663.8 L601.67,668.8 L601.02,673.8 L600.35,678.8 L599.67,683.8 L598.98,688.8 L598.27,693.8 L597.55,698.8 L596.82,703.8 L596.07,708.9 L595.31,713.9 L594.54,718.9 L593.75,723.9 L592.94,728.9 L592.12,733.9 L591.29,738.9 L590.45,743.9 L589.59,748.9 L588.71,753.9 L587.83,758.9 L586.93,763.9 L586.02,768.9 L585.09,773.9 L584.15,779.0 L583.19,784.0 L582.23,789.0 L581.24,794.0 L580.25,799.0 L579.24,804.0 L578.22,809.0 L577.16,814.0 L580.57,814.0 L581.62,809.0 L582.69,804.0 L583.74,799.0 L584.78,794.0 L585.81,789.0 L586.82,784.0 L587.82,779.0 L588.80,773.9 L589.77,768.9 L590.73,763.9 L591.67,758.9 L592.60,753.9 L593.52,748.9 L594.42,743.9 L595.31,738.9 L596.19,733.9 L597.05,728.9 L597.90,723.9 L598.74,718.9 L599.56,713.9 L600.37,708.9 L601.17,703.8 L601.96,698.8 L602.73,693.8 L603.48,688.8 L604.23,683.8 L604.95,678.8 L605.67,673.8 L606.37,668.8 L607.06,663.8 L607.74,658.8 L608.40,653.8 L609.05,648.8 L609.68,643.8 L610.30,638.8 L610.90,633.7 L611.48,628.7 L612.04,623.7 L612.59,618.7 L613.12,613.7 L613.64,608.7 L614.15,603.7 L614.64,598.7 L615.12,593.7 L615.58,588.7 L616.04,583.7 L616.47,578.7 L616.90,573.7 L617.31,568.7 L617.71,563.6 L618.09,558.6 L618.46,553.6 L618.82,548.6 L619.16,543.6 L619.48,538.6 L619.79,533.6 L620.09,528.6 L620.37,523.6 L620.64,518.6 L620.90,513.6 L621.14,508.6 L621.37,503.6 L621.59,498.6 L621.79,493.5 L621.98,488.5 L622.15,483.5 L622.32,478.5 L622.46,473.5 L622.60,468.5 L622.72,463.5 L622.83,458.5 L622.92,453.5 L623.00,448.5 L623.07,443.5 L623.12,438.5 L623.16,433.5 L623.18,428.5 L623.19,423.4 L623.19,418.4 L623.18,413.4 L623.15,408.4 L623.11,403.4 L623.05,398.4 L622.98,393.4 L622.90,388.4 L622.80,383.4 L622.69,378.4 L622.57,373.4 L622.42,368.4 L622.26,363.4 L622.09,358.4 L621.90,353.3 L621.70,348.3 L621.49,343.3 L621.26,338.3 L621.02,333.3 L620.77,328.3 L620.50,323.3 L620.22,318.3 L619.92,313.3 L619.61,308.3 L619.29,303.3 L618.96,298.3 L618.61,293.3 L618.24,288.3 L617.86,283.2 L617.47,278.2 L617.06,273.2 L616.63,268.2 L616.20,263.2 L615.75,258.2 L615.28,253.2 L614.81,248.2 L614.32,243.2 L613.81,238.2 L613.29,233.2 L612.76,228.2 L612.22,223.2 L611.66,218.2 L611.09,213.1 L610.50,208.1 L609.90,203.1 L609.29,198.1 L608.66,193.1 L608.02,188.1 L607.37,183.1 L606.70,178.1 L606.02,173.1 L605.33,168.1 L604.62,163.1 L603.90,158.1 L603.16,153.1 L602.41,148.1 L601.65,143.0 L600.87,138.0 L600.09,133.0 L599.28,128.0 L598.47,123.0 L597.64,118.0 L596.79,113.0 L595.95,108.0Z" fill="url(#ag13)"/>
<path d="M592.79,108.0 L593.63,113.0 L594.44,118.0 L595.24,123.0 L596.03,128.0 L596.80,133.0 L597.55,138.0 L598.30,143.0 L599.03,148.1 L599.74,153.1 L600.45,158.1 L601.14,163.1 L601.81,168.1 L602.47,173.1 L603.12,178.1 L603.76,183.1 L604.38,188.1 L604.99,193.1 L605.58,198.1 L606.16,203.1 L606.73,208.1 L607.28,213.1 L607.82,218.2 L608.35,223.2 L608.86,228.2 L609.36,233.2 L609.85,238.2 L610.32,243.2 L610.78,248.2 L611.22,253.2 L611.65,258.2 L612.07,263.2 L612.48,268.2 L612.87,273.2 L613.24,278.2 L613.61,283.2 L613.96,288.3 L614.30,293.3 L614.63,298.3 L614.95,303.3 L615.25,308.3 L615.54,313.3 L615.82,318.3 L616.08,323.3 L616.33,328.3 L616.56,333.3 L616.78,338.3 L616.99,343.3 L617.19,348.3 L617.37,353.3 L617.53,358.4 L617.69,363.4 L617.83,368.4 L617.95,373.4 L618.08,378.4 L618.19,383.4 L618.28,388.4 L618.37,393.4 L618.44,398.4 L618.49,403.4 L618.53,408.4 L618.56,413.4 L618.58,418.4 L618.58,423.4 L618.57,428.5 L618.54,433.5 L618.50,438.5 L618.45,443.5 L618.38,448.5 L618.30,453.5 L618.21,458.5 L618.10,463.5 L617.98,468.5 L617.85,473.5 L617.70,478.5 L617.54,483.5 L617.36,488.5 L617.18,493.5 L616.97,498.6 L616.76,503.6 L616.53,508.6 L616.29,513.6 L616.03,518.6 L615.76,523.6 L615.48,528.6 L615.18,533.6 L614.87,538.6 L614.54,543.6 L614.21,548.6 L613.86,553.6 L613.50,558.6 L613.13,563.6 L612.75,568.7 L612.35,573.7 L611.94,578.7 L611.51,583.7 L611.07,588.7 L610.62,593.7 L610.15,598.7 L609.67,603.7 L609.18,608.7 L608.67,613.7 L608.15,618.7 L607.62,623.7 L607.07,628.7 L606.51,633.7 L605.95,638.8 L605.39,643.8 L604.81,648.8 L604.22,653.8 L603.62,658.8 L603.00,663.8 L602.37,668.8 L601.73,673.8 L601.07,678.8 L600.40,683.8 L599.71,688.8 L599.02,693.8 L598.30,698.8 L597.58,703.8 L596.84,708.9 L596.09,713.9 L595.32,718.9 L594.54,723.9 L593.74,728.9 L592.93,733.9 L592.10,738.9 L591.27,743.9 L590.41,748.9 L589.55,753.9 L588.67,758.9 L587.78,763.9 L586.87,768.9 L585.95,773.9 L585.02,779.0 L584.07,784.0 L583.11,789.0 L582.14,794.0 L581.15,799.0 L580.15,804.0 L579.14,809.0 L578.08,814.0 L579.65,814.0 L580.71,809.0 L581.78,804.0 L582.84,799.0 L583.89,794.0 L584.92,789.0 L585.94,784.0 L586.95,779.0 L587.94,773.9 L588.92,768.9 L589.88,763.9 L590.83,758.9 L591.77,753.9 L592.69,748.9 L593.60,743.9 L594.50,738.9 L595.39,733.9 L596.26,728.9 L597.11,723.9 L597.96,718.9 L598.79,713.9 L599.61,708.9 L600.41,703.8 L601.21,698.8 L601.98,693.8 L602.75,688.8 L603.50,683.8 L604.24,678.8 L604.96,673.8 L605.67,668.8 L606.37,663.8 L607.05,658.8 L607.72,653.8 L608.38,648.8 L609.02,643.8 L609.65,638.8 L610.26,633.7 L610.84,628.7 L611.40,623.7 L611.95,618.7 L612.48,613.7 L613.01,608.7 L613.51,603.7 L614.01,598.7 L614.49,593.7 L614.96,588.7 L615.41,583.7 L615.85,578.7 L616.28,573.7 L616.69,568.7 L617.09,563.6 L617.48,558.6 L617.85,553.6 L618.21,548.6 L618.55,543.6 L618.87,538.6 L619.18,533.6 L619.48,528.6 L619.76,523.6 L620.03,518.6 L620.29,513.6 L620.53,508.6 L620.76,503.6 L620.98,498.6 L621.18,493.5 L621.37,488.5 L621.54,483.5 L621.70,478.5 L621.85,473.5 L621.99,468.5 L622.11,463.5 L622.21,458.5 L622.31,453.5 L622.39,448.5 L622.45,443.5 L622.51,438.5 L622.55,433.5 L622.57,428.5 L622.58,423.4 L622.58,418.4 L622.57,413.4 L622.54,408.4 L622.50,403.4 L622.44,398.4 L622.37,393.4 L622.29,388.4 L622.19,383.4 L622.08,378.4 L621.95,373.4 L621.81,368.4 L621.64,363.4 L621.47,358.4 L621.28,353.3 L621.08,348.3 L620.86,343.3 L620.63,338.3 L620.39,333.3 L620.13,328.3 L619.86,323.3 L619.57,318.3 L619.28,313.3 L618.97,308.3 L618.64,303.3 L618.30,298.3 L617.95,293.3 L617.58,288.3 L617.20,283.2 L616.80,278.2 L616.38,273.2 L615.96,268.2 L615.52,263.2 L615.06,258.2 L614.59,253.2 L614.11,248.2 L613.62,243.2 L613.11,238.2 L612.59,233.2 L612.05,228.2 L611.50,223.2 L610.94,218.2 L610.36,213.1 L609.77,208.1 L609.17,203.1 L608.55,198.1 L607.92,193.1 L607.27,188.1 L606.61,183.1 L605.94,178.1 L605.26,173.1 L604.56,168.1 L603.84,163.1 L603.12,158.1 L602.38,153.1 L601.62,148.1 L600.86,143.0 L600.08,138.0 L599.28,133.0 L598.48,128.0 L597.65,123.0 L596.82,118.0 L595.97,113.0 L595.13,108.0Z" fill="#fff"/>
<linearGradient id="ag14" gradientUnits="userSpaceOnUse" x1="0" y1="113" x2="0" y2="809"><stop offset="0.000" stop-color="rgb(255, 94, 0)"/><stop offset="0.125" stop-color="rgb(255, 94, 0)"/><stop offset="0.250" stop-color="rgb(255, 129, 0)"/><stop offset="0.375" stop-color="rgb(255, 207, 0)"/><stop offset="0.500" stop-color="rgb(255, 255, 0)"/><stop offset="0.625" stop-color="rgb(255, 255, 0)"/><stop offset="0.750" stop-color="rgb(255, 255, 0)"/><stop offset="0.875" stop-color="rgb(255, 255, 0)"/><stop offset="1.000" stop-color="rgb(255, 255, 0)"/></linearGradient>
<path d="M606.90,108.0 L607.75,113.0 L608.59,118.0 L609.42,123.0 L610.23,128.0 L611.03,133.0 L611.81,138.0 L612.58,143.0 L613.34,148.1 L614.09,153.1 L614.82,158.1 L615.53,163.1 L616.24,168.1 L616.93,173.1 L617.60,178.1 L618.27,183.1 L618.92,188.1 L619.55,193.1 L620.18,198.1 L620.78,203.1 L621.36,208.1 L621.93,213.1 L622.48,218.2 L623.03,223.2 L623.55,228.2 L624.07,233.2 L624.57,238.2 L625.06,243.2 L625.53,248.2 L625.99,253.2 L626.44,258.2 L626.87,263.2 L627.29,268.2 L627.70,273.2 L628.09,278.2 L628.47,283.2 L628.84,288.3 L629.17,293.3 L629.50,298.3 L629.80,303.3 L630.10,308.3 L630.38,313.3 L630.65,318.3 L630.91,323.3 L631.15,328.3 L631.38,333.3 L631.59,338.3 L631.79,343.3 L631.98,348.3 L632.15,353.3 L632.31,358.4 L632.46,363.4 L632.60,368.4 L632.72,373.4 L632.83,378.4 L632.93,383.4 L633.02,388.4 L633.09,393.4 L633.15,398.4 L633.20,403.4 L633.24,408.4 L633.26,413.4 L633.26,418.4 L633.26,423.4 L633.24,428.5 L633.20,433.5 L633.16,438.5 L633.10,443.5 L633.02,448.5 L632.93,453.5 L632.83,458.5 L632.72,463.5 L632.59,468.5 L632.44,473.5 L632.29,478.5 L632.11,483.5 L631.93,488.5 L631.73,493.5 L631.52,498.6 L631.29,503.6 L631.06,508.6 L630.80,513.6 L630.54,518.6 L630.26,523.6 L629.97,528.6 L629.66,533.6 L629.34,538.6 L629.01,543.6 L628.66,548.6 L628.31,553.6 L627.94,558.6 L627.56,563.6 L627.17,568.7 L626.77,573.7 L626.35,578.7 L625.91,583.7 L625.47,588.7 L625.01,593.7 L624.53,598.7 L624.05,603.7 L623.55,608.7 L623.03,613.7 L622.51,618.7 L621.96,623.7 L621.41,628.7 L620.84,633.7 L620.29,638.8 L619.73,643.8 L619.16,648.8 L618.57,653.8 L617.97,658.8 L617.36,663.8 L616.73,668.8 L616.09,673.8 L615.44,678.8 L614.77,683.8 L614.09,688.8 L613.40,693.8 L612.69,698.8 L611.97,703.8 L611.23,708.9 L610.49,713.9 L609.73,718.9 L608.95,723.9 L608.17,728.9 L607.37,733.9 L606.55,738.9 L605.73,743.9 L604.89,748.9 L604.03,753.9 L603.17,758.9 L602.29,763.9 L601.39,768.9 L600.49,773.9 L599.57,779.0 L598.63,784.0 L597.68,789.0 L596.72,794.0 L595.75,799.0 L594.76,804.0 L593.76,809.0 L592.72,814.0 L596.13,814.0 L597.16,809.0 L598.21,804.0 L599.24,799.0 L600.26,794.0 L601.27,789.0 L602.26,784.0 L603.24,779.0 L604.20,773.9 L605.15,768.9 L606.09,763.9 L607.01,758.9 L607.93,753.9 L608.82,748.9 L609.71,743.9 L610.58,738.9 L611.43,733.9 L612.28,728.9 L613.11,723.9 L613.92,718.9 L614.72,713.9 L615.51,708.9 L616.28,703.8 L617.04,698.8 L617.79,693.8 L618.52,688.8 L619.24,683.8 L619.94,678.8 L620.64,673.8 L621.31,668.8 L621.98,663.8 L622.63,658.8 L623.27,653.8 L623.89,648.8 L624.51,643.8 L625.10,638.8 L625.68,633.7 L626.21,628.7 L626.73,623.7 L627.24,618.7 L627.74,613.7 L628.22,608.7 L628.68,603.7 L629.14,598.7 L629.58,593.7 L630.00,588.7 L630.42,583.7 L630.82,578.7 L631.20,573.7 L631.58,568.7 L631.94,563.6 L632.28,558.6 L632.61,553.6 L632.93,548.6 L633.23,543.6 L633.51,538.6 L633.78,533.6 L634.04,528.6 L634.28,523.6 L634.51,518.6 L634.73,513.6 L634.93,508.6 L635.12,503.6 L635.30,498.6 L635.46,493.5 L635.61,488.5 L635.74,483.5 L635.86,478.5 L635.97,473.5 L636.07,468.5 L636.15,463.5 L636.22,458.5 L636.27,453.5 L636.32,448.5 L636.35,443.5 L636.36,438.5 L636.36,433.5 L636.35,428.5 L636.33,423.4 L636.29,418.4 L636.24,413.4 L636.18,408.4 L636.10,403.4 L636.01,398.4 L635.90,393.4 L635.78,388.4 L635.65,383.4 L635.50,378.4 L635.34,373.4 L635.16,368.4 L634.97,363.4 L634.76,358.4 L634.54,353.3 L634.30,348.3 L634.06,343.3 L633.79,338.3 L633.52,333.3 L633.23,328.3 L632.93,323.3 L632.61,318.3 L632.28,313.3 L631.94,308.3 L631.58,303.3 L631.21,298.3 L630.83,293.3 L630.43,288.3 L630.03,283.2 L629.63,278.2 L629.21,273.2 L628.77,268.2 L628.32,263.2 L627.86,258.2 L627.39,253.2 L626.90,248.2 L626.40,243.2 L625.88,238.2 L625.35,233.2 L624.81,228.2 L624.25,223.2 L623.69,218.2 L623.10,213.1 L622.51,208.1 L621.90,203.1 L621.28,198.1 L620.65,193.1 L620.02,188.1 L619.37,183.1 L618.70,178.1 L618.03,173.1 L617.34,168.1 L616.63,163.1 L615.92,158.1 L615.19,153.1 L614.44,148.1 L613.68,143.0 L612.91,138.0 L612.13,133.0 L611.33,128.0 L610.52,123.0 L609.69,118.0 L608.85,113.0 L608.00,108.0Z" fill="url(#ag14)"/>
<path d="M607.45,108.0 L608.30,113.0 L609.14,118.0 L609.97,123.0 L610.78,128.0 L611.58,133.0 L612.36,138.0 L613.13,143.0 L613.89,148.1 L614.64,153.1 L615.37,158.1 L616.08,163.1 L616.79,168.1 L617.48,173.1 L618.15,178.1 L618.82,183.1 L619.47,188.1 L620.10,193.1 L620.73,198.1 L621.34,203.1 L621.93,208.1 L622.52,213.1 L623.09,218.2 L623.64,223.2 L624.18,228.2 L624.71,233.2 L625.23,238.2 L625.73,243.2 L626.22,248.2 L626.69,253.2 L627.15,258.2 L627.60,263.2 L628.03,268.2 L628.45,273.2 L628.86,278.2 L629.25,283.2 L629.63,288.3 L630.00,293.3 L630.35,298.3 L630.69,303.3 L631.02,308.3 L631.33,313.3 L631.63,318.3 L631.92,323.3 L632.19,328.3 L632.45,333.3 L632.69,338.3 L632.90,343.3 L633.08,348.3 L633.24,353.3 L633.39,358.4 L633.53,363.4 L633.65,368.4 L633.76,373.4 L633.87,378.4 L633.96,383.4 L634.04,388.4 L634.11,393.4 L634.16,398.4 L634.20,403.4 L634.23,408.4 L634.24,413.4 L634.24,418.4 L634.23,423.4 L634.20,428.5 L634.16,433.5 L634.11,438.5 L634.04,443.5 L633.96,448.5 L633.86,453.5 L633.75,458.5 L633.63,463.5 L633.49,468.5 L633.34,473.5 L633.17,478.5 L632.99,483.5 L632.80,488.5 L632.59,493.5 L632.37,498.6 L632.14,503.6 L631.89,508.6 L631.63,513.6 L631.36,518.6 L631.07,523.6 L630.77,528.6 L630.45,533.6 L630.13,538.6 L629.79,543.6 L629.43,548.6 L629.07,553.6 L628.70,558.6 L628.32,563.6 L627.92,568.7 L627.51,573.7 L627.08,578.7 L626.65,583.7 L626.19,588.7 L625.73,593.7 L625.25,598.7 L624.76,603.7 L624.25,608.7 L623.73,613.7 L623.20,618.7 L622.65,623.7 L622.09,628.7 L621.52,633.7 L620.97,638.8 L620.42,643.8 L619.85,648.8 L619.27,653.8 L618.68,658.8 L618.07,663.8 L617.45,668.8 L616.82,673.8 L616.17,678.8 L615.51,683.8 L614.84,688.8 L614.15,693.8 L613.45,698.8 L612.73,703.8 L612.01,708.9 L611.26,713.9 L610.51,718.9 L609.74,723.9 L608.96,728.9 L608.17,733.9 L607.37,738.9 L606.55,743.9 L605.72,748.9 L604.87,753.9 L604.01,758.9 L603.14,763.9 L602.25,768.9 L601.35,773.9 L600.44,779.0 L599.51,784.0 L598.57,789.0 L597.62,794.0 L596.65,799.0 L595.67,804.0 L594.68,809.0 L593.64,814.0 L595.21,814.0 L596.25,809.0 L597.30,804.0 L598.34,799.0 L599.37,794.0 L600.38,789.0 L601.38,784.0 L602.36,779.0 L603.34,773.9 L604.30,768.9 L605.24,763.9 L606.17,758.9 L607.09,753.9 L607.99,748.9 L608.89,743.9 L609.76,738.9 L610.63,733.9 L611.48,728.9 L612.32,723.9 L613.14,718.9 L613.94,713.9 L614.74,708.9 L615.52,703.8 L616.28,698.8 L617.04,693.8 L617.77,688.8 L618.50,683.8 L619.21,678.8 L619.91,673.8 L620.60,668.8 L621.27,663.8 L621.92,658.8 L622.57,653.8 L623.20,648.8 L623.82,643.8 L624.42,638.8 L625.00,633.7 L625.53,628.7 L626.05,623.7 L626.55,618.7 L627.04,613.7 L627.51,608.7 L627.97,603.7 L628.42,598.7 L628.86,593.7 L629.28,588.7 L629.69,583.7 L630.08,578.7 L630.46,573.7 L630.83,568.7 L631.18,563.6 L631.52,558.6 L631.85,553.6 L632.16,548.6 L632.45,543.6 L632.73,538.6 L632.99,533.6 L633.24,528.6 L633.47,523.6 L633.69,518.6 L633.90,513.6 L634.09,508.6 L634.28,503.6 L634.44,498.6 L634.60,493.5 L634.74,488.5 L634.86,483.5 L634.98,478.5 L635.08,473.5 L635.16,468.5 L635.23,463.5 L635.30,458.5 L635.35,453.5 L635.38,448.5 L635.40,443.5 L635.41,438.5 L635.41,433.5 L635.39,428.5 L635.36,423.4 L635.31,418.4 L635.25,413.4 L635.18,408.4 L635.10,403.4 L635.00,398.4 L634.89,393.4 L634.76,388.4 L634.62,383.4 L634.47,378.4 L634.30,373.4 L634.11,368.4 L633.90,363.4 L633.68,358.4 L633.45,353.3 L633.21,348.3 L632.95,343.3 L632.69,338.3 L632.45,333.3 L632.19,328.3 L631.92,323.3 L631.63,318.3 L631.33,313.3 L631.02,308.3 L630.69,303.3 L630.35,298.3 L630.00,293.3 L629.63,288.3 L629.25,283.2 L628.86,278.2 L628.45,273.2 L628.03,268.2 L627.60,263.2 L627.15,258.2 L626.69,253.2 L626.22,248.2 L625.73,243.2 L625.23,238.2 L624.71,233.2 L624.18,228.2 L623.64,223.2 L623.09,218.2 L622.52,213.1 L621.93,208.1 L621.34,203.1 L620.73,198.1 L620.10,193.1 L619.47,188.1 L618.82,183.1 L618.15,178.1 L617.48,173.1 L616.79,168.1 L616.08,163.1 L615.37,158.1 L614.64,153.1 L613.89,148.1 L613.13,143.0 L612.36,138.0 L611.58,133.0 L610.78,128.0 L609.97,123.0 L609.14,118.0 L608.30,113.0 L607.45,108.0Z" fill="#fff"/>
<rect x="379.9" y="168.2" width="1.6" height="1.6" fill="#ffff40"/>
<rect x="528.3" y="190.2" width="1.6" height="1.6" fill="#ffff80"/>
<rect x="666.3" y="291.6" width="1.6" height="1.6" fill="#ffffff"/>
<rect x="471.4" y="515.2" width="1.6" height="1.6" fill="#ffff60"/>
<rect x="408.4" y="615.5" width="1.6" height="1.6" fill="#ffff40"/>
<rect x="437.7" y="637.6" width="1.6" height="1.6" fill="#ffff40"/>
<rect x="597.6" y="777.7" width="1.6" height="1.6" fill="#ffffff"/>
</g>
<line x1="493.4" y1="106" x2="493.4" y2="809.0" stroke="#0000ff" stroke-width="1.1"/>
<line x1="306" y1="461.5" x2="681" y2="461.5" stroke="#0000ff" stroke-width="1.1"/>
<rect x="310.0" y="113.0" width="366.0" height="696.0" fill="none" stroke="#000" stroke-width="1.5"/>
<line x1="303.0" y1="809.00" x2="310.0" y2="809.00" stroke="#000" stroke-width="1.5"/>
<text x="289.68" y="812.60" font-size="10.30" textLength="5.72" lengthAdjust="spacingAndGlyphs" fill="#000">0</text>
<line x1="303.0" y1="722.00" x2="310.0" y2="722.00" stroke="#000" stroke-width="1.5"/>
<text x="277.31" y="725.60" font-size="10.30" textLength="18.12" lengthAdjust="spacingAndGlyphs" fill="#000">500</text>
<line x1="303.0" y1="635.00" x2="310.0" y2="635.00" stroke="#000" stroke-width="1.5"/>
<text x="270.72" y="638.60" font-size="10.30" textLength="24.71" lengthAdjust="spacingAndGlyphs" fill="#000">1000</text>
<line x1="303.0" y1="548.00" x2="310.0" y2="548.00" stroke="#000" stroke-width="1.5"/>
<text x="270.72" y="551.60" font-size="10.30" textLength="24.71" lengthAdjust="spacingAndGlyphs" fill="#000">1500</text>
<line x1="303.0" y1="461.00" x2="310.0" y2="461.00" stroke="#000" stroke-width="1.5"/>
<text x="271.02" y="464.60" font-size="10.30" textLength="24.41" lengthAdjust="spacingAndGlyphs" fill="#000">2000</text>
<line x1="303.0" y1="374.00" x2="310.0" y2="374.00" stroke="#000" stroke-width="1.5"/>
<text x="271.02" y="377.60" font-size="10.30" textLength="24.41" lengthAdjust="spacingAndGlyphs" fill="#000">2500</text>
<line x1="303.0" y1="287.00" x2="310.0" y2="287.00" stroke="#000" stroke-width="1.5"/>
<text x="271.15" y="290.60" font-size="10.30" textLength="24.27" lengthAdjust="spacingAndGlyphs" fill="#000">3000</text>
<line x1="303.0" y1="200.00" x2="310.0" y2="200.00" stroke="#000" stroke-width="1.5"/>
<text x="271.15" y="203.60" font-size="10.30" textLength="24.27" lengthAdjust="spacingAndGlyphs" fill="#000">3500</text>
<line x1="303.0" y1="113.00" x2="310.0" y2="113.00" stroke="#000" stroke-width="1.5"/>
<text x="271.32" y="116.60" font-size="10.30" textLength="24.10" lengthAdjust="spacingAndGlyphs" fill="#000">4000</text>
<line x1="310.00" y1="809.0" x2="310.00" y2="816.0" stroke="#000" stroke-width="1.5"/>
<text x="307.14" y="832.10" font-size="10.30" textLength="5.72" lengthAdjust="spacingAndGlyphs" fill="#000">0</text>
<line x1="353.45" y1="809.0" x2="353.45" y2="816.0" stroke="#000" stroke-width="1.5"/>
<text x="344.27" y="832.10" font-size="10.30" textLength="18.24" lengthAdjust="spacingAndGlyphs" fill="#000">250</text>
<line x1="396.89" y1="809.0" x2="396.89" y2="816.0" stroke="#000" stroke-width="1.5"/>
<text x="387.83" y="832.10" font-size="10.30" textLength="18.12" lengthAdjust="spacingAndGlyphs" fill="#000">500</text>
<line x1="440.34" y1="809.0" x2="440.34" y2="816.0" stroke="#000" stroke-width="1.5"/>
<text x="431.15" y="832.10" font-size="10.30" textLength="18.25" lengthAdjust="spacingAndGlyphs" fill="#000">750</text>
<line x1="483.79" y1="809.0" x2="483.79" y2="816.0" stroke="#000" stroke-width="1.5"/>
<text x="471.23" y="832.10" font-size="10.30" textLength="24.71" lengthAdjust="spacingAndGlyphs" fill="#000">1000</text>
<line x1="527.24" y1="809.0" x2="527.24" y2="816.0" stroke="#000" stroke-width="1.5"/>
<text x="514.68" y="832.10" font-size="10.30" textLength="24.71" lengthAdjust="spacingAndGlyphs" fill="#000">1250</text>
<line x1="570.68" y1="809.0" x2="570.68" y2="816.0" stroke="#000" stroke-width="1.5"/>
<text x="558.12" y="832.10" font-size="10.30" textLength="24.71" lengthAdjust="spacingAndGlyphs" fill="#000">1500</text>
<line x1="614.13" y1="809.0" x2="614.13" y2="816.0" stroke="#000" stroke-width="1.5"/>
<text x="601.57" y="832.10" font-size="10.30" textLength="24.71" lengthAdjust="spacingAndGlyphs" fill="#000">1750</text>
<line x1="657.58" y1="809.0" x2="657.58" y2="816.0" stroke="#000" stroke-width="1.5"/>
<text x="645.31" y="832.10" font-size="10.30" textLength="24.41" lengthAdjust="spacingAndGlyphs" fill="#000">2000</text>
<text x="490.37" y="849.40" font-size="10.30" textLength="6.74" lengthAdjust="spacingAndGlyphs" fill="#000">X</text>
<text transform="translate(258.00,464.43) rotate(-90)" x="0" y="0" font-size="10.30" textLength="6.96" lengthAdjust="spacingAndGlyphs">Y</text>
<rect x="712.0" y="113.0" width="35.0" height="696.0" fill="url(#hot)"/>
<rect x="712.0" y="113.0" width="35.0" height="696.0" fill="none" stroke="#000" stroke-width="1.5"/>
<line x1="747.0" y1="736.10" x2="754.0" y2="736.10" stroke="#000" stroke-width="1.5"/>
<text x="762.04" y="739.70" font-size="10.30" textLength="18.25" lengthAdjust="spacingAndGlyphs" fill="#000">700</text>
<line x1="747.0" y1="625.24" x2="754.0" y2="625.24" stroke="#000" stroke-width="1.5"/>
<text x="762.13" y="628.84" font-size="10.30" textLength="18.16" lengthAdjust="spacingAndGlyphs" fill="#000">800</text>
<line x1="747.0" y1="514.38" x2="754.0" y2="514.38" stroke="#000" stroke-width="1.5"/>
<text x="762.09" y="517.98" font-size="10.30" textLength="18.20" lengthAdjust="spacingAndGlyphs" fill="#000">900</text>
<line x1="747.0" y1="403.52" x2="754.0" y2="403.52" stroke="#000" stroke-width="1.5"/>
<text x="761.75" y="407.12" font-size="10.30" textLength="24.71" lengthAdjust="spacingAndGlyphs" fill="#000">1000</text>
<line x1="747.0" y1="292.66" x2="754.0" y2="292.66" stroke="#000" stroke-width="1.5"/>
<text x="761.75" y="296.26" font-size="10.30" textLength="24.71" lengthAdjust="spacingAndGlyphs" fill="#000">1100</text>
<line x1="747.0" y1="181.80" x2="754.0" y2="181.80" stroke="#000" stroke-width="1.5"/>
<text x="761.75" y="185.40" font-size="10.30" textLength="24.71" lengthAdjust="spacingAndGlyphs" fill="#000">1200</text>
<rect x="911.0" y="113.0" width="274.20000000000005" height="119.80000000000001" fill="none" stroke="#000" stroke-width="1.5"/>
<line x1="904.0" y1="232.80" x2="911.0" y2="232.80" stroke="#000" stroke-width="1.5"/>
<text x="890.88" y="236.40" font-size="10.30" textLength="5.72" lengthAdjust="spacingAndGlyphs" fill="#000">0</text>
<line x1="904.0" y1="199.64" x2="911.0" y2="199.64" stroke="#000" stroke-width="1.5"/>
<text x="890.74" y="203.24" font-size="10.30" textLength="6.01" lengthAdjust="spacingAndGlyphs" fill="#000">2</text>
<line x1="904.0" y1="166.48" x2="911.0" y2="166.48" stroke="#000" stroke-width="1.5"/>
<text x="891.06" y="170.08" font-size="10.30" textLength="5.43" lengthAdjust="spacingAndGlyphs" fill="#000">4</text>
<line x1="904.0" y1="133.32" x2="911.0" y2="133.32" stroke="#000" stroke-width="1.5"/>
<text x="890.74" y="136.92" font-size="10.30" textLength="5.93" lengthAdjust="spacingAndGlyphs" fill="#000">6</text>
<line x1="934.20" y1="232.8" x2="934.20" y2="239.8" stroke="#000" stroke-width="1.5"/>
<text x="931.34" y="255.90" font-size="10.30" textLength="5.72" lengthAdjust="spacingAndGlyphs" fill="#000">0</text>
<line x1="973.63" y1="232.8" x2="973.63" y2="239.8" stroke="#000" stroke-width="1.5"/>
<line x1="1013.06" y1="232.8" x2="1013.06" y2="239.8" stroke="#000" stroke-width="1.5"/>
<text x="997.71" y="255.90" font-size="10.30" textLength="30.58" lengthAdjust="spacingAndGlyphs" fill="#000">20000</text>
<line x1="1052.49" y1="232.8" x2="1052.49" y2="239.8" stroke="#000" stroke-width="1.5"/>
<line x1="1091.92" y1="232.8" x2="1091.92" y2="239.8" stroke="#000" stroke-width="1.5"/>
<text x="1076.87" y="255.90" font-size="10.30" textLength="30.28" lengthAdjust="spacingAndGlyphs" fill="#000">40000</text>
<line x1="1131.35" y1="232.8" x2="1131.35" y2="239.8" stroke="#000" stroke-width="1.5"/>
<line x1="1170.78" y1="232.8" x2="1170.78" y2="239.8" stroke="#000" stroke-width="1.5"/>
<text x="1155.42" y="255.90" font-size="10.30" textLength="30.59" lengthAdjust="spacingAndGlyphs" fill="#000">60000</text>
<polyline points="929.8,232.8 929.8,118.7 936.0,118.7 936.0,133.6 940.9,133.6 940.9,144.8 946.9,144.8 946.9,157.9 952.9,157.9 952.9,232.8" fill="none" stroke="#0000ff" stroke-width="1.5"/>
<line x1="911.0" y1="232.5" x2="1185.2" y2="232.5" stroke="#000060" stroke-width="1.5"/>
<line x1="929.8" y1="232.5" x2="952.9" y2="232.5" stroke="#111" stroke-width="1.5"/>
<text x="1030.81" y="273.60" font-size="10.30" textLength="34.11" lengthAdjust="spacingAndGlyphs" fill="#000">counts</text>
<text transform="translate(880.00,210.41) rotate(-90)" x="0" y="0" font-size="10.30" textLength="72.23" lengthAdjust="spacingAndGlyphs">log frequency</text>
<text transform="translate(1193.50,127.25) rotate(90)" x="0" y="0" font-size="10.30" textLength="94.81" lengthAdjust="spacingAndGlyphs">histogram (detail)</text>
<rect x="911.0" y="284.6" width="274.20000000000005" height="120.19999999999999" fill="none" stroke="#000" stroke-width="1.5"/>
<line x1="904.0" y1="404.80" x2="911.0" y2="404.80" stroke="#000" stroke-width="1.5"/>
<text x="890.88" y="408.40" font-size="10.30" textLength="5.72" lengthAdjust="spacingAndGlyphs" fill="#000">0</text>
<line x1="904.0" y1="371.60" x2="911.0" y2="371.60" stroke="#000" stroke-width="1.5"/>
<text x="890.74" y="375.20" font-size="10.30" textLength="6.01" lengthAdjust="spacingAndGlyphs" fill="#000">2</text>
<line x1="904.0" y1="338.40" x2="911.0" y2="338.40" stroke="#000" stroke-width="1.5"/>
<text x="891.06" y="342.00" font-size="10.30" textLength="5.43" lengthAdjust="spacingAndGlyphs" fill="#000">4</text>
<line x1="904.0" y1="305.20" x2="911.0" y2="305.20" stroke="#000" stroke-width="1.5"/>
<text x="890.74" y="308.80" font-size="10.30" textLength="5.93" lengthAdjust="spacingAndGlyphs" fill="#000">6</text>
<line x1="929.00" y1="404.8" x2="929.00" y2="411.8" stroke="#000" stroke-width="1.5"/>
<text x="926.14" y="427.90" font-size="10.30" textLength="5.72" lengthAdjust="spacingAndGlyphs" fill="#000">0</text>
<line x1="966.27" y1="404.8" x2="966.27" y2="411.8" stroke="#000" stroke-width="1.5"/>
<line x1="1003.54" y1="404.8" x2="1003.54" y2="411.8" stroke="#000" stroke-width="1.5"/>
<text x="988.19" y="427.90" font-size="10.30" textLength="30.58" lengthAdjust="spacingAndGlyphs" fill="#000">20000</text>
<line x1="1040.81" y1="404.8" x2="1040.81" y2="411.8" stroke="#000" stroke-width="1.5"/>
<line x1="1078.08" y1="404.8" x2="1078.08" y2="411.8" stroke="#000" stroke-width="1.5"/>
<text x="1063.03" y="427.90" font-size="10.30" textLength="30.28" lengthAdjust="spacingAndGlyphs" fill="#000">40000</text>
<line x1="1115.35" y1="404.8" x2="1115.35" y2="411.8" stroke="#000" stroke-width="1.5"/>
<line x1="1152.62" y1="404.8" x2="1152.62" y2="411.8" stroke="#000" stroke-width="1.5"/>
<text x="1137.26" y="427.90" font-size="10.30" textLength="30.59" lengthAdjust="spacingAndGlyphs" fill="#000">60000</text>
<polyline points="924.8,404.8 924.8,290.7 929.8,290.7 929.8,303.2 935.8,303.2 935.8,316.2 940.9,316.2 940.9,330.9 946.9,330.9 946.9,404.8" fill="none" stroke="#0000ff" stroke-width="1.5"/>
<line x1="911.0" y1="404.5" x2="1185.2" y2="404.5" stroke="#000060" stroke-width="1.5"/>
<line x1="924.8" y1="404.5" x2="946.9" y2="404.5" stroke="#111" stroke-width="1.5"/>
<text x="1030.81" y="446.00" font-size="10.30" textLength="34.11" lengthAdjust="spacingAndGlyphs" fill="#000">counts</text>
<text transform="translate(880.00,382.21) rotate(-90)" x="0" y="0" font-size="10.30" textLength="72.23" lengthAdjust="spacingAndGlyphs">log frequency</text>
<text transform="translate(1193.50,308.34) rotate(90)" x="0" y="0" font-size="10.30" textLength="81.72" lengthAdjust="spacingAndGlyphs">histogram (full)</text>
<rect x="911.0" y="516.8" width="274.20000000000005" height="119.5" fill="none" stroke="#000" stroke-width="1.5"/>
<line x1="904.0" y1="626.60" x2="911.0" y2="626.60" stroke="#000" stroke-width="1.5"/>
<text x="889.68" y="630.20" font-size="10.30" textLength="5.72" lengthAdjust="spacingAndGlyphs" fill="#000">0</text>
<line x1="904.0" y1="592.07" x2="911.0" y2="592.07" stroke="#000" stroke-width="1.5"/>
<text x="864.85" y="595.67" font-size="10.30" textLength="30.58" lengthAdjust="spacingAndGlyphs" fill="#000">20000</text>
<line x1="904.0" y1="557.54" x2="911.0" y2="557.54" stroke="#000" stroke-width="1.5"/>
<text x="865.15" y="561.14" font-size="10.30" textLength="30.28" lengthAdjust="spacingAndGlyphs" fill="#000">40000</text>
<line x1="904.0" y1="523.01" x2="911.0" y2="523.01" stroke="#000" stroke-width="1.5"/>
<text x="864.84" y="526.61" font-size="10.30" textLength="30.59" lengthAdjust="spacingAndGlyphs" fill="#000">60000</text>
<line x1="911.60" y1="636.3" x2="911.60" y2="643.3" stroke="#000" stroke-width="1.5"/>
<text x="908.74" y="659.70" font-size="10.30" textLength="5.72" lengthAdjust="spacingAndGlyphs" fill="#000">0</text>
<line x1="976.12" y1="636.3" x2="976.12" y2="643.3" stroke="#000" stroke-width="1.5"/>
<text x="967.06" y="659.70" font-size="10.30" textLength="18.12" lengthAdjust="spacingAndGlyphs" fill="#000">500</text>
<line x1="1040.64" y1="636.3" x2="1040.64" y2="643.3" stroke="#000" stroke-width="1.5"/>
<text x="1028.08" y="659.70" font-size="10.30" textLength="24.71" lengthAdjust="spacingAndGlyphs" fill="#000">1000</text>
<line x1="1105.16" y1="636.3" x2="1105.16" y2="643.3" stroke="#000" stroke-width="1.5"/>
<text x="1092.60" y="659.70" font-size="10.30" textLength="24.71" lengthAdjust="spacingAndGlyphs" fill="#000">1500</text>
<line x1="1169.68" y1="636.3" x2="1169.68" y2="643.3" stroke="#000" stroke-width="1.5"/>
<text x="1157.41" y="659.70" font-size="10.30" textLength="24.41" lengthAdjust="spacingAndGlyphs" fill="#000">2000</text>
<polyline points="911.6,624.90 911.9,624.90 912.1,624.90 912.4,624.90 912.6,624.90 912.9,624.90 913.1,624.90 913.4,624.90 913.7,624.90 913.9,624.90 914.2,624.90 914.4,624.90 914.7,624.90 915.0,624.90 915.2,624.90 915.5,624.90 915.7,624.90 916.0,624.90 916.2,624.90 916.5,624.90 916.8,624.90 917.0,624.90 917.3,624.90 917.5,624.90 917.8,624.90 918.1,624.90 918.3,624.90 918.6,624.90 918.8,624.90 919.1,624.90 919.3,624.90 919.6,624.90 919.9,624.90 920.1,624.90 920.4,624.90 920.6,624.90 920.9,624.90 921.1,624.90 921.4,624.90 921.7,624.90 921.9,624.90 922.2,624.90 922.4,624.90 922.7,624.90 923.0,624.90 923.2,624.90 923.5,624.90 923.7,624.90 924.0,624.90 924.2,624.90 924.5,624.90 924.8,624.90 925.0,624.90 925.3,624.90 925.5,624.90 925.8,624.90 926.1,624.90 926.3,624.90 926.6,624.90 926.8,624.90 927.1,624.90 927.3,624.90 927.6,624.90 927.9,624.90 928.1,624.90 928.4,624.90 928.6,624.90 928.9,624.90 929.2,624.90 929.4,624.90 929.7,624.90 929.9,624.90 930.2,624.90 930.4,624.90 930.7,624.90 931.0,624.90 931.2,624.90 931.5,624.90 931.7,624.90 932.0,624.90 932.2,624.90 932.5,624.90 932.8,624.90 933.0,624.90 933.3,624.90 933.5,624.90 933.8,624.90 934.1,624.90 934.3,624.90 934.6,624.90 934.8,624.90 935.1,624.90 935.3,624.90 935.6,624.90 935.9,624.90 936.1,624.90 936.4,624.90 936.6,624.90 936.9,624.90 937.2,624.90 937.4,624.90 937.7,624.90 937.9,624.90 938.2,624.90 938.4,624.90 938.7,624.90 939.0,624.90 939.2,624.90 939.5,624.90 939.7,624.90 940.0,624.90 940.2,624.90 940.5,624.90 940.8,624.90 941.0,624.90 941.3,624.90 941.5,624.90 941.8,624.90 942.1,624.90 942.3,624.90 942.6,624.90 942.8,624.90 943.1,624.90 943.3,624.90 943.6,624.90 943.9,624.90 944.1,624.90 944.4,624.90 944.6,624.90 944.9,624.90 945.2,624.90 945.4,624.90 945.7,624.90 945.9,624.90 946.2,624.90 946.4,624.90 946.7,624.90 947.0,624.90 947.2,624.90 947.5,624.90 947.7,624.90 948.0,624.90 948.3,624.90 948.5,624.90 948.8,624.90 949.0,624.90 949.3,624.90 949.5,624.90 949.8,624.90 950.1,624.90 950.3,624.90 950.6,624.90 950.8,624.90 951.1,624.90 951.3,624.90 951.6,624.90 951.9,624.90 952.1,624.90 952.4,624.90 952.6,624.90 952.9,624.90 953.2,624.90 953.4,624.90 953.7,624.90 953.9,624.90 954.2,624.90 954.4,624.90 954.7,624.90 955.0,624.90 955.2,624.90 955.5,624.90 955.7,624.90 956.0,624.90 956.3,624.90 956.5,624.90 956.8,624.90 957.0,624.90 957.3,624.90 957.5,624.90 957.8,624.90 958.1,624.90 958.3,624.90 958.6,624.90 958.8,624.90 959.1,624.90 959.3,624.90 959.6,624.90 959.9,624.90 960.1,624.90 960.4,624.90 960.6,624.90 960.9,624.90 961.2,624.90 961.4,624.90 961.7,624.90 961.9,624.90 962.2,624.90 962.4,624.90 962.7,624.90 963.0,624.90 963.2,624.90 963.5,624.90 963.7,624.90 964.0,624.90 964.3,624.90 964.5,624.90 964.8,624.90 965.0,624.90 965.3,624.90 965.5,624.90 965.8,624.90 966.1,624.90 966.3,624.90 966.6,624.90 966.8,624.90 967.1,624.90 967.3,624.90 967.6,624.90 967.9,624.90 968.1,624.89 968.4,624.87 968.6,624.82 968.9,624.71 969.2,624.51 969.4,624.20 969.7,623.78 969.9,623.29 970.2,622.86 970.4,622.60 970.7,622.60 971.0,622.86 971.2,623.29 971.5,623.78 971.7,624.20 972.0,624.51 972.3,624.71 972.5,624.82 972.8,624.87 973.0,624.89 973.3,624.90 973.5,624.90 973.8,624.90 974.1,624.90 974.3,624.90 974.6,624.90 974.8,624.90 975.1,624.90 975.4,624.90 975.6,624.90 975.9,624.90 976.1,624.90 976.4,624.90 976.6,624.90 976.9,624.90 977.2,624.90 977.4,624.90 977.7,624.90 977.9,624.90 978.2,624.90 978.4,624.90 978.7,624.90 979.0,624.90 979.2,624.90 979.5,624.90 979.7,624.90 980.0,624.90 980.3,624.90 980.5,624.90 980.8,624.90 981.0,624.90 981.3,624.90 981.5,624.90 981.8,624.90 982.1,624.90 982.3,624.90 982.6,624.90 982.8,624.90 983.1,624.90 983.4,624.90 983.6,624.90 983.9,624.90 984.1,624.90 984.4,624.90 984.6,624.90 984.9,624.90 985.2,624.90 985.4,624.90 985.7,624.90 985.9,624.90 986.2,624.90 986.4,624.90 986.7,624.89 987.0,624.86 987.2,624.79 987.5,624.65 987.7,624.40 988.0,623.99 988.3,623.44 988.5,622.81 988.8,622.25 989.0,621.92 989.3,621.92 989.5,622.25 989.8,622.81 990.1,623.44 990.3,623.99 990.6,624.40 990.8,624.65 991.1,624.79 991.4,624.86 991.6,624.89 991.9,624.90 992.1,624.90 992.4,624.90 992.6,624.90 992.9,624.90 993.2,624.90 993.4,624.90 993.7,624.90 993.9,624.90 994.2,624.90 994.5,624.90 994.7,624.90 995.0,624.90 995.2,624.90 995.5,624.90 995.7,624.90 996.0,624.90 996.3,624.90 996.5,624.90 996.8,624.90 997.0,624.90 997.3,624.90 997.5,624.90 997.8,624.90 998.1,624.90 998.3,624.90 998.6,624.90 998.8,624.90 999.1,624.90 999.4,624.90 999.6,624.90 999.9,624.90 1000.1,624.90 1000.4,624.90 1000.6,624.90 1000.9,624.90 1001.2,624.90 1001.4,624.90 1001.7,624.90 1001.9,624.90 1002.2,624.90 1002.5,624.90 1002.7,624.90 1003.0,624.90 1003.2,624.90 1003.5,624.90 1003.7,624.90 1004.0,624.90 1004.3,624.90 1004.5,624.89 1004.8,624.88 1005.0,624.85 1005.3,624.77 1005.5,624.60 1005.8,624.28 1006.1,623.78 1006.3,623.10 1006.6,622.33 1006.8,621.64 1007.1,621.23 1007.4,621.23 1007.6,621.64 1007.9,622.33 1008.1,623.10 1008.4,623.78 1008.6,624.28 1008.9,624.60 1009.2,624.77 1009.4,624.85 1009.7,624.88 1009.9,624.89 1010.2,624.90 1010.5,624.90 1010.7,624.90 1011.0,624.90 1011.2,624.90 1011.5,624.90 1011.7,624.90 1012.0,624.90 1012.3,624.90 1012.5,624.90 1012.8,624.90 1013.0,624.90 1013.3,624.90 1013.5,624.90 1013.8,624.90 1014.1,624.90 1014.3,624.90 1014.6,624.90 1014.8,624.90 1015.1,624.90 1015.4,624.90 1015.6,624.90 1015.9,624.90 1016.1,624.90 1016.4,624.90 1016.6,624.90 1016.9,624.90 1017.2,624.90 1017.4,624.90 1017.7,624.90 1017.9,624.90 1018.2,624.90 1018.5,624.90 1018.7,624.90 1019.0,624.90 1019.2,624.90 1019.5,624.90 1019.7,624.90 1020.0,624.90 1020.3,624.90 1020.5,624.90 1020.8,624.90 1021.0,624.90 1021.3,624.90 1021.6,624.89 1021.8,624.86 1022.1,624.80 1022.3,624.65 1022.6,624.35 1022.8,623.85 1023.1,623.10 1023.4,622.17 1023.6,621.23 1023.9,620.51 1024.1,620.24 1024.4,620.51 1024.6,621.23 1024.9,622.17 1025.2,623.10 1025.4,623.85 1025.7,624.35 1025.9,624.65 1026.2,624.80 1026.5,624.86 1026.7,624.89 1027.0,624.90 1027.2,624.90 1027.5,624.90 1027.7,624.90 1028.0,624.90 1028.3,624.90 1028.5,624.90 1028.8,624.90 1029.0,624.90 1029.3,624.90 1029.6,624.90 1029.8,624.90 1030.1,624.90 1030.3,624.90 1030.6,624.90 1030.8,624.90 1031.1,624.90 1031.4,624.90 1031.6,624.90 1031.9,624.90 1032.1,624.90 1032.4,624.90 1032.6,624.90 1032.9,624.90 1033.2,624.90 1033.4,624.90 1033.7,624.90 1033.9,624.90 1034.2,624.90 1034.5,624.90 1034.7,624.90 1035.0,624.90 1035.2,624.90 1035.5,624.90 1035.7,624.90 1036.0,624.90 1036.3,624.90 1036.5,624.90 1036.8,624.90 1037.0,624.90 1037.3,624.89 1037.6,624.88 1037.8,624.83 1038.1,624.72 1038.3,624.48 1038.6,624.05 1038.8,623.36 1039.1,622.43 1039.4,621.37 1039.6,620.42 1039.9,619.85 1040.1,619.85 1040.4,620.42 1040.7,621.37 1040.9,622.43 1041.2,623.36 1041.4,624.05 1041.7,624.48 1041.9,624.72 1042.2,624.83 1042.5,624.88 1042.7,624.89 1043.0,624.90 1043.2,624.90 1043.5,624.90 1043.7,624.90 1044.0,624.90 1044.3,624.90 1044.5,624.90 1044.8,624.90 1045.0,624.90 1045.3,624.90 1045.6,624.90 1045.8,624.90 1046.1,624.90 1046.3,624.90 1046.6,624.90 1046.8,624.90 1047.1,624.90 1047.4,624.90 1047.6,624.90 1047.9,624.90 1048.1,624.90 1048.4,624.90 1048.7,624.90 1048.9,624.90 1049.2,624.90 1049.4,624.90 1049.7,624.90 1049.9,624.90 1050.2,624.90 1050.5,624.90 1050.7,624.90 1051.0,624.90 1051.2,624.90 1051.5,624.90 1051.7,624.90 1052.0,624.90 1052.3,624.88 1052.5,624.85 1052.8,624.77 1053.0,624.58 1053.3,624.22 1053.6,623.58 1053.8,622.65 1054.1,621.49 1054.3,620.31 1054.6,619.41 1054.8,619.08 1055.1,619.41 1055.4,620.31 1055.6,621.49 1055.9,622.65 1056.1,623.58 1056.4,624.22 1056.7,624.58 1056.9,624.77 1057.2,624.85 1057.4,624.88 1057.7,624.90 1057.9,624.90 1058.2,624.90 1058.5,624.90 1058.7,624.90 1059.0,624.90 1059.2,624.90 1059.5,624.90 1059.7,624.90 1060.0,624.90 1060.3,624.90 1060.5,624.90 1060.8,624.90 1061.0,624.90 1061.3,624.90 1061.6,624.90 1061.8,624.90 1062.1,624.90 1062.3,624.90 1062.6,624.90 1062.8,624.90 1063.1,624.90 1063.4,624.90 1063.6,624.90 1063.9,624.90 1064.1,624.90 1064.4,624.90 1064.7,624.90 1064.9,624.90 1065.2,624.90 1065.4,624.90 1065.7,624.90 1065.9,624.90 1066.2,624.90 1066.5,624.90 1066.7,624.90 1067.0,624.88 1067.2,624.85 1067.5,624.77 1067.8,624.57 1068.0,624.19 1068.3,623.53 1068.5,622.56 1068.8,621.35 1069.0,620.13 1069.3,619.19 1069.6,618.84 1069.8,619.19 1070.1,620.13 1070.3,621.35 1070.6,622.56 1070.8,623.53 1071.1,624.19 1071.4,624.57 1071.6,624.77 1071.9,624.85 1072.1,624.88 1072.4,624.90 1072.7,624.90 1072.9,624.90 1073.2,624.90 1073.4,624.90 1073.7,624.90 1073.9,624.90 1074.2,624.90 1074.5,624.90 1074.7,624.90 1075.0,624.90 1075.2,624.90 1075.5,624.90 1075.8,624.90 1076.0,624.90 1076.3,624.90 1076.5,624.90 1076.8,624.90 1077.0,624.90 1077.3,624.90 1077.6,624.90 1077.8,624.90 1078.1,624.90 1078.3,624.90 1078.6,624.90 1078.8,624.90 1079.1,624.90 1079.4,624.90 1079.6,624.90 1079.9,624.90 1080.1,624.90 1080.4,624.90 1080.7,624.88 1080.9,624.85 1081.2,624.76 1081.4,624.56 1081.7,624.16 1081.9,623.48 1082.2,622.47 1082.5,621.22 1082.7,619.94 1083.0,618.97 1083.2,618.61 1083.5,618.97 1083.8,619.94 1084.0,621.22 1084.3,622.47 1084.5,623.48 1084.8,624.16 1085.0,624.56 1085.3,624.76 1085.6,624.85 1085.8,624.88 1086.1,624.90 1086.3,624.90 1086.6,624.90 1086.8,624.90 1087.1,624.90 1087.4,624.90 1087.6,624.90 1087.9,624.90 1088.1,624.90 1088.4,624.90 1088.7,624.90 1088.9,624.90 1089.2,624.90 1089.4,624.90 1089.7,624.90 1089.9,624.90 1090.2,624.90 1090.5,624.90 1090.7,624.90 1091.0,624.90 1091.2,624.90 1091.5,624.90 1091.8,624.90 1092.0,624.90 1092.3,624.90 1092.5,624.90 1092.8,624.90 1093.0,624.90 1093.3,624.89 1093.6,624.87 1093.8,624.81 1094.1,624.68 1094.3,624.39 1094.6,623.86 1094.9,623.01 1095.1,621.86 1095.4,620.56 1095.6,619.40 1095.9,618.70 1096.1,618.70 1096.4,619.40 1096.7,620.56 1096.9,621.86 1097.2,623.01 1097.4,623.86 1097.7,624.39 1097.9,624.68 1098.2,624.81 1098.5,624.87 1098.7,624.89 1099.0,624.90 1099.2,624.90 1099.5,624.90 1099.8,624.90 1100.0,624.90 1100.3,624.90 1100.5,624.90 1100.8,624.90 1101.0,624.90 1101.3,624.90 1101.6,624.90 1101.8,624.90 1102.1,624.90 1102.3,624.90 1102.6,624.90 1102.9,624.90 1103.1,624.90 1103.4,624.90 1103.6,624.90 1103.9,624.90 1104.1,624.90 1104.4,624.90 1104.7,624.90 1104.9,624.90 1105.2,624.89 1105.4,624.87 1105.7,624.82 1105.9,624.69 1106.2,624.43 1106.5,623.94 1106.7,623.15 1107.0,622.09 1107.2,620.88 1107.5,619.81 1107.8,619.16 1108.0,619.16 1108.3,619.81 1108.5,620.88 1108.8,622.09 1109.0,623.15 1109.3,623.94 1109.6,624.43 1109.8,624.69 1110.1,624.82 1110.3,624.87 1110.6,624.89 1110.9,624.90 1111.1,624.90 1111.4,624.90 1111.6,624.90 1111.9,624.90 1112.1,624.90 1112.4,624.90 1112.7,624.90 1112.9,624.90 1113.2,624.90 1113.4,624.90 1113.7,624.90 1114.0,624.90 1114.2,624.90 1114.5,624.90 1114.7,624.90 1115.0,624.90 1115.2,624.90 1115.5,624.90 1115.8,624.90 1116.0,624.90 1116.3,624.90 1116.5,624.90 1116.8,624.89 1117.0,624.87 1117.3,624.82 1117.6,624.70 1117.8,624.45 1118.1,623.97 1118.3,623.22 1118.6,622.20 1118.9,621.04 1119.1,620.01 1119.4,619.39 1119.6,619.39 1119.9,620.01 1120.1,621.04 1120.4,622.20 1120.7,623.22 1120.9,623.97 1121.2,624.45 1121.4,624.70 1121.7,624.82 1122.0,624.87 1122.2,624.89 1122.5,624.90 1122.7,624.90 1123.0,624.90 1123.2,624.90 1123.5,624.90 1123.8,624.90 1124.0,624.90 1124.3,624.90 1124.5,624.90 1124.8,624.90 1125.0,624.90 1125.3,624.90 1125.6,624.90 1125.8,624.90 1126.1,624.90 1126.3,624.90 1126.6,624.90 1126.9,624.90 1127.1,624.90 1127.4,624.90 1127.6,624.90 1127.9,624.90 1128.1,624.90 1128.4,624.89 1128.7,624.86 1128.9,624.80 1129.2,624.65 1129.4,624.35 1129.7,623.85 1130.0,623.10 1130.2,622.17 1130.5,621.23 1130.7,620.51 1131.0,620.24 1131.2,620.51 1131.5,621.23 1131.8,622.17 1132.0,623.10 1132.3,623.85 1132.5,624.35 1132.8,624.65 1133.0,624.80 1133.3,624.86 1133.6,624.89 1133.8,624.90 1134.1,624.90 1134.3,624.90 1134.6,624.90 1134.9,624.90 1135.1,624.90 1135.4,624.90 1135.6,624.90 1135.9,624.90 1136.1,624.90 1136.4,624.90 1136.7,624.90 1136.9,624.90 1137.2,624.90 1137.4,624.90 1137.7,624.90 1138.0,624.90 1138.2,624.90 1138.5,624.90 1138.7,624.90 1139.0,624.90 1139.2,624.90 1139.5,624.89 1139.8,624.88 1140.0,624.84 1140.3,624.75 1140.5,624.57 1140.8,624.27 1141.1,623.82 1141.3,623.26 1141.6,622.70 1141.8,622.27 1142.1,622.10 1142.3,622.27 1142.6,622.70 1142.9,623.26 1143.1,623.82 1143.4,624.27 1143.6,624.57 1143.9,624.75 1144.1,624.84 1144.4,624.88 1144.7,624.89 1144.9,624.90 1145.2,624.90 1145.4,624.90 1145.7,624.90 1146.0,624.90 1146.2,624.90 1146.5,624.90 1146.7,624.90 1147.0,624.90 1147.2,624.90 1147.5,624.90 1147.8,624.90 1148.0,624.90 1148.3,624.90 1148.5,624.90 1148.8,624.90 1149.1,624.90 1149.3,624.90 1149.6,624.90 1149.8,624.90 1150.1,624.90 1150.3,624.89 1150.6,624.88 1150.9,624.86 1151.1,624.82 1151.4,624.74 1151.6,624.63 1151.9,624.49 1152.1,624.35 1152.4,624.24 1152.7,624.20 1152.9,624.24 1153.2,624.35 1153.4,624.49 1153.7,624.63 1154.0,624.74 1154.2,624.82 1154.5,624.86 1154.7,624.88 1155.0,624.89 1155.2,624.90 1155.5,624.90 1155.8,624.90 1156.0,624.90 1156.3,624.90 1156.5,624.90 1156.8,624.90 1157.1,624.90 1157.3,624.90 1157.6,624.90 1157.8,624.90 1158.1,624.90 1158.3,624.90 1158.6,624.90 1158.9,624.90 1159.1,624.90 1159.4,624.90 1159.6,624.90 1159.9,624.90 1160.2,624.90 1160.4,624.90 1160.7,624.90 1160.9,624.90 1161.2,624.90 1161.4,624.90 1161.7,624.90 1162.0,624.90 1162.2,624.90 1162.5,624.90 1162.7,624.90 1163.0,624.90 1163.2,624.90 1163.5,624.90 1163.8,624.90 1164.0,624.90 1164.3,624.90 1164.5,624.90 1164.8,624.90 1165.1,624.90 1165.3,624.90 1165.6,624.90 1165.8,624.90 1166.1,624.90 1166.3,624.90 1166.6,624.90 1166.9,624.90 1167.1,624.90 1167.4,624.90 1167.6,624.90 1167.9,624.90 1168.2,624.90 1168.4,624.90 1168.7,624.90 1168.9,624.90 1169.2,624.90 1169.4,624.90 1169.7,624.90 1170.0,624.90 1170.2,624.90 1170.5,624.90 1170.7,624.90 1171.0,624.90 1171.2,624.90 1171.5,624.90 1171.8,624.90 1172.0,624.90 1172.3,624.90 1172.5,624.90 1172.8,624.90 1173.1,624.90 1173.3,624.90 1173.6,624.90 1173.8,624.90 1174.1,624.90 1174.3,624.90 1174.6,624.90 1174.9,624.90 1175.1,624.90 1175.4,624.90 1175.6,624.90 1175.9,624.90 1176.2,624.90 1176.4,624.90 1176.7,624.90 1176.9,624.90 1177.2,624.90 1177.4,624.90 1177.7,624.90 1178.0,624.90 1178.2,624.90 1178.5,624.90 1178.7,624.90 1179.0,624.90 1179.2,624.90 1179.5,624.90 1179.8,624.90 1180.0,624.90 1180.3,624.90 1180.5,624.90 1180.8,624.90 1181.1,624.90 1181.3,624.90 1181.6,624.90 1181.8,624.90 1182.1,624.90 1182.3,624.90 1182.6,624.90 1182.9,624.90 1183.1,624.90" fill="none" stroke="#0000ff" stroke-width="1.7" stroke-linejoin="round"/>
<rect x="1108.9" y="519.9" width="73.2" height="16.2" rx="2" fill="#fff" fill-opacity="0.8" stroke="#cccccc" stroke-width="1"/>
<line x1="1111.4" y1="527.8" x2="1133.5" y2="527.8" stroke="#0000ff" stroke-width="1.8"/>
<text x="1138.27" y="531.40" font-size="10.30" textLength="39.80" lengthAdjust="spacingAndGlyphs" fill="#000">y=2000</text>
<text x="1043.75" y="677.70" font-size="10.30" textLength="7.49" lengthAdjust="spacingAndGlyphs" fill="#000">X</text>
<text transform="translate(853.60,594.80) rotate(-90)" x="0" y="0" font-size="10.30" textLength="34.42" lengthAdjust="spacingAndGlyphs">counts</text>
<text transform="translate(1193.50,555.17) rotate(90)" x="0" y="0" font-size="10.30" textLength="39.36" lengthAdjust="spacingAndGlyphs">cut in x</text>
<rect x="911.0" y="688.6" width="274.20000000000005" height="120.10000000000002" fill="none" stroke="#000" stroke-width="1.5"/>
<line x1="904.0" y1="798.60" x2="911.0" y2="798.60" stroke="#000" stroke-width="1.5"/>
<text x="889.68" y="802.20" font-size="10.30" textLength="5.72" lengthAdjust="spacingAndGlyphs" fill="#000">0</text>
<line x1="904.0" y1="764.07" x2="911.0" y2="764.07" stroke="#000" stroke-width="1.5"/>
<text x="864.85" y="767.67" font-size="10.30" textLength="30.58" lengthAdjust="spacingAndGlyphs" fill="#000">20000</text>
<line x1="904.0" y1="729.54" x2="911.0" y2="729.54" stroke="#000" stroke-width="1.5"/>
<text x="865.15" y="733.14" font-size="10.30" textLength="30.28" lengthAdjust="spacingAndGlyphs" fill="#000">40000</text>
<line x1="904.0" y1="695.01" x2="911.0" y2="695.01" stroke="#000" stroke-width="1.5"/>
<text x="864.84" y="698.61" font-size="10.30" textLength="30.59" lengthAdjust="spacingAndGlyphs" fill="#000">60000</text>
<line x1="911.00" y1="808.7" x2="911.00" y2="815.7" stroke="#000" stroke-width="1.5"/>
<text x="908.14" y="831.50" font-size="10.30" textLength="5.72" lengthAdjust="spacingAndGlyphs" fill="#000">0</text>
<line x1="979.30" y1="808.7" x2="979.30" y2="815.7" stroke="#000" stroke-width="1.5"/>
<text x="966.74" y="831.50" font-size="10.30" textLength="24.71" lengthAdjust="spacingAndGlyphs" fill="#000">1000</text>
<line x1="1047.60" y1="808.7" x2="1047.60" y2="815.7" stroke="#000" stroke-width="1.5"/>
<text x="1035.33" y="831.50" font-size="10.30" textLength="24.41" lengthAdjust="spacingAndGlyphs" fill="#000">2000</text>
<line x1="1115.90" y1="808.7" x2="1115.90" y2="815.7" stroke="#000" stroke-width="1.5"/>
<text x="1103.77" y="831.50" font-size="10.30" textLength="24.27" lengthAdjust="spacingAndGlyphs" fill="#000">3000</text>
<line x1="1184.20" y1="808.7" x2="1184.20" y2="815.7" stroke="#000" stroke-width="1.5"/>
<text x="1172.24" y="831.50" font-size="10.30" textLength="24.10" lengthAdjust="spacingAndGlyphs" fill="#000">4000</text>
<polyline points="911.0,797.20 911.3,797.20 911.5,797.20 911.8,797.20 912.1,797.20 912.4,797.20 912.6,797.20 912.9,797.20 913.2,797.20 913.5,797.20 913.7,797.20 914.0,797.20 914.3,797.20 914.6,797.20 914.8,797.20 915.1,797.20 915.4,797.20 915.6,797.20 915.9,797.20 916.2,797.20 916.5,797.20 916.7,797.20 917.0,797.20 917.3,797.20 917.6,797.20 917.8,797.20 918.1,797.20 918.4,797.20 918.6,797.20 918.9,797.20 919.2,797.20 919.5,797.20 919.7,797.20 920.0,797.20 920.3,797.20 920.6,797.20 920.8,797.20 921.1,797.20 921.4,797.20 921.7,797.20 921.9,797.20 922.2,797.20 922.5,797.20 922.7,797.20 923.0,797.20 923.3,797.20 923.6,797.20 923.8,797.20 924.1,797.20 924.4,797.20 924.7,797.20 924.9,797.20 925.2,797.20 925.5,797.20 925.8,797.20 926.0,797.20 926.3,797.20 926.6,797.20 926.8,797.20 927.1,797.20 927.4,797.20 927.7,797.20 927.9,797.20 928.2,797.20 928.5,797.20 928.8,797.20 929.0,797.20 929.3,797.20 929.6,797.20 929.9,797.20 930.1,797.20 930.4,797.20 930.7,797.20 930.9,797.20 931.2,797.20 931.5,797.20 931.8,797.20 932.0,797.20 932.3,797.20 932.6,797.20 932.9,797.20 933.1,797.20 933.4,797.20 933.7,797.20 933.9,797.20 934.2,797.20 934.5,797.20 934.8,797.20 935.0,797.20 935.3,797.20 935.6,797.20 935.9,797.20 936.1,797.20 936.4,797.20 936.7,797.20 937.0,797.20 937.2,797.20 937.5,797.20 937.8,797.20 938.0,797.20 938.3,797.20 938.6,797.20 938.9,797.20 939.1,797.20 939.4,797.20 939.7,797.20 940.0,797.20 940.2,797.19 940.5,797.19 940.8,797.19 941.1,797.19 941.3,797.18 941.6,797.18 941.9,797.17 942.1,797.16 942.4,797.15 942.7,797.14 943.0,797.12 943.2,797.11 943.5,797.09 943.8,797.06 944.1,797.04 944.3,797.01 944.6,796.98 944.9,796.95 945.1,796.92 945.4,796.88 945.7,796.85 946.0,796.81 946.2,796.77 946.5,796.74 946.8,796.71 947.1,796.68 947.3,796.65 947.6,796.63 947.9,796.61 948.2,796.60 948.4,796.60 948.7,796.60 949.0,796.61 949.2,796.62 949.5,796.64 949.8,796.66 950.1,796.69 950.3,796.72 950.6,796.76 950.9,796.79 951.2,796.83 951.4,796.86 951.7,796.90 952.0,796.93 952.3,796.97 952.5,797.00 952.8,797.03 953.1,797.05 953.3,797.08 953.6,797.10 953.9,797.11 954.2,797.13 954.4,797.14 954.7,797.15 955.0,797.16 955.3,797.17 955.5,797.18 955.8,797.18 956.1,797.19 956.4,797.19 956.6,797.19 956.9,797.19 957.2,797.20 957.4,797.20 957.7,797.20 958.0,797.20 958.3,797.20 958.5,797.20 958.8,797.20 959.1,797.20 959.4,797.20 959.6,797.20 959.9,797.20 960.2,797.20 960.4,797.20 960.7,797.20 961.0,797.20 961.3,797.20 961.5,797.20 961.8,797.20 962.1,797.20 962.4,797.20 962.6,797.20 962.9,797.20 963.2,797.20 963.5,797.20 963.7,797.20 964.0,797.20 964.3,797.20 964.5,797.20 964.8,797.20 965.1,797.20 965.4,797.20 965.6,797.20 965.9,797.20 966.2,797.20 966.5,797.20 966.7,797.20 967.0,797.20 967.3,797.20 967.6,797.20 967.8,797.20 968.1,797.20 968.4,797.20 968.6,797.20 968.9,797.20 969.2,797.20 969.5,797.20 969.7,797.20 970.0,797.20 970.3,797.20 970.6,797.20 970.8,797.20 971.1,797.20 971.4,797.20 971.7,797.20 971.9,797.20 972.2,797.20 972.5,797.20 972.7,797.20 973.0,797.20 973.3,797.20 973.6,797.20 973.8,797.20 974.1,797.20 974.4,797.20 974.7,797.20 974.9,797.20 975.2,797.20 975.5,797.20 975.7,797.20 976.0,797.20 976.3,797.20 976.6,797.20 976.8,797.20 977.1,797.20 977.4,797.20 977.7,797.20 977.9,797.20 978.2,797.20 978.5,797.20 978.8,797.20 979.0,797.20 979.3,797.20 979.6,797.20 979.8,797.20 980.1,797.20 980.4,797.20 980.7,797.20 980.9,797.20 981.2,797.20 981.5,797.20 981.8,797.20 982.0,797.20 982.3,797.20 982.6,797.20 982.9,797.20 983.1,797.20 983.4,797.20 983.7,797.20 983.9,797.20 984.2,797.20 984.5,797.20 984.8,797.20 985.0,797.20 985.3,797.20 985.6,797.20 985.9,797.20 986.1,797.20 986.4,797.20 986.7,797.20 986.9,797.20 987.2,797.20 987.5,797.20 987.8,797.20 988.0,797.20 988.3,797.20 988.6,797.20 988.9,797.20 989.1,797.20 989.4,797.20 989.7,797.19 990.0,797.19 990.2,797.19 990.5,797.18 990.8,797.18 991.0,797.17 991.3,797.16 991.6,797.14 991.9,797.12 992.1,797.09 992.4,797.06 992.7,797.02 993.0,796.97 993.2,796.90 993.5,796.83 993.8,796.74 994.1,796.64 994.3,796.51 994.6,796.38 994.9,796.22 995.1,796.05 995.4,795.87 995.7,795.67 996.0,795.46 996.2,795.25 996.5,795.03 996.8,794.81 997.1,794.61 997.3,794.41 997.6,794.24 997.9,794.09 998.2,793.97 998.4,793.87 998.7,793.82 999.0,793.80 999.2,793.82 999.5,793.87 999.8,793.97 1000.1,794.09 1000.3,794.24 1000.6,794.41 1000.9,794.61 1001.2,794.81 1001.4,795.03 1001.7,795.25 1002.0,795.46 1002.2,795.67 1002.5,795.87 1002.8,796.05 1003.1,796.22 1003.3,796.38 1003.6,796.51 1003.9,796.64 1004.2,796.74 1004.4,796.83 1004.7,796.90 1005.0,796.97 1005.3,797.02 1005.5,797.06 1005.8,797.09 1006.1,797.12 1006.3,797.14 1006.6,797.16 1006.9,797.17 1007.2,797.18 1007.4,797.18 1007.7,797.19 1008.0,797.19 1008.3,797.19 1008.5,797.20 1008.8,797.20 1009.1,797.20 1009.4,797.20 1009.6,797.20 1009.9,797.20 1010.2,797.20 1010.4,797.20 1010.7,797.20 1011.0,797.20 1011.3,797.20 1011.5,797.20 1011.8,797.20 1012.1,797.20 1012.4,797.20 1012.6,797.20 1012.9,797.20 1013.2,797.20 1013.5,797.20 1013.7,797.20 1014.0,797.20 1014.3,797.20 1014.5,797.20 1014.8,797.20 1015.1,797.20 1015.4,797.20 1015.6,797.20 1015.9,797.20 1016.2,797.20 1016.5,797.20 1016.7,797.20 1017.0,797.20 1017.3,797.20 1017.5,797.20 1017.8,797.20 1018.1,797.20 1018.4,797.20 1018.6,797.20 1018.9,797.20 1019.2,797.20 1019.5,797.20 1019.7,797.20 1020.0,797.20 1020.3,797.20 1020.6,797.20 1020.8,797.20 1021.1,797.20 1021.4,797.20 1021.6,797.20 1021.9,797.20 1022.2,797.20 1022.5,797.20 1022.7,797.20 1023.0,797.20 1023.3,797.20 1023.6,797.20 1023.8,797.20 1024.1,797.20 1024.4,797.20 1024.7,797.20 1024.9,797.20 1025.2,797.20 1025.5,797.20 1025.7,797.20 1026.0,797.20 1026.3,797.20 1026.6,797.20 1026.8,797.20 1027.1,797.20 1027.4,797.20 1027.7,797.20 1027.9,797.20 1028.2,797.20 1028.5,797.20 1028.7,797.20 1029.0,797.20 1029.3,797.20 1029.6,797.20 1029.8,797.20 1030.1,797.20 1030.4,797.20 1030.7,797.20 1030.9,797.20 1031.2,797.20 1031.5,797.20 1031.8,797.20 1032.0,797.20 1032.3,797.20 1032.6,797.20 1032.8,797.20 1033.1,797.20 1033.4,797.20 1033.7,797.20 1033.9,797.20 1034.2,797.20 1034.5,797.20 1034.8,797.20 1035.0,797.20 1035.3,797.20 1035.6,797.20 1035.9,797.20 1036.1,797.20 1036.4,797.20 1036.7,797.20 1036.9,797.20 1037.2,797.20 1037.5,797.20 1037.8,797.20 1038.0,797.20 1038.3,797.20 1038.6,797.20 1038.9,797.20 1039.1,797.20 1039.4,797.20 1039.7,797.20 1040.0,797.20 1040.2,797.20 1040.5,797.20 1040.8,797.20 1041.0,797.20 1041.3,797.20 1041.6,797.20 1041.9,797.20 1042.1,797.20 1042.4,797.20 1042.7,797.20 1043.0,797.20 1043.2,797.20 1043.5,797.20 1043.8,797.20 1044.0,797.20 1044.3,797.20 1044.6,797.20 1044.9,797.20 1045.1,797.20 1045.4,797.20 1045.7,797.20 1046.0,797.20 1046.2,797.20 1046.5,797.20 1046.8,797.20 1047.1,797.20 1047.3,797.20 1047.6,797.20 1047.9,797.20 1048.1,797.20 1048.4,797.20 1048.7,797.20 1049.0,797.20 1049.2,797.20 1049.5,797.20 1049.8,797.20 1050.1,797.20 1050.3,797.20 1050.6,797.20 1050.9,797.20 1051.2,797.20 1051.4,797.20 1051.7,797.20 1052.0,797.20 1052.2,797.20 1052.5,797.20 1052.8,797.20 1053.1,797.20 1053.3,797.20 1053.6,797.20 1053.9,797.20 1054.2,797.20 1054.4,797.20 1054.7,797.20 1055.0,797.20 1055.2,797.20 1055.5,797.20 1055.8,797.20 1056.1,797.20 1056.3,797.20 1056.6,797.20 1056.9,797.20 1057.2,797.20 1057.4,797.20 1057.7,797.20 1058.0,797.20 1058.3,797.20 1058.5,797.20 1058.8,797.20 1059.1,797.20 1059.3,797.20 1059.6,797.20 1059.9,797.20 1060.2,797.20 1060.4,797.20 1060.7,797.20 1061.0,797.20 1061.3,797.20 1061.5,797.20 1061.8,797.20 1062.1,797.20 1062.4,797.20 1062.6,797.20 1062.9,797.20 1063.2,797.20 1063.4,797.20 1063.7,797.20 1064.0,797.20 1064.3,797.20 1064.5,797.20 1064.8,797.20 1065.1,797.20 1065.4,797.20 1065.6,797.20 1065.9,797.20 1066.2,797.20 1066.5,797.20 1066.7,797.20 1067.0,797.20 1067.3,797.20 1067.5,797.20 1067.8,797.20 1068.1,797.20 1068.4,797.20 1068.6,797.20 1068.9,797.20 1069.2,797.20 1069.5,797.20 1069.7,797.20 1070.0,797.20 1070.3,797.20 1070.5,797.20 1070.8,797.20 1071.1,797.20 1071.4,797.20 1071.6,797.20 1071.9,797.20 1072.2,797.20 1072.5,797.20 1072.7,797.20 1073.0,797.20 1073.3,797.20 1073.6,797.20 1073.8,797.20 1074.1,797.20 1074.4,797.20 1074.6,797.20 1074.9,797.20 1075.2,797.20 1075.5,797.20 1075.7,797.20 1076.0,797.20 1076.3,797.20 1076.6,797.20 1076.8,797.20 1077.1,797.20 1077.4,797.20 1077.7,797.20 1077.9,797.20 1078.2,797.20 1078.5,797.20 1078.7,797.20 1079.0,797.20 1079.3,797.20 1079.6,797.20 1079.8,797.20 1080.1,797.20 1080.4,797.20 1080.7,797.20 1080.9,797.20 1081.2,797.20 1081.5,797.20 1081.8,797.20 1082.0,797.20 1082.3,797.20 1082.6,797.20 1082.8,797.20 1083.1,797.20 1083.4,797.20 1083.7,797.20 1083.9,797.20 1084.2,797.20 1084.5,797.20 1084.8,797.20 1085.0,797.20 1085.3,797.20 1085.6,797.20 1085.8,797.20 1086.1,797.20 1086.4,797.20 1086.7,797.20 1086.9,797.20 1087.2,797.20 1087.5,797.20 1087.8,797.20 1088.0,797.20 1088.3,797.20 1088.6,797.20 1088.9,797.20 1089.1,797.20 1089.4,797.20 1089.7,797.20 1089.9,797.20 1090.2,797.20 1090.5,797.20 1090.8,797.20 1091.0,797.20 1091.3,797.20 1091.6,797.20 1091.9,797.20 1092.1,797.20 1092.4,797.20 1092.7,797.20 1093.0,797.20 1093.2,797.20 1093.5,797.20 1093.8,797.20 1094.0,797.20 1094.3,797.20 1094.6,797.20 1094.9,797.20 1095.1,797.20 1095.4,797.20 1095.7,797.20 1096.0,797.20 1096.2,797.20 1096.5,797.20 1096.8,797.20 1097.0,797.20 1097.3,797.20 1097.6,797.20 1097.9,797.20 1098.1,797.20 1098.4,797.20 1098.7,797.20 1099.0,797.20 1099.2,797.20 1099.5,797.20 1099.8,797.20 1100.1,797.20 1100.3,797.20 1100.6,797.20 1100.9,797.20 1101.1,797.20 1101.4,797.20 1101.7,797.20 1102.0,797.20 1102.2,797.20 1102.5,797.20 1102.8,797.20 1103.1,797.20 1103.3,797.20 1103.6,797.20 1103.9,797.20 1104.2,797.20 1104.4,797.20 1104.7,797.20 1105.0,797.20 1105.2,797.20 1105.5,797.20 1105.8,797.20 1106.1,797.20 1106.3,797.20 1106.6,797.20 1106.9,797.20 1107.2,797.20 1107.4,797.20 1107.7,797.20 1108.0,797.20 1108.3,797.20 1108.5,797.20 1108.8,797.20 1109.1,797.20 1109.3,797.20 1109.6,797.20 1109.9,797.20 1110.2,797.20 1110.4,797.20 1110.7,797.20 1111.0,797.20 1111.3,797.20 1111.5,797.20 1111.8,797.20 1112.1,797.20 1112.3,797.20 1112.6,797.20 1112.9,797.20 1113.2,797.20 1113.4,797.20 1113.7,797.20 1114.0,797.20 1114.3,797.20 1114.5,797.20 1114.8,797.20 1115.1,797.20 1115.4,797.20 1115.6,797.20 1115.9,797.20 1116.2,797.20 1116.4,797.20 1116.7,797.20 1117.0,797.20 1117.3,797.20 1117.5,797.20 1117.8,797.20 1118.1,797.20 1118.4,797.20 1118.6,797.20 1118.9,797.20 1119.2,797.20 1119.5,797.20 1119.7,797.20 1120.0,797.20 1120.3,797.20 1120.5,797.20 1120.8,797.20 1121.1,797.20 1121.4,797.20 1121.6,797.20 1121.9,797.20 1122.2,797.20 1122.5,797.20 1122.7,797.20 1123.0,797.20 1123.3,797.20 1123.5,797.20 1123.8,797.20 1124.1,797.20 1124.4,797.20 1124.6,797.20 1124.9,797.20 1125.2,797.20 1125.5,797.20 1125.7,797.20 1126.0,797.20 1126.3,797.20 1126.6,797.20 1126.8,797.20 1127.1,797.20 1127.4,797.20 1127.6,797.20 1127.9,797.20 1128.2,797.20 1128.5,797.20 1128.7,797.20 1129.0,797.20 1129.3,797.20 1129.6,797.20 1129.8,797.20 1130.1,797.20 1130.4,797.20 1130.7,797.20 1130.9,797.20 1131.2,797.20 1131.5,797.20 1131.7,797.20 1132.0,797.20 1132.3,797.20 1132.6,797.20 1132.8,797.20 1133.1,797.20 1133.4,797.20 1133.7,797.20 1133.9,797.20 1134.2,797.20 1134.5,797.20 1134.8,797.20 1135.0,797.20 1135.3,797.20 1135.6,797.20 1135.8,797.20 1136.1,797.20 1136.4,797.20 1136.7,797.20 1136.9,797.20 1137.2,797.20 1137.5,797.20 1137.8,797.20 1138.0,797.20 1138.3,797.20 1138.6,797.20 1138.8,797.20 1139.1,797.20 1139.4,797.20 1139.7,797.20 1139.9,797.20 1140.2,797.20 1140.5,797.20 1140.8,797.20 1141.0,797.20 1141.3,797.20 1141.6,797.20 1141.9,797.20 1142.1,797.20 1142.4,797.20 1142.7,797.20 1142.9,797.20 1143.2,797.20 1143.5,797.20 1143.8,797.20 1144.0,797.20 1144.3,797.20 1144.6,797.20 1144.9,797.20 1145.1,797.20 1145.4,797.20 1145.7,797.20 1146.0,797.20 1146.2,797.20 1146.5,797.20 1146.8,797.20 1147.0,797.20 1147.3,797.20 1147.6,797.20 1147.9,797.20 1148.1,797.20 1148.4,797.20 1148.7,797.19 1149.0,797.19 1149.2,797.19 1149.5,797.18 1149.8,797.17 1150.0,797.17 1150.3,797.15 1150.6,797.14 1150.9,797.11 1151.1,797.09 1151.4,797.05 1151.7,797.01 1152.0,796.95 1152.2,796.89 1152.5,796.81 1152.8,796.72 1153.1,796.61 1153.3,796.48 1153.6,796.34 1153.9,796.18 1154.1,796.01 1154.4,795.82 1154.7,795.62 1155.0,795.41 1155.2,795.19 1155.5,794.98 1155.8,794.76 1156.1,794.56 1156.3,794.37 1156.6,794.20 1156.9,794.05 1157.2,793.94 1157.4,793.86 1157.7,793.81 1158.0,793.80 1158.2,793.83 1158.5,793.89 1158.8,793.99 1159.1,794.12 1159.3,794.28 1159.6,794.46 1159.9,794.66 1160.2,794.87 1160.4,795.08 1160.7,795.30 1161.0,795.51 1161.3,795.72 1161.5,795.91 1161.8,796.10 1162.1,796.26 1162.3,796.41 1162.6,796.55 1162.9,796.66 1163.2,796.76 1163.4,796.85 1163.7,796.92 1164.0,796.98 1164.3,797.03 1164.5,797.07 1164.8,797.10 1165.1,797.13 1165.3,797.14 1165.6,797.16 1165.9,797.17 1166.2,797.18 1166.4,797.18 1166.7,797.19 1167.0,797.19 1167.3,797.19 1167.5,797.20 1167.8,797.20 1168.1,797.20 1168.4,797.20 1168.6,797.20 1168.9,797.20 1169.2,797.20 1169.4,797.20 1169.7,797.20 1170.0,797.20 1170.3,797.20 1170.5,797.20 1170.8,797.20 1171.1,797.20 1171.4,797.20 1171.6,797.20 1171.9,797.20 1172.2,797.20 1172.5,797.20 1172.7,797.20 1173.0,797.20 1173.3,797.20 1173.5,797.20 1173.8,797.20 1174.1,797.20 1174.4,797.20 1174.6,797.20 1174.9,797.20 1175.2,797.20 1175.5,797.20 1175.7,797.20 1176.0,797.20 1176.3,797.20 1176.6,797.20 1176.8,797.20 1177.1,797.20 1177.4,797.20 1177.6,797.20 1177.9,797.20 1178.2,797.20 1178.5,797.20 1178.7,797.20 1179.0,797.20 1179.3,797.20 1179.6,797.20 1179.8,797.20 1180.1,797.20 1180.4,797.20 1180.6,797.20 1180.9,797.20 1181.2,797.20 1181.5,797.20 1181.7,797.20 1182.0,797.20 1182.3,797.20 1182.6,797.20 1182.8,797.20 1183.1,797.20 1183.4,797.20 1183.7,797.20 1183.9,797.20" fill="none" stroke="#0000ff" stroke-width="1.7" stroke-linejoin="round"/>
<rect x="1108.9" y="692.0" width="73.2" height="16.2" rx="2" fill="#fff" fill-opacity="0.8" stroke="#cccccc" stroke-width="1"/>
<line x1="1111.4" y1="699.9" x2="1133.5" y2="699.9" stroke="#0000ff" stroke-width="1.8"/>
<text x="1138.16" y="703.50" font-size="10.30" textLength="39.97" lengthAdjust="spacingAndGlyphs" fill="#000">x=1053</text>
<text x="1045.88" y="850.00" font-size="10.30" textLength="6.64" lengthAdjust="spacingAndGlyphs" fill="#000">Y</text>
<text transform="translate(853.60,766.80) rotate(-90)" x="0" y="0" font-size="10.30" textLength="34.42" lengthAdjust="spacingAndGlyphs">counts</text>
<text transform="translate(1193.50,729.17) rotate(90)" x="0" y="0" font-size="10.30" textLength="39.45" lengthAdjust="spacingAndGlyphs">cut in y</text>
<rect x="1" y="849" width="1243" height="19.8" fill="#ececec"/>
<text x="5.65" y="864.00" font-size="10.40" textLength="173.89" lengthAdjust="spacingAndGlyphs" fill="#000">powered by QC: www.eso.org/HC</text>
<text x="936.10" y="864.30" font-size="10.40" textLength="303.56" lengthAdjust="spacingAndGlyphs" fill="#000">created by qc_rawdisp.py v1.2.3 on 2025-12-16T06:53:19</text>
</svg></body></html>
